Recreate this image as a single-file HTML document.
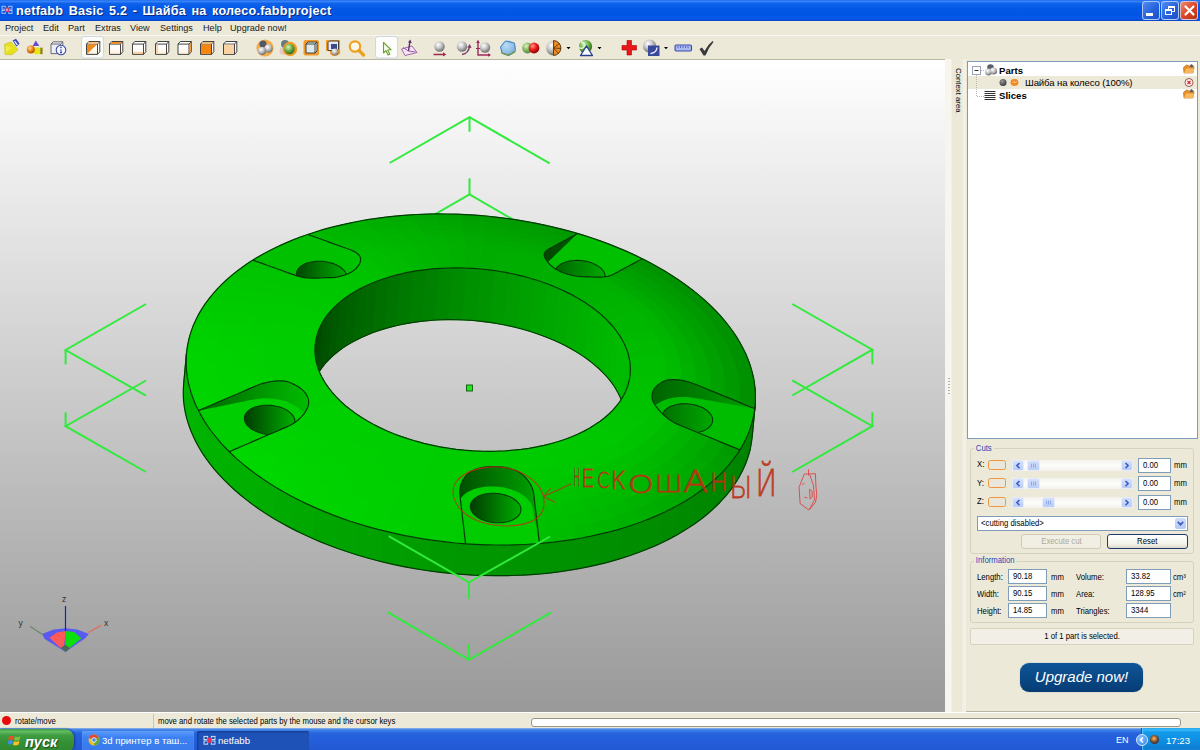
<!DOCTYPE html>
<html lang="ru">
<head>
<meta charset="utf-8">
<title>netfabb Basic 5.2 - Шайба на колесо.fabbproject</title>
<style>
*{box-sizing:border-box;margin:0;padding:0}
html,body{width:1200px;height:750px;overflow:hidden;background:#ece9d8}
body{position:relative;font-family:"Liberation Sans","DejaVu Sans",sans-serif;font-size:9.5px;color:#000}
.abs{position:absolute}
#titlebar{left:0;top:0;width:1200px;height:21px;background:linear-gradient(#1a6af0 0%,#3b86fb 6%,#0f62ea 16%,#0458e6 40%,#0255e4 70%,#0659ea 88%,#0a4cd2 96%,#0b43c0 100%)}
#titletext{left:16px;top:3px;color:#fff;font-weight:bold;font-size:12.6px;line-height:16px;white-space:nowrap;letter-spacing:.25px;word-spacing:1.7px;text-shadow:1px 1px 0 #0a2a80}
.wbtn{top:1px;width:18px;height:19px;border:1px solid rgba(220,232,255,.75);border-radius:3.5px;background:linear-gradient(135deg,#4f8cf0,#2862dc 55%,#1c4fc4)}
#menubar{left:0;top:21px;width:1200px;height:14px;background:#ece9d8}
#menubar span{position:absolute;top:0;font-size:9.6px;line-height:14px;white-space:nowrap;transform:scaleX(.95);transform-origin:0 50%;color:#1a1a1a}
#toolbar{left:0;top:35px;width:1200px;height:25px;background:#ece9d8;border-top:1px solid #f8f6ee;border-bottom:1px solid #b9b7a6}
#viewport{left:0;top:60px;width:945px;height:652px;overflow:hidden;background:linear-gradient(#ffffff,#999999)}
#splitter{left:945px;top:59px;width:22px;height:653px;background:linear-gradient(90deg,#f6f4ec 0,#f8f6ee 6px,#ece9d8 7px,#ece9d8 17px,#f3f1e6 18px,#f3f1e6 21px,#e4e0cf 22px)}
#ctxlabel{left:953px;top:68px;width:10px;height:50px;writing-mode:vertical-rl;font-size:7.8px;line-height:10px;white-space:nowrap}
#rpanel{left:967px;top:59px;width:233px;height:653px;background:#ece9d8}
#tree{left:967px;top:61px;width:231px;height:378px;background:#fff;border:1px solid #7f9db9}
#statusbar{left:0;top:712px;width:1200px;height:16px;background:#ece9d8;border-top:1px solid #fff}
#taskbar{left:0;top:728px;width:1200px;height:22px;background:linear-gradient(#9bb8e8 0%,#4a8ae6 6%,#3a7ce8 12%,#2663dc 24%,#245ddb 60%,#2358d2 100%)}

.gb{border:1px solid #d6d2c0;border-radius:3px}
.gbl{color:#1f47b8;font-size:8.6px;line-height:10px;background:#ece9d8;padding:0 2px;white-space:nowrap}
.lb{font-size:8.6px;line-height:11px;white-space:nowrap}
.gbl{transform:scaleX(.9);transform-origin:0 50%}
.lb>b,.inp>b{display:inline-block;font-weight:normal;transform:scaleX(.9);transform-origin:0 50%}
.ctr>b{transform-origin:50% 50%}
.inp{background:#fff;border:1px solid #7f9db9;font-size:8.6px;line-height:13px;padding-left:4px;white-space:nowrap}
.sb{height:11px;border-radius:2px;background:linear-gradient(#d4e0fb,#b9cdf6);border:1px solid #e6ecfb}
.trk{height:11px;background:linear-gradient(#f3f2ec,#fdfdfb 50%,#f3f2ec)}
.ob{width:18px;height:10px;border:1.5px solid #f0963c;border-radius:2.5px;background:#e9e7dc}
</style>
</head>
<body>
<div id="titlebar" class="abs"></div>
<svg class="abs" style="left:1px;top:5px;opacity:.85" width="12" height="10" viewBox="0 0 13 12">
 <g fill="none" stroke="#dfe6ff" stroke-width="1"><rect x="0.5" y="1.5" width="4" height="3.5"/><rect x="0.5" y="6.5" width="4" height="3.5"/><rect x="8.5" y="1.5" width="4" height="3.5"/><rect x="8.5" y="6.5" width="4" height="3.5"/></g>
 <rect x="4" y="3" width="5" height="5.5" fill="#e8305a"/><rect x="5.5" y="4.5" width="2" height="2.5" fill="#ffd0dc"/>
</svg>
<div id="titletext" class="abs">netfabb Basic 5.2 - Шайба на колесо.fabbproject</div>
<div class="abs wbtn" style="left:1142px"><div class="abs" style="left:3px;top:11px;width:7px;height:3px;background:#fff"></div></div>
<div class="abs wbtn" style="left:1161px">
 <div class="abs" style="left:6px;top:4px;width:7px;height:6px;border:1px solid #fff;border-top-width:2px"></div>
 <div class="abs" style="left:3px;top:7px;width:7px;height:6px;border:1px solid #fff;border-top-width:2px;background:#2a66dc"></div>
</div>
<div class="abs wbtn" style="left:1180px;background:linear-gradient(135deg,#ee8a6e,#d9482a 50%,#b8300f)">
 <svg class="abs" style="left:0.500px;top:1px" width="15" height="15" viewBox="0 0 15 15"><path d="M3.5 3.5 L11.5 11.5 M11.5 3.5 L3.5 11.5" stroke="#fff" stroke-width="2.2" stroke-linecap="round"/></svg>
</div>
<div id="menubar" class="abs">
 <span style="left:5px">Project</span><span style="left:43px">Edit</span><span style="left:68px">Part</span><span style="left:95px">Extras</span><span style="left:130px">View</span><span style="left:160px">Settings</span><span style="left:203px">Help</span><span style="left:230px">Upgrade now!</span>
</div>
<div id="toolbar" class="abs"></div>
<svg class="abs" style="left:0;top:35px" width="760" height="24" viewBox="0 35 760 24">
<defs>
 <radialGradient id="gsph" cx="0.38" cy="0.32" r="0.7"><stop offset="0" stop-color="#ffffff"/><stop offset="0.45" stop-color="#c9c9c9"/><stop offset="1" stop-color="#6e6e6e"/></radialGradient>
 <radialGradient id="gorb" cx="0.38" cy="0.32" r="0.7"><stop offset="0" stop-color="#ffd9a0"/><stop offset="0.5" stop-color="#f08a1c"/><stop offset="1" stop-color="#a84e00"/></radialGradient>
 <radialGradient id="ggrn" cx="0.38" cy="0.32" r="0.7"><stop offset="0" stop-color="#d8f3c0"/><stop offset="0.5" stop-color="#6db24a"/><stop offset="1" stop-color="#2f6a1c"/></radialGradient>
 <radialGradient id="gred" cx="0.38" cy="0.32" r="0.7"><stop offset="0" stop-color="#ff9a8a"/><stop offset="0.5" stop-color="#ee1c1c"/><stop offset="1" stop-color="#8e0000"/></radialGradient>
 <radialGradient id="gblu" cx="0.38" cy="0.32" r="0.7"><stop offset="0" stop-color="#e8f4ff"/><stop offset="0.6" stop-color="#8cb8e0"/><stop offset="1" stop-color="#4a78a8"/></radialGradient>
 <linearGradient id="gface" x1="0" y1="0" x2="0" y2="1"><stop offset="0" stop-color="#ffffff"/><stop offset="0.5" stop-color="#ffffff"/><stop offset="1" stop-color="#fdecd6"/></linearGradient>
 <g id="cube"><path d="M0.500 3.100 L2.800 0.500 H13.800 V10.800 L11.500 13.400 H0.500 Z" fill="url(#gface)" stroke="#303030" stroke-width="0.900" stroke-linejoin="round"/><path d="M0.500 3.100 H11.500 V13.400 M11.500 3.100 L13.800 0.500" fill="none" stroke="#303030" stroke-width="0.900"/></g>
</defs>
<!-- open project -->
<path d="M4.600 44.200 L11 42 L18 49.800 L12.200 54.600 L5 54.600 Z" fill="#e6e01e" stroke="#c4bc18" stroke-width="0.600"/>
<path d="M6 52.500 L11.500 48 L6 45.500 Z" fill="#f6f25a" opacity="0.700"/>
<path d="M12.600 40.600 L16 38.800 L19.600 43.800 L16.400 46.600 Z" fill="#3a48b8"/><path d="M14.600 41.200 l2.800 3.600" stroke="#fff" stroke-width="1.100"/>
<!-- shapes -->
<path d="M35.800 40.500 L39.400 46 H32.600 Z" fill="#6a4ad0"/>
<rect x="34.200" y="47.600" width="6" height="6.600" fill="#ece410"/><rect x="40.200" y="47.600" width="2.400" height="6.600" fill="#8a8a10"/>
<circle cx="30.800" cy="49.600" r="4" fill="url(#gorb)"/>
<!-- box info -->
<path d="M51 44 L53.200 41.800 H62.800 V51 M51 44 H60.500 V53.600 H51 Z M60.500 44 L62.800 41.800" fill="#eeeef0" stroke="#5a5e6a" stroke-width="0.900"/>
<circle cx="61" cy="50" r="4.800" fill="#f4f6ff" stroke="#3a4aa8" stroke-width="1.100"/><path d="M61 49.200 v3 M60 52.600 h2" stroke="#3a4aa8" stroke-width="1.100"/><circle cx="61" cy="47.400" r="0.800" fill="#3a4aa8"/>
<!-- selected bg -->
<rect x="81.5" y="36.5" width="22" height="21.5" rx="2.5" fill="#fbfbf8" stroke="#cfd6e4" stroke-width="1"/>
<!-- cubes -->
<g transform="translate(86,41)"><use href="#cube"/><path d="M1 3.600 H11 L1 12.900 Z" fill="#f08a1c"/><path d="M3 1 H13.200 L11.300 2.700 H1.500 Z" fill="#f8c080"/></g>
<g transform="translate(109,41)"><use href="#cube"/><path d="M3 1 H13.200 L11.300 2.700 H1.500 Z" fill="#f08a1c"/></g>
<g transform="translate(132,41)"><use href="#cube"/><path d="M1 11.200 H11 V12.900 H1 Z" fill="#f8c898"/></g>
<g transform="translate(155,41)"><use href="#cube"/><path d="M1 3.600 H3 V12.900 H1 Z" fill="#f8d4ac"/></g>
<g transform="translate(177.500,41)"><use href="#cube"/><path d="M12 3.300 L13.300 1.800 V10.600 L12 12.200 Z" fill="#f08a1c"/></g>
<g transform="translate(200,41)"><use href="#cube"/><path d="M1 3.600 H11 V12.900 H1 Z" fill="#f7860c"/><path d="M3 1 H13.200 L11.300 2.700 H1.500 Z" fill="#fbb868"/></g>
<g transform="translate(223,41)"><use href="#cube"/><path d="M1 3.600 H11 V12.900 H1 Z" fill="#fbd2a4"/></g>
<!-- zoom icons -->
<g><circle cx="265" cy="48" r="8.6" fill="#f6a030" opacity="0.85"/><circle cx="263" cy="44" r="3.6" fill="#50586a"/><circle cx="268.5" cy="48.5" r="4.2" fill="url(#gsph)"/><circle cx="262" cy="51" r="4" fill="url(#gsph)"/></g>
<g><circle cx="283.5" cy="51" r="4" fill="#e8c8c0"/><circle cx="285" cy="44" r="4" fill="#6a7a80"/><circle cx="290" cy="49" r="7.2" fill="#f09a20"/><circle cx="289.5" cy="49" r="5.2" fill="url(#ggrn)"/></g>
<g><rect x="303.5" y="40" width="15.5" height="15.5" rx="2" fill="#f09a28"/><path d="M306 44 L308 42 H317 V51 L315 53 H306 Z" fill="#dfe9ea" stroke="#333" stroke-width="0.9"/><path d="M306 44 H315 V53 M315 44 L317 42" fill="none" stroke="#333" stroke-width="0.9"/></g>
<g><path d="M326 40 H340 V50 Q342 55 335 56 Q329 56 330 51 H326 Z" fill="#f09a28"/><path d="M328 42.5 L329.5 41 H338.5 V49 L337 50.5 H328 Z" fill="#e8e8ee" stroke="#333" stroke-width="0.9"/><rect x="331" y="44" width="6" height="5" fill="#3c4a8a"/><circle cx="335" cy="52" r="3.4" fill="url(#gsph)"/></g>
<g><circle cx="355" cy="46.5" r="5.2" fill="#fff8e8" stroke="#f0a020" stroke-width="2.2"/><path d="M359 50.5 L363.5 55" stroke="#e8a020" stroke-width="3.2" stroke-linecap="round"/></g>
<!-- selected select tool -->
<rect x="375.5" y="36.5" width="22" height="21.5" rx="2.5" fill="#fdfdfb" stroke="#cfd6e4" stroke-width="1"/>
<path d="M383.5 42.5 L383.5 53 L386 50.6 L388 55 L389.8 54.2 L387.8 50 L391.2 49.8 Z" fill="#f4fbe8" stroke="#6aa030" stroke-width="1.1" stroke-linejoin="round"/>
<!-- axes icon -->
<path d="M401.5 49 L412 46 L417 52.5 L405 55.5 Z" fill="#f4e4f4" stroke="#9a5aa0" stroke-width="0.9"/>
<path d="M408.5 51 L410 41" stroke="#5a2a70" stroke-width="1.4"/><path d="M408 42.5 L410.2 39.5 L411.8 43" fill="#5a2a70"/>
<path d="M408.5 51 L403 47.5 M408.5 51 L415.5 52" stroke="#9a5aa0" stroke-width="1"/>
<!-- move -->
<circle cx="439.5" cy="46.5" r="5.2" fill="url(#gsph)"/><path d="M433.5 54.5 H444" stroke="#a02848" stroke-width="1.5"/><path d="M443 52.3 L446.3 54.5 L443 56.6 Z" fill="#a02848"/>
<!-- rotate -->
<circle cx="462" cy="46.5" r="5.2" fill="url(#gsph)"/><path d="M462 54.5 Q468.5 53.5 469.5 46.5" fill="none" stroke="#7a3a70" stroke-width="1.5"/><path d="M467.3 47.6 L469.8 44 L471.5 48 Z" fill="#7a3a70"/>
<!-- scale -->
<circle cx="485" cy="47.5" r="5.2" fill="url(#gsph)"/><path d="M478 41 V55 H490" fill="none" stroke="#a02858" stroke-width="1.4"/><path d="M476.2 43 L478 39.8 L479.8 43 Z M488 53.2 L491 55 L488 56.8 Z" fill="#a02858"/><path d="M476 48.5 h4" stroke="#a02858" stroke-width="1"/>
<!-- blue polygon sphere -->
<circle cx="508" cy="48" r="7.4" fill="url(#gblu)"/><path d="M500.5 47 L505.5 41 L514.5 43 L515.5 50.5 L509 55.5 L502 53 Z" fill="#9ccaf0" fill-opacity="0.6" stroke="#3a78b8" stroke-width="0.9"/><path d="M501 52.5 Q508 57.5 515.5 51.5" fill="none" stroke="#7a9a40" stroke-width="1.2"/>
<!-- green red -->
<circle cx="527.5" cy="48" r="5.4" fill="url(#ggrn)" opacity="0.8"/><circle cx="534" cy="48" r="5.4" fill="url(#gred)"/>
<!-- half sphere -->
<circle cx="553.5" cy="48" r="7.4" fill="url(#gsph)"/><path d="M553.5 40.6 A7.4 7.4 0 0 1 553.5 55.4 Z" fill="#f08a1c" stroke="#3a2a10" stroke-width="0.8"/><path d="M553.5 48 L559.5 43.5 M553.5 48 L560.8 48.5 M553.5 48 L558.5 53.5" stroke="#3a2a10" stroke-width="0.7"/>
<path d="M566.5 47 h4 l-2 2.2 Z" fill="#000"/>
<!-- green sphere with triangle -->
<circle cx="585.5" cy="46.5" r="6.6" fill="url(#ggrn)"/><path d="M578 45 a3.2 3.2 0 1 0 3 -3" fill="none" stroke="#e8f4e0" stroke-width="1.3"/>
<path d="M586.5 46 L592.5 55.5 H580.5 Z" fill="#f4f8ff" stroke="#28408a" stroke-width="1.3" stroke-linejoin="round"/>
<path d="M597.5 47 h4 l-2 2.2 Z" fill="#000"/>
<!-- red cross -->
<path d="M627 40.5 H631.5 V45.5 H636.5 V50 H631.5 V55 H627 V50 H622 V45.5 H627 Z" fill="#e81818" stroke="#b00000" stroke-width="0.6"/>
<!-- sphere with blue square -->
<circle cx="649.5" cy="46" r="6.6" fill="url(#gsph)"/><rect x="648" y="45.5" width="11.5" height="10.5" fill="#3a4a9a"/><path d="M650.5 53.5 Q656.5 53 657 47.5" fill="none" stroke="#e8ecff" stroke-width="1.4"/>
<path d="M664 47 h4 l-2 2.2 Z" fill="#000"/>
<!-- ruler -->
<rect x="675" y="45" width="16.5" height="6" rx="1.2" fill="#a8b8f0" stroke="#3a4aa8" stroke-width="1.1"/><path d="M678 46 v2 M680.5 46 v2 M683 46 v2 M685.5 46 v2 M688 46 v2" stroke="#3a4aa8" stroke-width="0.7"/>
<!-- checkmark -->
<path d="M699.5 49 L702 47.5 L704.5 51 Q708 44.5 712.5 41 L713.5 42 Q708.5 47.5 705.5 55.5 L703.5 55.5 Z" fill="#3a3a3a"/>
</svg>
<div id="viewport" class="abs">
<svg class="abs" style="left:0;top:0" width="945" height="652" viewBox="0 0 945 652" font-family="Liberation Sans, sans-serif">
<g fill="none" stroke="#30ea3c" stroke-width="2" stroke-linecap="butt"><path d="M389.7 103.0 L469.5 57.2 L549.7 103.3" /><path d="M469.5 57.2 L469.5 71.7" /><path d="M389.5 180.5 L469.5 134.5 L549.5 180.5" /><path d="M469.5 134.5 L469.5 118.3" /><path d="M146.0 244.0 L65.6 290.0 L146.0 335.7" /><path d="M65.6 290.0 L65.6 304.4" /><path d="M146.0 320.5 L65.6 366.2 L146.0 412.0" /><path d="M65.6 366.2 L65.6 352.3" /><path d="M792.3 244.0 L872.4 289.7 L792.3 335.5" /><path d="M872.4 289.7 L872.4 304.4" /><path d="M792.3 320.3 L872.4 366.2 L792.3 412.0" /><path d="M872.4 366.2 L872.4 352.3" /></g>
<g shape-rendering="geometricPrecision">
<path d="M186.5 293.1 L187.7 284.6 L189.7 276.2 L192.4 267.9 L195.9 259.7 L200.1 251.7 L205.1 243.9 L210.8 236.3 L217.3 228.9 L224.4 221.8 L232.2 214.9 L240.6 208.4 L249.7 202.1 L259.4 196.1 L269.7 190.5 L280.5 185.3 L291.8 180.4 L303.7 175.9 L316.0 171.8 L328.7 168.0 L341.8 164.8 L355.3 161.9 L369.0 159.4 L383.1 157.4 L397.4 155.9 L411.9 154.8 L426.5 154.1 L441.3 153.9 L456.2 154.2 L471.1 154.9 L486.0 156.0 L500.8 157.6 L515.6 159.7 L530.2 162.2 L544.7 165.1 L559.0 168.4 L573.1 172.2 L586.8 176.3 L600.3 180.9 L613.4 185.8 L626.1 191.1 L638.3 196.8 L650.2 202.8 L661.5 209.1 L672.3 215.7 L682.5 222.6 L692.2 229.7 L701.3 237.1 L709.7 244.8 L717.5 252.6 L724.6 260.6 L731.0 268.8 L736.7 277.1 L741.6 285.5 L745.9 294.1 L749.3 302.7 L752.0 311.3 L754.0 320.0 L755.1 328.6 L755.5 337.3 L755.1 345.9 L752.2 376.5 L751.1 385.1 L749.1 393.5 L746.4 401.8 L742.9 409.9 L738.6 417.9 L733.6 425.8 L727.9 433.4 L721.5 440.7 L714.4 447.9 L706.6 454.7 L698.1 461.3 L689.0 467.6 L679.3 473.5 L669.1 479.1 L658.2 484.4 L646.9 489.3 L635.1 493.8 L622.8 497.9 L610.1 501.6 L597.0 504.9 L583.5 507.8 L569.7 510.2 L555.7 512.2 L541.4 513.8 L526.9 514.9 L512.2 515.5 L497.4 515.7 L482.6 515.5 L467.7 514.8 L452.8 513.6 L437.9 512.0 L423.2 510.0 L408.5 507.5 L394.0 504.6 L379.7 501.2 L365.7 497.5 L351.9 493.3 L338.5 488.8 L325.4 483.8 L312.7 478.5 L300.4 472.9 L288.6 466.9 L277.3 460.6 L266.5 454.0 L256.2 447.1 L246.5 439.9 L237.5 432.5 L229.1 424.9 L221.3 417.1 L214.2 409.1 L207.8 400.9 L202.1 392.6 L197.1 384.1 L192.9 375.6 L189.4 367.0 L186.7 358.4 L184.8 349.7 L183.6 341.0 L183.3 332.4 L183.7 323.8 Z M630.2 314.2 L629.5 318.9 L628.4 323.6 L626.9 328.2 L625.0 332.7 L622.6 337.1 L619.9 341.5 L616.7 345.7 L613.1 349.8 L609.2 353.7 L604.9 357.5 L600.2 361.2 L595.1 364.6 L589.8 367.9 L584.1 371.1 L578.1 374.0 L571.8 376.7 L565.3 379.2 L558.4 381.5 L551.4 383.5 L544.1 385.3 L536.7 386.9 L529.0 388.3 L521.3 389.4 L513.3 390.2 L505.3 390.9 L497.2 391.2 L489.0 391.3 L480.8 391.2 L472.5 390.8 L464.2 390.2 L456.0 389.3 L447.8 388.1 L439.7 386.8 L431.7 385.1 L423.8 383.3 L416.0 381.2 L408.4 378.9 L400.9 376.4 L393.6 373.7 L386.6 370.7 L379.8 367.6 L373.3 364.3 L367.0 360.8 L361.0 357.1 L355.3 353.3 L350.0 349.3 L344.9 345.2 L340.3 341.0 L336.0 336.7 L332.0 332.2 L328.5 327.7 L325.3 323.1 L322.6 318.4 L320.2 313.7 L318.3 308.9 L316.8 304.1 L315.7 299.3 L315.1 294.5 L314.9 289.7 L315.1 285.0 L315.8 280.3 L316.9 275.6 L318.4 271.0 L320.3 266.5 L322.7 262.0 L325.4 257.7 L328.6 253.5 L332.2 249.4 L336.1 245.4 L340.4 241.6 L345.1 238.0 L350.1 234.5 L355.5 231.2 L361.2 228.1 L367.2 225.2 L373.5 222.5 L380.0 220.0 L386.9 217.7 L393.9 215.7 L401.2 213.8 L408.6 212.2 L416.3 210.9 L424.0 209.8 L432.0 208.9 L440.0 208.3 L448.1 208.0 L456.3 207.8 L464.5 208.0 L472.8 208.4 L481.0 209.0 L489.3 209.9 L497.5 211.0 L505.6 212.4 L513.6 214.0 L521.5 215.9 L529.3 218.0 L536.9 220.3 L544.4 222.8 L551.6 225.5 L558.7 228.5 L565.5 231.6 L572.0 234.9 L578.3 238.4 L584.3 242.1 L590.0 245.9 L595.3 249.8 L600.4 253.9 L605.0 258.2 L609.3 262.5 L613.3 267.0 L616.8 271.5 L620.0 276.1 L622.7 280.8 L625.1 285.5 L627.0 290.3 L628.5 295.0 L629.5 299.8 L630.2 304.7 L630.4 309.4 Z" fill="rgb(0,170,0)" fill-rule="evenodd"/>
<path d="M753.4 317.1 L755.3 331.5 L752.5 362.2 L750.5 347.8 Z" fill="rgb(0,128,0)" stroke="rgb(0,128,0)" stroke-width="0.9"/>
<path d="M755.3 331.5 L755.1 345.9 L752.2 376.5 L752.5 362.2 Z" fill="rgb(0,128,0)" stroke="rgb(0,128,0)" stroke-width="0.9"/>
<path d="M755.1 345.9 L752.7 360.0 L749.8 390.7 L752.2 376.5 Z" fill="rgb(0,129,0)" stroke="rgb(0,129,0)" stroke-width="0.9"/>
<path d="M752.7 360.0 L748.1 373.9 L745.3 404.5 L749.8 390.7 Z" fill="rgb(0,130,0)" stroke="rgb(0,130,0)" stroke-width="0.9"/>
<path d="M748.1 373.9 L741.5 387.3 L738.6 417.9 L745.3 404.5 Z" fill="rgb(0,131,0)" stroke="rgb(0,131,0)" stroke-width="0.9"/>
<path d="M741.5 387.3 L732.7 400.2 L729.9 430.9 L738.6 417.9 Z" fill="rgb(0,133,0)" stroke="rgb(0,133,0)" stroke-width="0.9"/>
<path d="M732.7 400.2 L722.0 412.5 L719.2 443.2 L729.9 430.9 Z" fill="rgb(0,134,0)" stroke="rgb(0,134,0)" stroke-width="0.9"/>
<path d="M722.0 412.5 L709.4 424.1 L706.6 454.7 L719.2 443.2 Z" fill="rgb(0,135,0)" stroke="rgb(0,135,0)" stroke-width="0.9"/>
<path d="M709.4 424.1 L695.0 434.9 L692.1 465.5 L706.6 454.7 Z" fill="rgb(0,137,0)" stroke="rgb(0,137,0)" stroke-width="0.9"/>
<path d="M695.0 434.9 L678.8 444.8 L676.0 475.4 L692.1 465.5 Z" fill="rgb(0,138,0)" stroke="rgb(0,138,0)" stroke-width="0.9"/>
<path d="M678.8 444.8 L661.1 453.7 L658.2 484.4 L676.0 475.4 Z" fill="rgb(0,139,0)" stroke="rgb(0,139,0)" stroke-width="0.9"/>
<path d="M661.1 453.7 L641.9 461.7 L639.1 492.3 L658.2 484.4 Z" fill="rgb(0,141,0)" stroke="rgb(0,141,0)" stroke-width="0.9"/>
<path d="M641.9 461.7 L621.4 468.5 L618.6 499.2 L639.1 492.3 Z" fill="rgb(0,142,0)" stroke="rgb(0,142,0)" stroke-width="0.9"/>
<path d="M621.4 468.5 L599.8 474.2 L597.0 504.9 L618.6 499.2 Z" fill="rgb(0,143,0)" stroke="rgb(0,143,0)" stroke-width="0.9"/>
<path d="M599.8 474.2 L577.2 478.8 L574.4 509.5 L597.0 504.9 Z" fill="rgb(0,145,0)" stroke="rgb(0,145,0)" stroke-width="0.9"/>
<path d="M577.2 478.8 L553.8 482.1 L550.9 512.8 L574.4 509.5 Z" fill="rgb(0,146,0)" stroke="rgb(0,146,0)" stroke-width="0.9"/>
<path d="M553.8 482.1 L529.7 484.2 L526.9 514.9 L550.9 512.8 Z" fill="rgb(0,147,0)" stroke="rgb(0,147,0)" stroke-width="0.9"/>
<path d="M529.7 484.2 L505.2 485.1 L502.4 515.7 L526.9 514.9 Z" fill="rgb(0,149,0)" stroke="rgb(0,149,0)" stroke-width="0.9"/>
<path d="M505.2 485.1 L480.5 484.6 L477.6 515.3 L502.4 515.7 Z" fill="rgb(0,150,0)" stroke="rgb(0,150,0)" stroke-width="0.9"/>
<path d="M480.5 484.6 L455.6 483.0 L452.8 513.6 L477.6 515.3 Z" fill="rgb(0,151,0)" stroke="rgb(0,151,0)" stroke-width="0.9"/>
<path d="M455.6 483.0 L430.9 480.0 L428.1 510.7 L452.8 513.6 Z" fill="rgb(0,153,0)" stroke="rgb(0,153,0)" stroke-width="0.9"/>
<path d="M430.9 480.0 L406.5 475.9 L403.7 506.6 L428.1 510.7 Z" fill="rgb(0,156,0)" stroke="rgb(0,156,0)" stroke-width="0.9"/>
<path d="M406.5 475.9 L382.6 470.6 L379.7 501.2 L403.7 506.6 Z" fill="rgb(0,158,0)" stroke="rgb(0,158,0)" stroke-width="0.9"/>
<path d="M382.6 470.6 L359.3 464.1 L356.5 494.8 L379.7 501.2 Z" fill="rgb(0,161,0)" stroke="rgb(0,161,0)" stroke-width="0.9"/>
<path d="M359.3 464.1 L336.9 456.5 L334.1 487.2 L356.5 494.8 Z" fill="rgb(0,163,0)" stroke="rgb(0,163,0)" stroke-width="0.9"/>
<path d="M336.9 456.5 L315.5 447.9 L312.7 478.5 L334.1 487.2 Z" fill="rgb(0,165,0)" stroke="rgb(0,165,0)" stroke-width="0.9"/>
<path d="M315.5 447.9 L295.3 438.3 L292.5 468.9 L312.7 478.5 Z" fill="rgb(0,168,0)" stroke="rgb(0,168,0)" stroke-width="0.9"/>
<path d="M295.3 438.3 L276.5 427.8 L273.6 458.4 L292.5 468.9 Z" fill="rgb(0,170,0)" stroke="rgb(0,170,0)" stroke-width="0.9"/>
<path d="M276.5 427.8 L259.1 416.4 L256.2 447.1 L273.6 458.4 Z" fill="rgb(0,173,0)" stroke="rgb(0,173,0)" stroke-width="0.9"/>
<path d="M259.1 416.4 L243.3 404.4 L240.4 435.0 L256.2 447.1 Z" fill="rgb(0,175,0)" stroke="rgb(0,175,0)" stroke-width="0.9"/>
<path d="M243.3 404.4 L229.2 391.7 L226.4 422.3 L240.4 435.0 Z" fill="rgb(0,176,0)" stroke="rgb(0,176,0)" stroke-width="0.9"/>
<path d="M229.2 391.7 L217.0 378.4 L214.2 409.1 L226.4 422.3 Z" fill="rgb(0,177,0)" stroke="rgb(0,177,0)" stroke-width="0.9"/>
<path d="M217.0 378.4 L206.7 364.7 L203.9 395.3 L214.2 409.1 Z" fill="rgb(0,178,0)" stroke="rgb(0,178,0)" stroke-width="0.9"/>
<path d="M206.7 364.7 L198.5 350.6 L195.6 381.3 L203.9 395.3 Z" fill="rgb(0,179,0)" stroke="rgb(0,179,0)" stroke-width="0.9"/>
<path d="M198.5 350.6 L192.3 336.3 L189.4 367.0 L195.6 381.3 Z" fill="rgb(0,180,0)" stroke="rgb(0,180,0)" stroke-width="0.9"/>
<path d="M192.3 336.3 L188.2 321.9 L185.4 352.6 L189.4 367.0 Z" fill="rgb(0,181,0)" stroke="rgb(0,181,0)" stroke-width="0.9"/>
<path d="M188.2 321.9 L186.3 307.5 L183.4 338.1 L185.4 352.6 Z" fill="rgb(0,182,0)" stroke="rgb(0,182,0)" stroke-width="0.9"/>
<path d="M186.3 307.5 L186.5 293.1 L183.7 323.8 L183.4 338.1 Z" fill="rgb(0,183,0)" stroke="rgb(0,183,0)" stroke-width="0.9"/>
<path d="M186.5 293.1 L188.9 279.0 L186.1 309.7 L183.7 323.8 Z" fill="rgb(0,184,0)" stroke="rgb(0,184,0)" stroke-width="0.9"/>
<path d="M188.9 279.0 L193.5 265.1 L190.6 295.8 L186.1 309.7 Z" fill="rgb(0,184,0)" stroke="rgb(0,184,0)" stroke-width="0.9"/>
<path d="M630.2 314.2 L628.8 322.0 L665.2 327.3 L666.8 317.6 Z" fill="rgb(0,192,0)" stroke="rgb(0,192,0)" stroke-width="0.9"/>
<path d="M628.8 322.0 L626.3 329.7 L662.1 336.7 L665.2 327.3 Z" fill="rgb(0,193,0)" stroke="rgb(0,193,0)" stroke-width="0.9"/>
<path d="M626.3 329.7 L622.6 337.1 L657.5 345.9 L662.1 336.7 Z" fill="rgb(0,194,0)" stroke="rgb(0,194,0)" stroke-width="0.9"/>
<path d="M622.6 337.1 L617.8 344.3 L651.6 354.7 L657.5 345.9 Z" fill="rgb(0,195,0)" stroke="rgb(0,195,0)" stroke-width="0.9"/>
<path d="M617.8 344.3 L611.9 351.1 L644.2 363.1 L651.6 354.7 Z" fill="rgb(0,196,0)" stroke="rgb(0,196,0)" stroke-width="0.9"/>
<path d="M611.9 351.1 L604.9 357.5 L635.6 371.0 L644.2 363.1 Z" fill="rgb(0,197,0)" stroke="rgb(0,197,0)" stroke-width="0.9"/>
<path d="M604.9 357.5 L596.9 363.5 L625.8 378.4 L635.6 371.0 Z" fill="rgb(0,198,0)" stroke="rgb(0,198,0)" stroke-width="0.9"/>
<path d="M596.9 363.5 L587.9 369.0 L614.7 385.1 L625.8 378.4 Z" fill="rgb(0,199,0)" stroke="rgb(0,199,0)" stroke-width="0.9"/>
<path d="M587.9 369.0 L578.1 374.0 L602.6 391.3 L614.7 385.1 Z" fill="rgb(0,200,0)" stroke="rgb(0,200,0)" stroke-width="0.9"/>
<path d="M578.1 374.0 L567.5 378.4 L589.5 396.7 L602.6 391.3 Z" fill="rgb(0,200,0)" stroke="rgb(0,200,0)" stroke-width="0.9"/>
<path d="M567.5 378.4 L556.1 382.2 L575.5 401.4 L589.5 396.7 Z" fill="rgb(0,201,0)" stroke="rgb(0,201,0)" stroke-width="0.9"/>
<path d="M556.1 382.2 L544.1 385.3 L560.8 405.3 L575.5 401.4 Z" fill="rgb(0,201,0)" stroke="rgb(0,201,0)" stroke-width="0.9"/>
<path d="M544.1 385.3 L531.6 387.9 L545.3 408.4 L560.8 405.3 Z" fill="rgb(0,202,0)" stroke="rgb(0,202,0)" stroke-width="0.9"/>
<path d="M531.6 387.9 L518.6 389.7 L529.3 410.7 L545.3 408.4 Z" fill="rgb(0,202,0)" stroke="rgb(0,202,0)" stroke-width="0.9"/>
<path d="M518.6 389.7 L505.3 390.9 L512.9 412.1 L529.3 410.7 Z" fill="rgb(0,203,0)" stroke="rgb(0,203,0)" stroke-width="0.9"/>
<path d="M505.3 390.9 L491.7 391.3 L496.2 412.7 L512.9 412.1 Z" fill="rgb(0,204,0)" stroke="rgb(0,204,0)" stroke-width="0.9"/>
<path d="M491.7 391.3 L478.0 391.1 L479.3 412.4 L496.2 412.7 Z" fill="rgb(0,204,0)" stroke="rgb(0,204,0)" stroke-width="0.9"/>
<path d="M478.0 391.1 L464.2 390.2 L462.3 411.2 L479.3 412.4 Z" fill="rgb(0,205,0)" stroke="rgb(0,205,0)" stroke-width="0.9"/>
<path d="M464.2 390.2 L450.5 388.5 L445.4 409.2 L462.3 411.2 Z" fill="rgb(0,205,0)" stroke="rgb(0,205,0)" stroke-width="0.9"/>
<path d="M450.5 388.5 L437.0 386.2 L428.7 406.4 L445.4 409.2 Z" fill="rgb(0,205,0)" stroke="rgb(0,205,0)" stroke-width="0.9"/>
<path d="M437.0 386.2 L423.8 383.3 L412.4 402.8 L428.7 406.4 Z" fill="rgb(0,206,0)" stroke="rgb(0,206,0)" stroke-width="0.9"/>
<path d="M423.8 383.3 L410.9 379.7 L396.5 398.3 L412.4 402.8 Z" fill="rgb(0,206,0)" stroke="rgb(0,206,0)" stroke-width="0.9"/>
<path d="M410.9 379.7 L398.5 375.5 L381.2 393.2 L396.5 398.3 Z" fill="rgb(0,206,0)" stroke="rgb(0,206,0)" stroke-width="0.9"/>
<path d="M398.5 375.5 L386.6 370.7 L366.6 387.3 L381.2 393.2 Z" fill="rgb(0,206,0)" stroke="rgb(0,206,0)" stroke-width="0.9"/>
<path d="M386.6 370.7 L375.4 365.4 L352.8 380.7 L366.6 387.3 Z" fill="rgb(0,206,0)" stroke="rgb(0,206,0)" stroke-width="0.9"/>
<path d="M375.4 365.4 L365.0 359.6 L339.9 373.5 L352.8 380.7 Z" fill="rgb(0,207,0)" stroke="rgb(0,207,0)" stroke-width="0.9"/>
<path d="M365.0 359.6 L355.3 353.3 L328.0 365.8 L339.9 373.5 Z" fill="rgb(0,207,0)" stroke="rgb(0,207,0)" stroke-width="0.9"/>
<path d="M355.3 353.3 L346.6 346.6 L317.2 357.6 L328.0 365.8 Z" fill="rgb(0,207,0)" stroke="rgb(0,207,0)" stroke-width="0.9"/>
<path d="M346.6 346.6 L338.8 339.6 L307.7 348.9 L317.2 357.6 Z" fill="rgb(0,207,0)" stroke="rgb(0,207,0)" stroke-width="0.9"/>
<path d="M338.8 339.6 L332.0 332.2 L299.3 339.8 L307.7 348.9 Z" fill="rgb(0,206,0)" stroke="rgb(0,206,0)" stroke-width="0.9"/>
<path d="M332.0 332.2 L326.3 324.6 L292.3 330.4 L299.3 339.8 Z" fill="rgb(0,206,0)" stroke="rgb(0,206,0)" stroke-width="0.9"/>
<path d="M326.3 324.6 L321.7 316.8 L286.6 320.8 L292.3 330.4 Z" fill="rgb(0,206,0)" stroke="rgb(0,206,0)" stroke-width="0.9"/>
<path d="M321.7 316.8 L318.3 308.9 L282.4 311.1 L286.6 320.8 Z" fill="rgb(0,206,0)" stroke="rgb(0,206,0)" stroke-width="0.9"/>
<path d="M318.3 308.9 L316.1 300.9 L279.6 301.2 L282.4 311.1 Z" fill="rgb(0,206,0)" stroke="rgb(0,206,0)" stroke-width="0.9"/>
<path d="M316.1 300.9 L315.0 292.9 L278.3 291.4 L279.6 301.2 Z" fill="rgb(0,205,0)" stroke="rgb(0,205,0)" stroke-width="0.9"/>
<path d="M315.0 292.9 L315.1 285.0 L278.5 281.6 L278.3 291.4 Z" fill="rgb(0,205,0)" stroke="rgb(0,205,0)" stroke-width="0.9"/>
<path d="M315.1 285.0 L316.5 277.1 L280.1 271.9 L278.5 281.6 Z" fill="rgb(0,204,0)" stroke="rgb(0,204,0)" stroke-width="0.9"/>
<path d="M316.5 277.1 L319.0 269.5 L283.2 262.5 L280.1 271.9 Z" fill="rgb(0,204,0)" stroke="rgb(0,204,0)" stroke-width="0.9"/>
<path d="M319.0 269.5 L322.7 262.0 L287.8 253.3 L283.2 262.5 Z" fill="rgb(0,202,0)" stroke="rgb(0,202,0)" stroke-width="0.9"/>
<path d="M322.7 262.0 L327.5 254.9 L293.7 244.5 L287.8 253.3 Z" fill="rgb(0,202,0)" stroke="rgb(0,202,0)" stroke-width="0.9"/>
<path d="M327.5 254.9 L333.4 248.1 L301.1 236.1 L293.7 244.5 Z" fill="rgb(0,200,0)" stroke="rgb(0,200,0)" stroke-width="0.9"/>
<path d="M333.4 248.1 L340.4 241.6 L309.7 228.2 L301.1 236.1 Z" fill="rgb(0,200,0)" stroke="rgb(0,200,0)" stroke-width="0.9"/>
<path d="M340.4 241.6 L348.4 235.7 L319.5 220.8 L309.7 228.2 Z" fill="rgb(0,198,0)" stroke="rgb(0,198,0)" stroke-width="0.9"/>
<path d="M348.4 235.7 L357.4 230.2 L330.6 214.0 L319.5 220.8 Z" fill="rgb(0,198,0)" stroke="rgb(0,198,0)" stroke-width="0.9"/>
<path d="M357.4 230.2 L367.2 225.2 L342.7 207.9 L330.6 214.0 Z" fill="rgb(0,196,0)" stroke="rgb(0,196,0)" stroke-width="0.9"/>
<path d="M367.2 225.2 L377.8 220.8 L355.8 202.5 L342.7 207.9 Z" fill="rgb(0,195,0)" stroke="rgb(0,195,0)" stroke-width="0.9"/>
<path d="M377.8 220.8 L389.2 217.0 L369.8 197.8 L355.8 202.5 Z" fill="rgb(0,192,0)" stroke="rgb(0,192,0)" stroke-width="0.9"/>
<path d="M389.2 217.0 L401.2 213.8 L384.5 193.9 L369.8 197.8 Z" fill="rgb(0,189,0)" stroke="rgb(0,189,0)" stroke-width="0.9"/>
<path d="M401.2 213.8 L413.7 211.3 L400.0 190.8 L384.5 193.9 Z" fill="rgb(0,187,0)" stroke="rgb(0,187,0)" stroke-width="0.9"/>
<path d="M413.7 211.3 L426.7 209.5 L416.0 188.5 L400.0 190.8 Z" fill="rgb(0,184,0)" stroke="rgb(0,184,0)" stroke-width="0.9"/>
<path d="M426.7 209.5 L440.0 208.3 L432.4 187.1 L416.0 188.5 Z" fill="rgb(0,181,0)" stroke="rgb(0,181,0)" stroke-width="0.9"/>
<path d="M440.0 208.3 L453.6 207.8 L449.1 186.5 L432.4 187.1 Z" fill="rgb(0,179,0)" stroke="rgb(0,179,0)" stroke-width="0.9"/>
<path d="M453.6 207.8 L467.3 208.1 L466.0 186.8 L449.1 186.5 Z" fill="rgb(0,176,0)" stroke="rgb(0,176,0)" stroke-width="0.9"/>
<path d="M467.3 208.1 L481.0 209.0 L483.0 187.9 L466.0 186.8 Z" fill="rgb(0,173,0)" stroke="rgb(0,173,0)" stroke-width="0.9"/>
<path d="M481.0 209.0 L494.7 210.6 L499.9 189.9 L483.0 187.9 Z" fill="rgb(0,172,0)" stroke="rgb(0,172,0)" stroke-width="0.9"/>
<path d="M494.7 210.6 L508.3 212.9 L516.6 192.8 L499.9 189.9 Z" fill="rgb(0,173,0)" stroke="rgb(0,173,0)" stroke-width="0.9"/>
<path d="M508.3 212.9 L521.5 215.9 L532.9 196.4 L516.6 192.8 Z" fill="rgb(0,174,0)" stroke="rgb(0,174,0)" stroke-width="0.9"/>
<path d="M521.5 215.9 L534.4 219.5 L548.8 200.8 L532.9 196.4 Z" fill="rgb(0,174,0)" stroke="rgb(0,174,0)" stroke-width="0.9"/>
<path d="M534.4 219.5 L546.8 223.7 L564.1 206.0 L548.8 200.8 Z" fill="rgb(0,175,0)" stroke="rgb(0,175,0)" stroke-width="0.9"/>
<path d="M546.8 223.7 L558.7 228.5 L578.7 211.9 L564.1 206.0 Z" fill="rgb(0,176,0)" stroke="rgb(0,176,0)" stroke-width="0.9"/>
<path d="M558.7 228.5 L569.9 233.8 L592.5 218.5 L578.7 211.9 Z" fill="rgb(0,176,0)" stroke="rgb(0,176,0)" stroke-width="0.9"/>
<path d="M569.9 233.8 L580.3 239.6 L605.4 225.6 L592.5 218.5 Z" fill="rgb(0,177,0)" stroke="rgb(0,177,0)" stroke-width="0.9"/>
<path d="M580.3 239.6 L590.0 245.9 L617.3 233.4 L605.4 225.6 Z" fill="rgb(0,178,0)" stroke="rgb(0,178,0)" stroke-width="0.9"/>
<path d="M590.0 245.9 L598.7 252.6 L628.0 241.6 L617.3 233.4 Z" fill="rgb(0,179,0)" stroke="rgb(0,179,0)" stroke-width="0.9"/>
<path d="M598.7 252.6 L606.5 259.6 L637.6 250.3 L628.0 241.6 Z" fill="rgb(0,180,0)" stroke="rgb(0,180,0)" stroke-width="0.9"/>
<path d="M606.5 259.6 L613.3 267.0 L646.0 259.4 L637.6 250.3 Z" fill="rgb(0,182,0)" stroke="rgb(0,182,0)" stroke-width="0.9"/>
<path d="M613.3 267.0 L619.0 274.6 L653.0 268.7 L646.0 259.4 Z" fill="rgb(0,183,0)" stroke="rgb(0,183,0)" stroke-width="0.9"/>
<path d="M619.0 274.6 L623.5 282.3 L658.6 278.3 L653.0 268.7 Z" fill="rgb(0,185,0)" stroke="rgb(0,185,0)" stroke-width="0.9"/>
<path d="M623.5 282.3 L627.0 290.3 L662.9 288.1 L658.6 278.3 Z" fill="rgb(0,187,0)" stroke="rgb(0,187,0)" stroke-width="0.9"/>
<path d="M627.0 290.3 L629.2 298.2 L665.7 297.9 L662.9 288.1 Z" fill="rgb(0,188,0)" stroke="rgb(0,188,0)" stroke-width="0.9"/>
<path d="M629.2 298.2 L630.3 306.2 L667.0 307.8 L665.7 297.9 Z" fill="rgb(0,190,0)" stroke="rgb(0,190,0)" stroke-width="0.9"/>
<path d="M630.3 306.2 L630.2 314.2 L666.8 317.6 L667.0 307.8 Z" fill="rgb(0,191,0)" stroke="rgb(0,191,0)" stroke-width="0.9"/>
<path d="M666.8 317.6 L665.2 327.3 L679.8 332.7 L681.5 322.3 Z" fill="rgb(0,188,0)" stroke="rgb(0,188,0)" stroke-width="0.9"/>
<path d="M665.2 327.3 L662.1 336.7 L676.4 342.9 L679.8 332.7 Z" fill="rgb(0,189,0)" stroke="rgb(0,189,0)" stroke-width="0.9"/>
<path d="M662.1 336.7 L657.5 345.9 L671.5 352.8 L676.4 342.9 Z" fill="rgb(0,190,0)" stroke="rgb(0,190,0)" stroke-width="0.9"/>
<path d="M657.5 345.9 L651.6 354.7 L665.1 362.3 L671.5 352.8 Z" fill="rgb(0,191,0)" stroke="rgb(0,191,0)" stroke-width="0.9"/>
<path d="M651.6 354.7 L644.2 363.1 L657.2 371.3 L665.1 362.3 Z" fill="rgb(0,193,0)" stroke="rgb(0,193,0)" stroke-width="0.9"/>
<path d="M644.2 363.1 L635.6 371.0 L647.9 379.9 L657.2 371.3 Z" fill="rgb(0,194,0)" stroke="rgb(0,194,0)" stroke-width="0.9"/>
<path d="M635.6 371.0 L625.8 378.4 L637.3 387.8 L647.9 379.9 Z" fill="rgb(0,195,0)" stroke="rgb(0,195,0)" stroke-width="0.9"/>
<path d="M625.8 378.4 L614.7 385.1 L625.4 395.1 L637.3 387.8 Z" fill="rgb(0,196,0)" stroke="rgb(0,196,0)" stroke-width="0.9"/>
<path d="M614.7 385.1 L602.6 391.3 L612.4 401.7 L625.4 395.1 Z" fill="rgb(0,197,0)" stroke="rgb(0,197,0)" stroke-width="0.9"/>
<path d="M602.6 391.3 L589.5 396.7 L598.3 407.5 L612.4 401.7 Z" fill="rgb(0,198,0)" stroke="rgb(0,198,0)" stroke-width="0.9"/>
<path d="M589.5 396.7 L575.5 401.4 L583.2 412.6 L598.3 407.5 Z" fill="rgb(0,199,0)" stroke="rgb(0,199,0)" stroke-width="0.9"/>
<path d="M575.5 401.4 L560.8 405.3 L567.3 416.8 L583.2 412.6 Z" fill="rgb(0,200,0)" stroke="rgb(0,200,0)" stroke-width="0.9"/>
<path d="M560.8 405.3 L545.3 408.4 L550.6 420.1 L567.3 416.8 Z" fill="rgb(0,200,0)" stroke="rgb(0,200,0)" stroke-width="0.9"/>
<path d="M545.3 408.4 L529.3 410.7 L533.4 422.6 L550.6 420.1 Z" fill="rgb(0,201,0)" stroke="rgb(0,201,0)" stroke-width="0.9"/>
<path d="M529.3 410.7 L512.9 412.1 L515.7 424.1 L533.4 422.6 Z" fill="rgb(0,202,0)" stroke="rgb(0,202,0)" stroke-width="0.9"/>
<path d="M512.9 412.1 L496.2 412.7 L497.7 424.7 L515.7 424.1 Z" fill="rgb(0,203,0)" stroke="rgb(0,203,0)" stroke-width="0.9"/>
<path d="M496.2 412.7 L479.3 412.4 L479.5 424.4 L497.7 424.7 Z" fill="rgb(0,204,0)" stroke="rgb(0,204,0)" stroke-width="0.9"/>
<path d="M479.3 412.4 L462.3 411.2 L461.2 423.2 L479.5 424.4 Z" fill="rgb(0,204,0)" stroke="rgb(0,204,0)" stroke-width="0.9"/>
<path d="M462.3 411.2 L445.4 409.2 L443.0 421.0 L461.2 423.2 Z" fill="rgb(0,205,0)" stroke="rgb(0,205,0)" stroke-width="0.9"/>
<path d="M445.4 409.2 L428.7 406.4 L425.0 418.0 L443.0 421.0 Z" fill="rgb(0,205,0)" stroke="rgb(0,205,0)" stroke-width="0.9"/>
<path d="M428.7 406.4 L412.4 402.8 L407.4 414.1 L425.0 418.0 Z" fill="rgb(0,206,0)" stroke="rgb(0,206,0)" stroke-width="0.9"/>
<path d="M412.4 402.8 L396.5 398.3 L390.3 409.3 L407.4 414.1 Z" fill="rgb(0,206,0)" stroke="rgb(0,206,0)" stroke-width="0.9"/>
<path d="M396.5 398.3 L381.2 393.2 L373.8 403.7 L390.3 409.3 Z" fill="rgb(0,206,0)" stroke="rgb(0,206,0)" stroke-width="0.9"/>
<path d="M381.2 393.2 L366.6 387.3 L358.1 397.4 L373.8 403.7 Z" fill="rgb(0,207,0)" stroke="rgb(0,207,0)" stroke-width="0.9"/>
<path d="M366.6 387.3 L352.8 380.7 L343.2 390.3 L358.1 397.4 Z" fill="rgb(0,207,0)" stroke="rgb(0,207,0)" stroke-width="0.9"/>
<path d="M352.8 380.7 L339.9 373.5 L329.3 382.6 L343.2 390.3 Z" fill="rgb(0,207,0)" stroke="rgb(0,207,0)" stroke-width="0.9"/>
<path d="M339.9 373.5 L328.0 365.8 L316.5 374.2 L329.3 382.6 Z" fill="rgb(0,208,0)" stroke="rgb(0,208,0)" stroke-width="0.9"/>
<path d="M328.0 365.8 L317.2 357.6 L304.9 365.4 L316.5 374.2 Z" fill="rgb(0,208,0)" stroke="rgb(0,208,0)" stroke-width="0.9"/>
<path d="M317.2 357.6 L307.7 348.9 L294.6 356.0 L304.9 365.4 Z" fill="rgb(0,207,0)" stroke="rgb(0,207,0)" stroke-width="0.9"/>
<path d="M307.7 348.9 L299.3 339.8 L285.6 346.2 L294.6 356.0 Z" fill="rgb(0,207,0)" stroke="rgb(0,207,0)" stroke-width="0.9"/>
<path d="M299.3 339.8 L292.3 330.4 L278.0 336.2 L285.6 346.2 Z" fill="rgb(0,207,0)" stroke="rgb(0,207,0)" stroke-width="0.9"/>
<path d="M292.3 330.4 L286.6 320.8 L272.0 325.8 L278.0 336.2 Z" fill="rgb(0,207,0)" stroke="rgb(0,207,0)" stroke-width="0.9"/>
<path d="M286.6 320.8 L282.4 311.1 L267.4 315.3 L272.0 325.8 Z" fill="rgb(0,206,0)" stroke="rgb(0,206,0)" stroke-width="0.9"/>
<path d="M282.4 311.1 L279.6 301.2 L264.4 304.7 L267.4 315.3 Z" fill="rgb(0,206,0)" stroke="rgb(0,206,0)" stroke-width="0.9"/>
<path d="M279.6 301.2 L278.3 291.4 L263.0 294.1 L264.4 304.7 Z" fill="rgb(0,206,0)" stroke="rgb(0,206,0)" stroke-width="0.9"/>
<path d="M278.3 291.4 L278.5 281.6 L263.2 283.5 L263.0 294.1 Z" fill="rgb(0,206,0)" stroke="rgb(0,206,0)" stroke-width="0.9"/>
<path d="M278.5 281.6 L280.1 271.9 L264.9 273.1 L263.2 283.5 Z" fill="rgb(0,205,0)" stroke="rgb(0,205,0)" stroke-width="0.9"/>
<path d="M280.1 271.9 L283.2 262.5 L268.3 262.9 L264.9 273.1 Z" fill="rgb(0,204,0)" stroke="rgb(0,204,0)" stroke-width="0.9"/>
<path d="M283.2 262.5 L287.8 253.3 L273.2 253.0 L268.3 262.9 Z" fill="rgb(0,203,0)" stroke="rgb(0,203,0)" stroke-width="0.9"/>
<path d="M287.8 253.3 L293.7 244.5 L279.6 243.5 L273.2 253.0 Z" fill="rgb(0,202,0)" stroke="rgb(0,202,0)" stroke-width="0.9"/>
<path d="M293.7 244.5 L301.1 236.1 L287.5 234.5 L279.6 243.5 Z" fill="rgb(0,201,0)" stroke="rgb(0,201,0)" stroke-width="0.9"/>
<path d="M301.1 236.1 L309.7 228.2 L296.8 226.0 L287.5 234.5 Z" fill="rgb(0,199,0)" stroke="rgb(0,199,0)" stroke-width="0.9"/>
<path d="M309.7 228.2 L319.5 220.8 L307.4 218.0 L296.8 226.0 Z" fill="rgb(0,198,0)" stroke="rgb(0,198,0)" stroke-width="0.9"/>
<path d="M319.5 220.8 L330.6 214.0 L319.3 210.7 L307.4 218.0 Z" fill="rgb(0,197,0)" stroke="rgb(0,197,0)" stroke-width="0.9"/>
<path d="M330.6 214.0 L342.7 207.9 L332.3 204.1 L319.3 210.7 Z" fill="rgb(0,196,0)" stroke="rgb(0,196,0)" stroke-width="0.9"/>
<path d="M342.7 207.9 L355.8 202.5 L346.4 198.3 L332.3 204.1 Z" fill="rgb(0,194,0)" stroke="rgb(0,194,0)" stroke-width="0.9"/>
<path d="M355.8 202.5 L369.8 197.8 L361.5 193.2 L346.4 198.3 Z" fill="rgb(0,191,0)" stroke="rgb(0,191,0)" stroke-width="0.9"/>
<path d="M369.8 197.8 L384.5 193.9 L377.4 189.0 L361.5 193.2 Z" fill="rgb(0,189,0)" stroke="rgb(0,189,0)" stroke-width="0.9"/>
<path d="M384.5 193.9 L400.0 190.8 L394.0 185.7 L377.4 189.0 Z" fill="rgb(0,186,0)" stroke="rgb(0,186,0)" stroke-width="0.9"/>
<path d="M400.0 190.8 L416.0 188.5 L411.3 183.2 L394.0 185.7 Z" fill="rgb(0,183,0)" stroke="rgb(0,183,0)" stroke-width="0.9"/>
<path d="M416.0 188.5 L432.4 187.1 L429.0 181.7 L411.3 183.2 Z" fill="rgb(0,180,0)" stroke="rgb(0,180,0)" stroke-width="0.9"/>
<path d="M432.4 187.1 L449.1 186.5 L447.0 181.1 L429.0 181.7 Z" fill="rgb(0,178,0)" stroke="rgb(0,178,0)" stroke-width="0.9"/>
<path d="M449.1 186.5 L466.0 186.8 L465.2 181.4 L447.0 181.1 Z" fill="rgb(0,175,0)" stroke="rgb(0,175,0)" stroke-width="0.9"/>
<path d="M466.0 186.8 L483.0 187.9 L483.5 182.6 L465.2 181.4 Z" fill="rgb(0,172,0)" stroke="rgb(0,172,0)" stroke-width="0.9"/>
<path d="M483.0 187.9 L499.9 189.9 L501.7 184.8 L483.5 182.6 Z" fill="rgb(0,171,0)" stroke="rgb(0,171,0)" stroke-width="0.9"/>
<path d="M499.9 189.9 L516.6 192.8 L519.7 187.8 L501.7 184.8 Z" fill="rgb(0,171,0)" stroke="rgb(0,171,0)" stroke-width="0.9"/>
<path d="M516.6 192.8 L532.9 196.4 L537.3 191.7 L519.7 187.8 Z" fill="rgb(0,172,0)" stroke="rgb(0,172,0)" stroke-width="0.9"/>
<path d="M532.9 196.4 L548.8 200.8 L554.4 196.5 L537.3 191.7 Z" fill="rgb(0,172,0)" stroke="rgb(0,172,0)" stroke-width="0.9"/>
<path d="M548.8 200.8 L564.1 206.0 L570.9 202.1 L554.4 196.5 Z" fill="rgb(0,173,0)" stroke="rgb(0,173,0)" stroke-width="0.9"/>
<path d="M564.1 206.0 L578.7 211.9 L586.6 208.4 L570.9 202.1 Z" fill="rgb(0,173,0)" stroke="rgb(0,173,0)" stroke-width="0.9"/>
<path d="M578.7 211.9 L592.5 218.5 L601.5 215.5 L586.6 208.4 Z" fill="rgb(0,174,0)" stroke="rgb(0,174,0)" stroke-width="0.9"/>
<path d="M592.5 218.5 L605.4 225.6 L615.3 223.2 L601.5 215.5 Z" fill="rgb(0,174,0)" stroke="rgb(0,174,0)" stroke-width="0.9"/>
<path d="M605.4 225.6 L617.3 233.4 L628.1 231.6 L615.3 223.2 Z" fill="rgb(0,175,0)" stroke="rgb(0,175,0)" stroke-width="0.9"/>
<path d="M617.3 233.4 L628.0 241.6 L639.8 240.5 L628.1 231.6 Z" fill="rgb(0,176,0)" stroke="rgb(0,176,0)" stroke-width="0.9"/>
<path d="M628.0 241.6 L637.6 250.3 L650.1 249.8 L639.8 240.5 Z" fill="rgb(0,177,0)" stroke="rgb(0,177,0)" stroke-width="0.9"/>
<path d="M637.6 250.3 L646.0 259.4 L659.1 259.6 L650.1 249.8 Z" fill="rgb(0,179,0)" stroke="rgb(0,179,0)" stroke-width="0.9"/>
<path d="M646.0 259.4 L653.0 268.7 L666.6 269.7 L659.1 259.6 Z" fill="rgb(0,180,0)" stroke="rgb(0,180,0)" stroke-width="0.9"/>
<path d="M653.0 268.7 L658.6 278.3 L672.7 280.0 L666.6 269.7 Z" fill="rgb(0,181,0)" stroke="rgb(0,181,0)" stroke-width="0.9"/>
<path d="M658.6 278.3 L662.9 288.1 L677.3 290.5 L672.7 280.0 Z" fill="rgb(0,183,0)" stroke="rgb(0,183,0)" stroke-width="0.9"/>
<path d="M662.9 288.1 L665.7 297.9 L680.3 301.1 L677.3 290.5 Z" fill="rgb(0,184,0)" stroke="rgb(0,184,0)" stroke-width="0.9"/>
<path d="M665.7 297.9 L667.0 307.8 L681.7 311.8 L680.3 301.1 Z" fill="rgb(0,186,0)" stroke="rgb(0,186,0)" stroke-width="0.9"/>
<path d="M667.0 307.8 L666.8 317.6 L681.5 322.3 L681.7 311.8 Z" fill="rgb(0,187,0)" stroke="rgb(0,187,0)" stroke-width="0.9"/>
<path d="M681.5 322.3 L679.8 332.7 L694.3 338.2 L696.2 327.0 Z" fill="rgb(0,180,0)" stroke="rgb(0,180,0)" stroke-width="0.9"/>
<path d="M679.8 332.7 L676.4 342.9 L690.8 349.1 L694.3 338.2 Z" fill="rgb(0,181,0)" stroke="rgb(0,181,0)" stroke-width="0.9"/>
<path d="M676.4 342.9 L671.5 352.8 L685.5 359.7 L690.8 349.1 Z" fill="rgb(0,183,0)" stroke="rgb(0,183,0)" stroke-width="0.9"/>
<path d="M671.5 352.8 L665.1 362.3 L678.6 369.9 L685.5 359.7 Z" fill="rgb(0,184,0)" stroke="rgb(0,184,0)" stroke-width="0.9"/>
<path d="M665.1 362.3 L657.2 371.3 L670.2 379.6 L678.6 369.9 Z" fill="rgb(0,186,0)" stroke="rgb(0,186,0)" stroke-width="0.9"/>
<path d="M657.2 371.3 L647.9 379.9 L660.2 388.7 L670.2 379.6 Z" fill="rgb(0,187,0)" stroke="rgb(0,187,0)" stroke-width="0.9"/>
<path d="M647.9 379.9 L637.3 387.8 L648.8 397.2 L660.2 388.7 Z" fill="rgb(0,189,0)" stroke="rgb(0,189,0)" stroke-width="0.9"/>
<path d="M637.3 387.8 L625.4 395.1 L636.1 405.0 L648.8 397.2 Z" fill="rgb(0,190,0)" stroke="rgb(0,190,0)" stroke-width="0.9"/>
<path d="M625.4 395.1 L612.4 401.7 L622.1 412.1 L636.1 405.0 Z" fill="rgb(0,192,0)" stroke="rgb(0,192,0)" stroke-width="0.9"/>
<path d="M612.4 401.7 L598.3 407.5 L607.0 418.3 L622.1 412.1 Z" fill="rgb(0,193,0)" stroke="rgb(0,193,0)" stroke-width="0.9"/>
<path d="M598.3 407.5 L583.2 412.6 L590.8 423.8 L607.0 418.3 Z" fill="rgb(0,194,0)" stroke="rgb(0,194,0)" stroke-width="0.9"/>
<path d="M583.2 412.6 L567.3 416.8 L573.8 428.3 L590.8 423.8 Z" fill="rgb(0,196,0)" stroke="rgb(0,196,0)" stroke-width="0.9"/>
<path d="M567.3 416.8 L550.6 420.1 L555.9 431.9 L573.8 428.3 Z" fill="rgb(0,197,0)" stroke="rgb(0,197,0)" stroke-width="0.9"/>
<path d="M550.6 420.1 L533.4 422.6 L537.5 434.5 L555.9 431.9 Z" fill="rgb(0,198,0)" stroke="rgb(0,198,0)" stroke-width="0.9"/>
<path d="M533.4 422.6 L515.7 424.1 L518.5 436.1 L537.5 434.5 Z" fill="rgb(0,200,0)" stroke="rgb(0,200,0)" stroke-width="0.9"/>
<path d="M515.7 424.1 L497.7 424.7 L499.2 436.8 L518.5 436.1 Z" fill="rgb(0,201,0)" stroke="rgb(0,201,0)" stroke-width="0.9"/>
<path d="M497.7 424.7 L479.5 424.4 L479.7 436.5 L499.2 436.8 Z" fill="rgb(0,202,0)" stroke="rgb(0,202,0)" stroke-width="0.9"/>
<path d="M479.5 424.4 L461.2 423.2 L460.1 435.1 L479.7 436.5 Z" fill="rgb(0,204,0)" stroke="rgb(0,204,0)" stroke-width="0.9"/>
<path d="M461.2 423.2 L443.0 421.0 L440.6 432.8 L460.1 435.1 Z" fill="rgb(0,205,0)" stroke="rgb(0,205,0)" stroke-width="0.9"/>
<path d="M443.0 421.0 L425.0 418.0 L421.3 429.6 L440.6 432.8 Z" fill="rgb(0,205,0)" stroke="rgb(0,205,0)" stroke-width="0.9"/>
<path d="M425.0 418.0 L407.4 414.1 L402.5 425.4 L421.3 429.6 Z" fill="rgb(0,206,0)" stroke="rgb(0,206,0)" stroke-width="0.9"/>
<path d="M407.4 414.1 L390.3 409.3 L384.1 420.3 L402.5 425.4 Z" fill="rgb(0,206,0)" stroke="rgb(0,206,0)" stroke-width="0.9"/>
<path d="M390.3 409.3 L373.8 403.7 L366.4 414.3 L384.1 420.3 Z" fill="rgb(0,207,0)" stroke="rgb(0,207,0)" stroke-width="0.9"/>
<path d="M373.8 403.7 L358.1 397.4 L349.6 407.5 L366.4 414.3 Z" fill="rgb(0,207,0)" stroke="rgb(0,207,0)" stroke-width="0.9"/>
<path d="M358.1 397.4 L343.2 390.3 L333.6 399.9 L349.6 407.5 Z" fill="rgb(0,208,0)" stroke="rgb(0,208,0)" stroke-width="0.9"/>
<path d="M343.2 390.3 L329.3 382.6 L318.8 391.6 L333.6 399.9 Z" fill="rgb(0,208,0)" stroke="rgb(0,208,0)" stroke-width="0.9"/>
<path d="M329.3 382.6 L316.5 374.2 L305.0 382.7 L318.8 391.6 Z" fill="rgb(0,209,0)" stroke="rgb(0,209,0)" stroke-width="0.9"/>
<path d="M316.5 374.2 L304.9 365.4 L292.6 373.2 L305.0 382.7 Z" fill="rgb(0,209,0)" stroke="rgb(0,209,0)" stroke-width="0.9"/>
<path d="M304.9 365.4 L294.6 356.0 L281.5 363.1 L292.6 373.2 Z" fill="rgb(0,209,0)" stroke="rgb(0,209,0)" stroke-width="0.9"/>
<path d="M294.6 356.0 L285.6 346.2 L271.9 352.7 L281.5 363.1 Z" fill="rgb(0,209,0)" stroke="rgb(0,209,0)" stroke-width="0.9"/>
<path d="M285.6 346.2 L278.0 336.2 L263.8 341.9 L271.9 352.7 Z" fill="rgb(0,208,0)" stroke="rgb(0,208,0)" stroke-width="0.9"/>
<path d="M278.0 336.2 L272.0 325.8 L257.3 330.8 L263.8 341.9 Z" fill="rgb(0,208,0)" stroke="rgb(0,208,0)" stroke-width="0.9"/>
<path d="M272.0 325.8 L267.4 315.3 L252.4 319.5 L257.3 330.8 Z" fill="rgb(0,208,0)" stroke="rgb(0,208,0)" stroke-width="0.9"/>
<path d="M267.4 315.3 L264.4 304.7 L249.2 308.1 L252.4 319.5 Z" fill="rgb(0,207,0)" stroke="rgb(0,207,0)" stroke-width="0.9"/>
<path d="M264.4 304.7 L263.0 294.1 L247.6 296.7 L249.2 308.1 Z" fill="rgb(0,207,0)" stroke="rgb(0,207,0)" stroke-width="0.9"/>
<path d="M263.0 294.1 L263.2 283.5 L247.8 285.4 L247.6 296.7 Z" fill="rgb(0,207,0)" stroke="rgb(0,207,0)" stroke-width="0.9"/>
<path d="M263.2 283.5 L264.9 273.1 L249.7 274.3 L247.8 285.4 Z" fill="rgb(0,206,0)" stroke="rgb(0,206,0)" stroke-width="0.9"/>
<path d="M264.9 273.1 L268.3 262.9 L253.3 263.4 L249.7 274.3 Z" fill="rgb(0,205,0)" stroke="rgb(0,205,0)" stroke-width="0.9"/>
<path d="M268.3 262.9 L273.2 253.0 L258.6 252.8 L253.3 263.4 Z" fill="rgb(0,203,0)" stroke="rgb(0,203,0)" stroke-width="0.9"/>
<path d="M273.2 253.0 L279.6 243.5 L265.4 242.6 L258.6 252.8 Z" fill="rgb(0,202,0)" stroke="rgb(0,202,0)" stroke-width="0.9"/>
<path d="M279.6 243.5 L287.5 234.5 L273.9 232.9 L265.4 242.6 Z" fill="rgb(0,201,0)" stroke="rgb(0,201,0)" stroke-width="0.9"/>
<path d="M287.5 234.5 L296.8 226.0 L283.8 223.8 L273.9 232.9 Z" fill="rgb(0,199,0)" stroke="rgb(0,199,0)" stroke-width="0.9"/>
<path d="M296.8 226.0 L307.4 218.0 L295.2 215.2 L283.8 223.8 Z" fill="rgb(0,198,0)" stroke="rgb(0,198,0)" stroke-width="0.9"/>
<path d="M307.4 218.0 L319.3 210.7 L308.0 207.4 L295.2 215.2 Z" fill="rgb(0,197,0)" stroke="rgb(0,197,0)" stroke-width="0.9"/>
<path d="M319.3 210.7 L332.3 204.1 L322.0 200.4 L308.0 207.4 Z" fill="rgb(0,195,0)" stroke="rgb(0,195,0)" stroke-width="0.9"/>
<path d="M332.3 204.1 L346.4 198.3 L337.1 194.1 L322.0 200.4 Z" fill="rgb(0,193,0)" stroke="rgb(0,193,0)" stroke-width="0.9"/>
<path d="M346.4 198.3 L361.5 193.2 L353.2 188.7 L337.1 194.1 Z" fill="rgb(0,190,0)" stroke="rgb(0,190,0)" stroke-width="0.9"/>
<path d="M361.5 193.2 L377.4 189.0 L370.3 184.2 L353.2 188.7 Z" fill="rgb(0,187,0)" stroke="rgb(0,187,0)" stroke-width="0.9"/>
<path d="M377.4 189.0 L394.0 185.7 L388.1 180.6 L370.3 184.2 Z" fill="rgb(0,184,0)" stroke="rgb(0,184,0)" stroke-width="0.9"/>
<path d="M394.0 185.7 L411.3 183.2 L406.6 178.0 L388.1 180.6 Z" fill="rgb(0,181,0)" stroke="rgb(0,181,0)" stroke-width="0.9"/>
<path d="M411.3 183.2 L429.0 181.7 L425.6 176.3 L406.6 178.0 Z" fill="rgb(0,178,0)" stroke="rgb(0,178,0)" stroke-width="0.9"/>
<path d="M429.0 181.7 L447.0 181.1 L444.9 175.7 L425.6 176.3 Z" fill="rgb(0,176,0)" stroke="rgb(0,176,0)" stroke-width="0.9"/>
<path d="M447.0 181.1 L465.2 181.4 L464.4 176.0 L444.9 175.7 Z" fill="rgb(0,173,0)" stroke="rgb(0,173,0)" stroke-width="0.9"/>
<path d="M465.2 181.4 L483.5 182.6 L484.0 177.3 L464.4 176.0 Z" fill="rgb(0,170,0)" stroke="rgb(0,170,0)" stroke-width="0.9"/>
<path d="M483.5 182.6 L501.7 184.8 L503.5 179.6 L484.0 177.3 Z" fill="rgb(0,168,0)" stroke="rgb(0,168,0)" stroke-width="0.9"/>
<path d="M501.7 184.8 L519.7 187.8 L522.7 182.9 L503.5 179.6 Z" fill="rgb(0,168,0)" stroke="rgb(0,168,0)" stroke-width="0.9"/>
<path d="M519.7 187.8 L537.3 191.7 L541.6 187.1 L522.7 182.9 Z" fill="rgb(0,169,0)" stroke="rgb(0,169,0)" stroke-width="0.9"/>
<path d="M537.3 191.7 L554.4 196.5 L560.0 192.2 L541.6 187.1 Z" fill="rgb(0,169,0)" stroke="rgb(0,169,0)" stroke-width="0.9"/>
<path d="M554.4 196.5 L570.9 202.1 L577.6 198.2 L560.0 192.2 Z" fill="rgb(0,169,0)" stroke="rgb(0,169,0)" stroke-width="0.9"/>
<path d="M570.9 202.1 L586.6 208.4 L594.5 205.0 L577.6 198.2 Z" fill="rgb(0,169,0)" stroke="rgb(0,169,0)" stroke-width="0.9"/>
<path d="M586.6 208.4 L601.5 215.5 L610.4 212.6 L594.5 205.0 Z" fill="rgb(0,169,0)" stroke="rgb(0,169,0)" stroke-width="0.9"/>
<path d="M601.5 215.5 L615.3 223.2 L625.3 220.8 L610.4 212.6 Z" fill="rgb(0,169,0)" stroke="rgb(0,169,0)" stroke-width="0.9"/>
<path d="M615.3 223.2 L628.1 231.6 L639.0 229.8 L625.3 220.8 Z" fill="rgb(0,169,0)" stroke="rgb(0,169,0)" stroke-width="0.9"/>
<path d="M628.1 231.6 L639.8 240.5 L651.5 239.3 L639.0 229.8 Z" fill="rgb(0,170,0)" stroke="rgb(0,170,0)" stroke-width="0.9"/>
<path d="M639.8 240.5 L650.1 249.8 L662.5 249.3 L651.5 239.3 Z" fill="rgb(0,171,0)" stroke="rgb(0,171,0)" stroke-width="0.9"/>
<path d="M650.1 249.8 L659.1 259.6 L672.2 259.8 L662.5 249.3 Z" fill="rgb(0,172,0)" stroke="rgb(0,172,0)" stroke-width="0.9"/>
<path d="M659.1 259.6 L666.6 269.7 L680.3 270.6 L672.2 259.8 Z" fill="rgb(0,173,0)" stroke="rgb(0,173,0)" stroke-width="0.9"/>
<path d="M666.6 269.7 L672.7 280.0 L686.8 281.7 L680.3 270.6 Z" fill="rgb(0,174,0)" stroke="rgb(0,174,0)" stroke-width="0.9"/>
<path d="M672.7 280.0 L677.3 290.5 L691.7 292.9 L686.8 281.7 Z" fill="rgb(0,175,0)" stroke="rgb(0,175,0)" stroke-width="0.9"/>
<path d="M677.3 290.5 L680.3 301.1 L694.9 304.3 L691.7 292.9 Z" fill="rgb(0,176,0)" stroke="rgb(0,176,0)" stroke-width="0.9"/>
<path d="M680.3 301.1 L681.7 311.8 L696.4 315.7 L694.9 304.3 Z" fill="rgb(0,177,0)" stroke="rgb(0,177,0)" stroke-width="0.9"/>
<path d="M681.7 311.8 L681.5 322.3 L696.2 327.0 L696.4 315.7 Z" fill="rgb(0,178,0)" stroke="rgb(0,178,0)" stroke-width="0.9"/>
<path d="M696.2 327.0 L694.3 338.2 L708.9 343.6 L710.9 331.7 Z" fill="rgb(0,171,0)" stroke="rgb(0,171,0)" stroke-width="0.9"/>
<path d="M694.3 338.2 L690.8 349.1 L705.1 355.3 L708.9 343.6 Z" fill="rgb(0,173,0)" stroke="rgb(0,173,0)" stroke-width="0.9"/>
<path d="M690.8 349.1 L685.5 359.7 L699.5 366.6 L705.1 355.3 Z" fill="rgb(0,175,0)" stroke="rgb(0,175,0)" stroke-width="0.9"/>
<path d="M685.5 359.7 L678.6 369.9 L692.2 377.4 L699.5 366.6 Z" fill="rgb(0,177,0)" stroke="rgb(0,177,0)" stroke-width="0.9"/>
<path d="M678.6 369.9 L670.2 379.6 L683.1 387.8 L692.2 377.4 Z" fill="rgb(0,179,0)" stroke="rgb(0,179,0)" stroke-width="0.9"/>
<path d="M670.2 379.6 L660.2 388.7 L672.5 397.5 L683.1 387.8 Z" fill="rgb(0,181,0)" stroke="rgb(0,181,0)" stroke-width="0.9"/>
<path d="M660.2 388.7 L648.8 397.2 L660.4 406.6 L672.5 397.5 Z" fill="rgb(0,183,0)" stroke="rgb(0,183,0)" stroke-width="0.9"/>
<path d="M648.8 397.2 L636.1 405.0 L646.8 415.0 L660.4 406.6 Z" fill="rgb(0,185,0)" stroke="rgb(0,185,0)" stroke-width="0.9"/>
<path d="M636.1 405.0 L622.1 412.1 L631.9 422.5 L646.8 415.0 Z" fill="rgb(0,187,0)" stroke="rgb(0,187,0)" stroke-width="0.9"/>
<path d="M622.1 412.1 L607.0 418.3 L615.7 429.2 L631.9 422.5 Z" fill="rgb(0,188,0)" stroke="rgb(0,188,0)" stroke-width="0.9"/>
<path d="M607.0 418.3 L590.8 423.8 L598.5 434.9 L615.7 429.2 Z" fill="rgb(0,190,0)" stroke="rgb(0,190,0)" stroke-width="0.9"/>
<path d="M590.8 423.8 L573.8 428.3 L580.3 439.8 L598.5 434.9 Z" fill="rgb(0,192,0)" stroke="rgb(0,192,0)" stroke-width="0.9"/>
<path d="M573.8 428.3 L555.9 431.9 L561.3 443.6 L580.3 439.8 Z" fill="rgb(0,194,0)" stroke="rgb(0,194,0)" stroke-width="0.9"/>
<path d="M555.9 431.9 L537.5 434.5 L541.6 446.4 L561.3 443.6 Z" fill="rgb(0,196,0)" stroke="rgb(0,196,0)" stroke-width="0.9"/>
<path d="M537.5 434.5 L518.5 436.1 L521.3 448.2 L541.6 446.4 Z" fill="rgb(0,198,0)" stroke="rgb(0,198,0)" stroke-width="0.9"/>
<path d="M518.5 436.1 L499.2 436.8 L500.7 448.9 L521.3 448.2 Z" fill="rgb(0,200,0)" stroke="rgb(0,200,0)" stroke-width="0.9"/>
<path d="M499.2 436.8 L479.7 436.5 L479.9 448.5 L500.7 448.9 Z" fill="rgb(0,201,0)" stroke="rgb(0,201,0)" stroke-width="0.9"/>
<path d="M479.7 436.5 L460.1 435.1 L459.0 447.1 L479.9 448.5 Z" fill="rgb(0,203,0)" stroke="rgb(0,203,0)" stroke-width="0.9"/>
<path d="M460.1 435.1 L440.6 432.8 L438.2 444.6 L459.0 447.1 Z" fill="rgb(0,205,0)" stroke="rgb(0,205,0)" stroke-width="0.9"/>
<path d="M440.6 432.8 L421.3 429.6 L417.6 441.2 L438.2 444.6 Z" fill="rgb(0,205,0)" stroke="rgb(0,205,0)" stroke-width="0.9"/>
<path d="M421.3 429.6 L402.5 425.4 L397.5 436.7 L417.6 441.2 Z" fill="rgb(0,206,0)" stroke="rgb(0,206,0)" stroke-width="0.9"/>
<path d="M402.5 425.4 L384.1 420.3 L377.9 431.2 L397.5 436.7 Z" fill="rgb(0,207,0)" stroke="rgb(0,207,0)" stroke-width="0.9"/>
<path d="M384.1 420.3 L366.4 414.3 L359.1 424.8 L377.9 431.2 Z" fill="rgb(0,207,0)" stroke="rgb(0,207,0)" stroke-width="0.9"/>
<path d="M366.4 414.3 L349.6 407.5 L341.1 417.6 L359.1 424.8 Z" fill="rgb(0,208,0)" stroke="rgb(0,208,0)" stroke-width="0.9"/>
<path d="M349.6 407.5 L333.6 399.9 L324.1 409.5 L341.1 417.6 Z" fill="rgb(0,209,0)" stroke="rgb(0,209,0)" stroke-width="0.9"/>
<path d="M333.6 399.9 L318.8 391.6 L308.2 400.6 L324.1 409.5 Z" fill="rgb(0,210,0)" stroke="rgb(0,210,0)" stroke-width="0.9"/>
<path d="M318.8 391.6 L305.0 382.7 L293.5 391.1 L308.2 400.6 Z" fill="rgb(0,210,0)" stroke="rgb(0,210,0)" stroke-width="0.9"/>
<path d="M305.0 382.7 L292.6 373.2 L280.3 381.0 L293.5 391.1 Z" fill="rgb(0,211,0)" stroke="rgb(0,211,0)" stroke-width="0.9"/>
<path d="M292.6 373.2 L281.5 363.1 L268.4 370.3 L280.3 381.0 Z" fill="rgb(0,210,0)" stroke="rgb(0,210,0)" stroke-width="0.9"/>
<path d="M281.5 363.1 L271.9 352.7 L258.2 359.1 L268.4 370.3 Z" fill="rgb(0,210,0)" stroke="rgb(0,210,0)" stroke-width="0.9"/>
<path d="M271.9 352.7 L263.8 341.9 L249.5 347.6 L258.2 359.1 Z" fill="rgb(0,210,0)" stroke="rgb(0,210,0)" stroke-width="0.9"/>
<path d="M263.8 341.9 L257.3 330.8 L242.6 335.7 L249.5 347.6 Z" fill="rgb(0,209,0)" stroke="rgb(0,209,0)" stroke-width="0.9"/>
<path d="M257.3 330.8 L252.4 319.5 L237.3 323.7 L242.6 335.7 Z" fill="rgb(0,209,0)" stroke="rgb(0,209,0)" stroke-width="0.9"/>
<path d="M252.4 319.5 L249.2 308.1 L233.9 311.6 L237.3 323.7 Z" fill="rgb(0,209,0)" stroke="rgb(0,209,0)" stroke-width="0.9"/>
<path d="M249.2 308.1 L247.6 296.7 L232.3 299.4 L233.9 311.6 Z" fill="rgb(0,208,0)" stroke="rgb(0,208,0)" stroke-width="0.9"/>
<path d="M247.6 296.7 L247.8 285.4 L232.5 287.4 L232.3 299.4 Z" fill="rgb(0,208,0)" stroke="rgb(0,208,0)" stroke-width="0.9"/>
<path d="M247.8 285.4 L249.7 274.3 L234.5 275.4 L232.5 287.4 Z" fill="rgb(0,207,0)" stroke="rgb(0,207,0)" stroke-width="0.9"/>
<path d="M249.7 274.3 L253.3 263.4 L238.4 263.8 L234.5 275.4 Z" fill="rgb(0,206,0)" stroke="rgb(0,206,0)" stroke-width="0.9"/>
<path d="M253.3 263.4 L258.6 252.8 L244.0 252.5 L238.4 263.8 Z" fill="rgb(0,204,0)" stroke="rgb(0,204,0)" stroke-width="0.9"/>
<path d="M258.6 252.8 L265.4 242.6 L251.3 241.6 L244.0 252.5 Z" fill="rgb(0,202,0)" stroke="rgb(0,202,0)" stroke-width="0.9"/>
<path d="M265.4 242.6 L273.9 232.9 L260.3 231.3 L251.3 241.6 Z" fill="rgb(0,201,0)" stroke="rgb(0,201,0)" stroke-width="0.9"/>
<path d="M273.9 232.9 L283.8 223.8 L270.9 221.5 L260.3 231.3 Z" fill="rgb(0,199,0)" stroke="rgb(0,199,0)" stroke-width="0.9"/>
<path d="M283.8 223.8 L295.2 215.2 L283.1 212.5 L270.9 221.5 Z" fill="rgb(0,198,0)" stroke="rgb(0,198,0)" stroke-width="0.9"/>
<path d="M295.2 215.2 L308.0 207.4 L296.7 204.1 L283.1 212.5 Z" fill="rgb(0,196,0)" stroke="rgb(0,196,0)" stroke-width="0.9"/>
<path d="M308.0 207.4 L322.0 200.4 L311.6 196.6 L296.7 204.1 Z" fill="rgb(0,194,0)" stroke="rgb(0,194,0)" stroke-width="0.9"/>
<path d="M322.0 200.4 L337.1 194.1 L327.7 189.9 L311.6 196.6 Z" fill="rgb(0,192,0)" stroke="rgb(0,192,0)" stroke-width="0.9"/>
<path d="M337.1 194.1 L353.2 188.7 L345.0 184.1 L327.7 189.9 Z" fill="rgb(0,189,0)" stroke="rgb(0,189,0)" stroke-width="0.9"/>
<path d="M353.2 188.7 L370.3 184.2 L363.2 179.3 L345.0 184.1 Z" fill="rgb(0,186,0)" stroke="rgb(0,186,0)" stroke-width="0.9"/>
<path d="M370.3 184.2 L388.1 180.6 L382.2 175.5 L363.2 179.3 Z" fill="rgb(0,183,0)" stroke="rgb(0,183,0)" stroke-width="0.9"/>
<path d="M388.1 180.6 L406.6 178.0 L401.9 172.7 L382.2 175.5 Z" fill="rgb(0,180,0)" stroke="rgb(0,180,0)" stroke-width="0.9"/>
<path d="M406.6 178.0 L425.6 176.3 L422.1 170.9 L401.9 172.7 Z" fill="rgb(0,177,0)" stroke="rgb(0,177,0)" stroke-width="0.9"/>
<path d="M425.6 176.3 L444.9 175.7 L442.7 170.2 L422.1 170.9 Z" fill="rgb(0,173,0)" stroke="rgb(0,173,0)" stroke-width="0.9"/>
<path d="M444.9 175.7 L464.4 176.0 L463.6 170.6 L442.7 170.2 Z" fill="rgb(0,170,0)" stroke="rgb(0,170,0)" stroke-width="0.9"/>
<path d="M464.4 176.0 L484.0 177.3 L484.5 172.0 L463.6 170.6 Z" fill="rgb(0,167,0)" stroke="rgb(0,167,0)" stroke-width="0.9"/>
<path d="M484.0 177.3 L503.5 179.6 L505.3 174.4 L484.5 172.0 Z" fill="rgb(0,166,0)" stroke="rgb(0,166,0)" stroke-width="0.9"/>
<path d="M503.5 179.6 L522.7 182.9 L525.8 177.9 L505.3 174.4 Z" fill="rgb(0,165,0)" stroke="rgb(0,165,0)" stroke-width="0.9"/>
<path d="M522.7 182.9 L541.6 187.1 L546.0 182.4 L525.8 177.9 Z" fill="rgb(0,165,0)" stroke="rgb(0,165,0)" stroke-width="0.9"/>
<path d="M541.6 187.1 L560.0 192.2 L565.5 187.9 L546.0 182.4 Z" fill="rgb(0,165,0)" stroke="rgb(0,165,0)" stroke-width="0.9"/>
<path d="M560.0 192.2 L577.6 198.2 L584.4 194.3 L565.5 187.9 Z" fill="rgb(0,165,0)" stroke="rgb(0,165,0)" stroke-width="0.9"/>
<path d="M577.6 198.2 L594.5 205.0 L602.4 201.5 L584.4 194.3 Z" fill="rgb(0,165,0)" stroke="rgb(0,165,0)" stroke-width="0.9"/>
<path d="M594.5 205.0 L610.4 212.6 L619.4 209.6 L602.4 201.5 Z" fill="rgb(0,164,0)" stroke="rgb(0,164,0)" stroke-width="0.9"/>
<path d="M610.4 212.6 L625.3 220.8 L635.3 218.4 L619.4 209.6 Z" fill="rgb(0,164,0)" stroke="rgb(0,164,0)" stroke-width="0.9"/>
<path d="M625.3 220.8 L639.0 229.8 L649.9 228.0 L635.3 218.4 Z" fill="rgb(0,164,0)" stroke="rgb(0,164,0)" stroke-width="0.9"/>
<path d="M639.0 229.8 L651.5 239.3 L663.2 238.1 L649.9 228.0 Z" fill="rgb(0,164,0)" stroke="rgb(0,164,0)" stroke-width="0.9"/>
<path d="M651.5 239.3 L662.5 249.3 L675.0 248.8 L663.2 238.1 Z" fill="rgb(0,165,0)" stroke="rgb(0,165,0)" stroke-width="0.9"/>
<path d="M662.5 249.3 L672.2 259.8 L685.3 260.0 L675.0 248.8 Z" fill="rgb(0,166,0)" stroke="rgb(0,166,0)" stroke-width="0.9"/>
<path d="M672.2 259.8 L680.3 270.6 L693.9 271.5 L685.3 260.0 Z" fill="rgb(0,166,0)" stroke="rgb(0,166,0)" stroke-width="0.9"/>
<path d="M680.3 270.6 L686.8 281.7 L700.9 283.4 L693.9 271.5 Z" fill="rgb(0,167,0)" stroke="rgb(0,167,0)" stroke-width="0.9"/>
<path d="M686.8 281.7 L691.7 292.9 L706.1 295.4 L700.9 283.4 Z" fill="rgb(0,168,0)" stroke="rgb(0,168,0)" stroke-width="0.9"/>
<path d="M691.7 292.9 L694.9 304.3 L709.5 307.5 L706.1 295.4 Z" fill="rgb(0,169,0)" stroke="rgb(0,169,0)" stroke-width="0.9"/>
<path d="M694.9 304.3 L696.4 315.7 L711.1 319.7 L709.5 307.5 Z" fill="rgb(0,169,0)" stroke="rgb(0,169,0)" stroke-width="0.9"/>
<path d="M696.4 315.7 L696.2 327.0 L710.9 331.7 L711.1 319.7 Z" fill="rgb(0,170,0)" stroke="rgb(0,170,0)" stroke-width="0.9"/>
<path d="M710.9 331.7 L708.9 343.6 L723.5 349.1 L725.7 336.4 Z" fill="rgb(0,163,0)" stroke="rgb(0,163,0)" stroke-width="0.9"/>
<path d="M708.9 343.6 L705.1 355.3 L719.4 361.5 L723.5 349.1 Z" fill="rgb(0,165,0)" stroke="rgb(0,165,0)" stroke-width="0.9"/>
<path d="M705.1 355.3 L699.5 366.6 L713.5 373.5 L719.4 361.5 Z" fill="rgb(0,167,0)" stroke="rgb(0,167,0)" stroke-width="0.9"/>
<path d="M699.5 366.6 L692.2 377.4 L705.7 385.0 L713.5 373.5 Z" fill="rgb(0,170,0)" stroke="rgb(0,170,0)" stroke-width="0.9"/>
<path d="M692.2 377.4 L683.1 387.8 L696.1 396.0 L705.7 385.0 Z" fill="rgb(0,172,0)" stroke="rgb(0,172,0)" stroke-width="0.9"/>
<path d="M683.1 387.8 L672.5 397.5 L684.8 406.4 L696.1 396.0 Z" fill="rgb(0,174,0)" stroke="rgb(0,174,0)" stroke-width="0.9"/>
<path d="M672.5 397.5 L660.4 406.6 L671.9 416.0 L684.8 406.4 Z" fill="rgb(0,177,0)" stroke="rgb(0,177,0)" stroke-width="0.9"/>
<path d="M660.4 406.6 L646.8 415.0 L657.5 424.9 L671.9 416.0 Z" fill="rgb(0,179,0)" stroke="rgb(0,179,0)" stroke-width="0.9"/>
<path d="M646.8 415.0 L631.9 422.5 L641.6 432.9 L657.5 424.9 Z" fill="rgb(0,181,0)" stroke="rgb(0,181,0)" stroke-width="0.9"/>
<path d="M631.9 422.5 L615.7 429.2 L624.5 440.0 L641.6 432.9 Z" fill="rgb(0,184,0)" stroke="rgb(0,184,0)" stroke-width="0.9"/>
<path d="M615.7 429.2 L598.5 434.9 L606.1 446.1 L624.5 440.0 Z" fill="rgb(0,186,0)" stroke="rgb(0,186,0)" stroke-width="0.9"/>
<path d="M598.5 434.9 L580.3 439.8 L586.8 451.3 L606.1 446.1 Z" fill="rgb(0,188,0)" stroke="rgb(0,188,0)" stroke-width="0.9"/>
<path d="M580.3 439.8 L561.3 443.6 L566.6 455.3 L586.8 451.3 Z" fill="rgb(0,191,0)" stroke="rgb(0,191,0)" stroke-width="0.9"/>
<path d="M561.3 443.6 L541.6 446.4 L545.6 458.3 L566.6 455.3 Z" fill="rgb(0,193,0)" stroke="rgb(0,193,0)" stroke-width="0.9"/>
<path d="M541.6 446.4 L521.3 448.2 L524.1 460.2 L545.6 458.3 Z" fill="rgb(0,196,0)" stroke="rgb(0,196,0)" stroke-width="0.9"/>
<path d="M521.3 448.2 L500.7 448.9 L502.2 460.9 L524.1 460.2 Z" fill="rgb(0,198,0)" stroke="rgb(0,198,0)" stroke-width="0.9"/>
<path d="M500.7 448.9 L479.9 448.5 L480.1 460.6 L502.2 460.9 Z" fill="rgb(0,200,0)" stroke="rgb(0,200,0)" stroke-width="0.9"/>
<path d="M479.9 448.5 L459.0 447.1 L457.9 459.1 L480.1 460.6 Z" fill="rgb(0,203,0)" stroke="rgb(0,203,0)" stroke-width="0.9"/>
<path d="M459.0 447.1 L438.2 444.6 L435.7 456.4 L457.9 459.1 Z" fill="rgb(0,204,0)" stroke="rgb(0,204,0)" stroke-width="0.9"/>
<path d="M438.2 444.6 L417.6 441.2 L413.9 452.7 L435.7 456.4 Z" fill="rgb(0,205,0)" stroke="rgb(0,205,0)" stroke-width="0.9"/>
<path d="M417.6 441.2 L397.5 436.7 L392.5 448.0 L413.9 452.7 Z" fill="rgb(0,206,0)" stroke="rgb(0,206,0)" stroke-width="0.9"/>
<path d="M397.5 436.7 L377.9 431.2 L371.7 442.2 L392.5 448.0 Z" fill="rgb(0,207,0)" stroke="rgb(0,207,0)" stroke-width="0.9"/>
<path d="M377.9 431.2 L359.1 424.8 L351.7 435.4 L371.7 442.2 Z" fill="rgb(0,208,0)" stroke="rgb(0,208,0)" stroke-width="0.9"/>
<path d="M359.1 424.8 L341.1 417.6 L332.6 427.7 L351.7 435.4 Z" fill="rgb(0,209,0)" stroke="rgb(0,209,0)" stroke-width="0.9"/>
<path d="M341.1 417.6 L324.1 409.5 L314.5 419.1 L332.6 427.7 Z" fill="rgb(0,210,0)" stroke="rgb(0,210,0)" stroke-width="0.9"/>
<path d="M324.1 409.5 L308.2 400.6 L297.6 409.7 L314.5 419.1 Z" fill="rgb(0,211,0)" stroke="rgb(0,211,0)" stroke-width="0.9"/>
<path d="M308.2 400.6 L293.5 391.1 L282.1 399.6 L297.6 409.7 Z" fill="rgb(0,212,0)" stroke="rgb(0,212,0)" stroke-width="0.9"/>
<path d="M293.5 391.1 L280.3 381.0 L267.9 388.8 L282.1 399.6 Z" fill="rgb(0,212,0)" stroke="rgb(0,212,0)" stroke-width="0.9"/>
<path d="M280.3 381.0 L268.4 370.3 L255.4 377.4 L267.9 388.8 Z" fill="rgb(0,212,0)" stroke="rgb(0,212,0)" stroke-width="0.9"/>
<path d="M268.4 370.3 L258.2 359.1 L244.5 365.5 L255.4 377.4 Z" fill="rgb(0,211,0)" stroke="rgb(0,211,0)" stroke-width="0.9"/>
<path d="M258.2 359.1 L249.5 347.6 L235.3 353.3 L244.5 365.5 Z" fill="rgb(0,211,0)" stroke="rgb(0,211,0)" stroke-width="0.9"/>
<path d="M249.5 347.6 L242.6 335.7 L227.9 340.7 L235.3 353.3 Z" fill="rgb(0,211,0)" stroke="rgb(0,211,0)" stroke-width="0.9"/>
<path d="M242.6 335.7 L237.3 323.7 L222.3 327.9 L227.9 340.7 Z" fill="rgb(0,210,0)" stroke="rgb(0,210,0)" stroke-width="0.9"/>
<path d="M237.3 323.7 L233.9 311.6 L218.7 315.0 L222.3 327.9 Z" fill="rgb(0,210,0)" stroke="rgb(0,210,0)" stroke-width="0.9"/>
<path d="M233.9 311.6 L232.3 299.4 L217.0 302.1 L218.7 315.0 Z" fill="rgb(0,210,0)" stroke="rgb(0,210,0)" stroke-width="0.9"/>
<path d="M232.3 299.4 L232.5 287.4 L217.2 289.3 L217.0 302.1 Z" fill="rgb(0,209,0)" stroke="rgb(0,209,0)" stroke-width="0.9"/>
<path d="M232.5 287.4 L234.5 275.4 L219.3 276.6 L217.2 289.3 Z" fill="rgb(0,208,0)" stroke="rgb(0,208,0)" stroke-width="0.9"/>
<path d="M234.5 275.4 L238.4 263.8 L223.4 264.2 L219.3 276.6 Z" fill="rgb(0,206,0)" stroke="rgb(0,206,0)" stroke-width="0.9"/>
<path d="M238.4 263.8 L244.0 252.5 L229.3 252.2 L223.4 264.2 Z" fill="rgb(0,204,0)" stroke="rgb(0,204,0)" stroke-width="0.9"/>
<path d="M244.0 252.5 L251.3 241.6 L237.1 240.7 L229.3 252.2 Z" fill="rgb(0,203,0)" stroke="rgb(0,203,0)" stroke-width="0.9"/>
<path d="M251.3 241.6 L260.3 231.3 L246.7 229.7 L237.1 240.7 Z" fill="rgb(0,201,0)" stroke="rgb(0,201,0)" stroke-width="0.9"/>
<path d="M260.3 231.3 L270.9 221.5 L258.0 219.3 L246.7 229.7 Z" fill="rgb(0,199,0)" stroke="rgb(0,199,0)" stroke-width="0.9"/>
<path d="M270.9 221.5 L283.1 212.5 L270.9 209.7 L258.0 219.3 Z" fill="rgb(0,197,0)" stroke="rgb(0,197,0)" stroke-width="0.9"/>
<path d="M283.1 212.5 L296.7 204.1 L285.4 200.8 L270.9 209.7 Z" fill="rgb(0,195,0)" stroke="rgb(0,195,0)" stroke-width="0.9"/>
<path d="M296.7 204.1 L311.6 196.6 L301.2 192.8 L285.4 200.8 Z" fill="rgb(0,193,0)" stroke="rgb(0,193,0)" stroke-width="0.9"/>
<path d="M311.6 196.6 L327.7 189.9 L318.4 185.7 L301.2 192.8 Z" fill="rgb(0,191,0)" stroke="rgb(0,191,0)" stroke-width="0.9"/>
<path d="M327.7 189.9 L345.0 184.1 L336.7 179.6 L318.4 185.7 Z" fill="rgb(0,188,0)" stroke="rgb(0,188,0)" stroke-width="0.9"/>
<path d="M345.0 184.1 L363.2 179.3 L356.0 174.5 L336.7 179.6 Z" fill="rgb(0,184,0)" stroke="rgb(0,184,0)" stroke-width="0.9"/>
<path d="M363.2 179.3 L382.2 175.5 L376.3 170.4 L356.0 174.5 Z" fill="rgb(0,181,0)" stroke="rgb(0,181,0)" stroke-width="0.9"/>
<path d="M382.2 175.5 L401.9 172.7 L397.2 167.4 L376.3 170.4 Z" fill="rgb(0,178,0)" stroke="rgb(0,178,0)" stroke-width="0.9"/>
<path d="M401.9 172.7 L422.1 170.9 L418.7 165.5 L397.2 167.4 Z" fill="rgb(0,175,0)" stroke="rgb(0,175,0)" stroke-width="0.9"/>
<path d="M422.1 170.9 L442.7 170.2 L440.6 164.8 L418.7 165.5 Z" fill="rgb(0,171,0)" stroke="rgb(0,171,0)" stroke-width="0.9"/>
<path d="M442.7 170.2 L463.6 170.6 L462.8 165.2 L440.6 164.8 Z" fill="rgb(0,168,0)" stroke="rgb(0,168,0)" stroke-width="0.9"/>
<path d="M463.6 170.6 L484.5 172.0 L485.0 166.7 L462.8 165.2 Z" fill="rgb(0,165,0)" stroke="rgb(0,165,0)" stroke-width="0.9"/>
<path d="M484.5 172.0 L505.3 174.4 L507.1 169.3 L485.0 166.7 Z" fill="rgb(0,163,0)" stroke="rgb(0,163,0)" stroke-width="0.9"/>
<path d="M505.3 174.4 L525.8 177.9 L528.9 173.0 L507.1 169.3 Z" fill="rgb(0,162,0)" stroke="rgb(0,162,0)" stroke-width="0.9"/>
<path d="M525.8 177.9 L546.0 182.4 L550.3 177.8 L528.9 173.0 Z" fill="rgb(0,162,0)" stroke="rgb(0,162,0)" stroke-width="0.9"/>
<path d="M546.0 182.4 L565.5 187.9 L571.1 183.6 L550.3 177.8 Z" fill="rgb(0,161,0)" stroke="rgb(0,161,0)" stroke-width="0.9"/>
<path d="M565.5 187.9 L584.4 194.3 L591.2 190.3 L571.1 183.6 Z" fill="rgb(0,161,0)" stroke="rgb(0,161,0)" stroke-width="0.9"/>
<path d="M584.4 194.3 L602.4 201.5 L610.3 198.1 L591.2 190.3 Z" fill="rgb(0,160,0)" stroke="rgb(0,160,0)" stroke-width="0.9"/>
<path d="M602.4 201.5 L619.4 209.6 L628.4 206.6 L610.3 198.1 Z" fill="rgb(0,160,0)" stroke="rgb(0,160,0)" stroke-width="0.9"/>
<path d="M619.4 209.6 L635.3 218.4 L645.2 216.0 L628.4 206.6 Z" fill="rgb(0,159,0)" stroke="rgb(0,159,0)" stroke-width="0.9"/>
<path d="M635.3 218.4 L649.9 228.0 L660.8 226.2 L645.2 216.0 Z" fill="rgb(0,158,0)" stroke="rgb(0,158,0)" stroke-width="0.9"/>
<path d="M649.9 228.0 L663.2 238.1 L674.9 237.0 L660.8 226.2 Z" fill="rgb(0,158,0)" stroke="rgb(0,158,0)" stroke-width="0.9"/>
<path d="M663.2 238.1 L675.0 248.8 L687.5 248.3 L674.9 237.0 Z" fill="rgb(0,159,0)" stroke="rgb(0,159,0)" stroke-width="0.9"/>
<path d="M675.0 248.8 L685.3 260.0 L698.4 260.2 L687.5 248.3 Z" fill="rgb(0,159,0)" stroke="rgb(0,159,0)" stroke-width="0.9"/>
<path d="M685.3 260.0 L693.9 271.5 L707.6 272.5 L698.4 260.2 Z" fill="rgb(0,160,0)" stroke="rgb(0,160,0)" stroke-width="0.9"/>
<path d="M693.9 271.5 L700.9 283.4 L715.0 285.0 L707.6 272.5 Z" fill="rgb(0,160,0)" stroke="rgb(0,160,0)" stroke-width="0.9"/>
<path d="M700.9 283.4 L706.1 295.4 L720.5 297.8 L715.0 285.0 Z" fill="rgb(0,160,0)" stroke="rgb(0,160,0)" stroke-width="0.9"/>
<path d="M706.1 295.4 L709.5 307.5 L724.1 310.7 L720.5 297.8 Z" fill="rgb(0,161,0)" stroke="rgb(0,161,0)" stroke-width="0.9"/>
<path d="M709.5 307.5 L711.1 319.7 L725.9 323.6 L724.1 310.7 Z" fill="rgb(0,161,0)" stroke="rgb(0,161,0)" stroke-width="0.9"/>
<path d="M711.1 319.7 L710.9 331.7 L725.7 336.4 L725.9 323.6 Z" fill="rgb(0,161,0)" stroke="rgb(0,161,0)" stroke-width="0.9"/>
<path d="M725.7 336.4 L723.5 349.1 L738.1 354.6 L740.4 341.2 Z" fill="rgb(0,154,0)" stroke="rgb(0,154,0)" stroke-width="0.9"/>
<path d="M723.5 349.1 L719.4 361.5 L733.8 367.7 L738.1 354.6 Z" fill="rgb(0,157,0)" stroke="rgb(0,157,0)" stroke-width="0.9"/>
<path d="M719.4 361.5 L713.5 373.5 L727.5 380.4 L733.8 367.7 Z" fill="rgb(0,160,0)" stroke="rgb(0,160,0)" stroke-width="0.9"/>
<path d="M713.5 373.5 L705.7 385.0 L719.2 392.6 L727.5 380.4 Z" fill="rgb(0,163,0)" stroke="rgb(0,163,0)" stroke-width="0.9"/>
<path d="M705.7 385.0 L696.1 396.0 L709.1 404.3 L719.2 392.6 Z" fill="rgb(0,165,0)" stroke="rgb(0,165,0)" stroke-width="0.9"/>
<path d="M696.1 396.0 L684.8 406.4 L697.1 415.2 L709.1 404.3 Z" fill="rgb(0,168,0)" stroke="rgb(0,168,0)" stroke-width="0.9"/>
<path d="M684.8 406.4 L671.9 416.0 L683.4 425.4 L697.1 415.2 Z" fill="rgb(0,171,0)" stroke="rgb(0,171,0)" stroke-width="0.9"/>
<path d="M671.9 416.0 L657.5 424.9 L668.1 434.8 L683.4 425.4 Z" fill="rgb(0,173,0)" stroke="rgb(0,173,0)" stroke-width="0.9"/>
<path d="M657.5 424.9 L641.6 432.9 L651.3 443.3 L668.1 434.8 Z" fill="rgb(0,176,0)" stroke="rgb(0,176,0)" stroke-width="0.9"/>
<path d="M641.6 432.9 L624.5 440.0 L633.2 450.8 L651.3 443.3 Z" fill="rgb(0,179,0)" stroke="rgb(0,179,0)" stroke-width="0.9"/>
<path d="M624.5 440.0 L606.1 446.1 L613.8 457.3 L633.2 450.8 Z" fill="rgb(0,182,0)" stroke="rgb(0,182,0)" stroke-width="0.9"/>
<path d="M606.1 446.1 L586.8 451.3 L593.3 462.8 L613.8 457.3 Z" fill="rgb(0,185,0)" stroke="rgb(0,185,0)" stroke-width="0.9"/>
<path d="M586.8 451.3 L566.6 455.3 L571.9 467.1 L593.3 462.8 Z" fill="rgb(0,188,0)" stroke="rgb(0,188,0)" stroke-width="0.9"/>
<path d="M566.6 455.3 L545.6 458.3 L549.7 470.2 L571.9 467.1 Z" fill="rgb(0,190,0)" stroke="rgb(0,190,0)" stroke-width="0.9"/>
<path d="M545.6 458.3 L524.1 460.2 L526.9 472.2 L549.7 470.2 Z" fill="rgb(0,193,0)" stroke="rgb(0,193,0)" stroke-width="0.9"/>
<path d="M524.1 460.2 L502.2 460.9 L503.7 473.0 L526.9 472.2 Z" fill="rgb(0,196,0)" stroke="rgb(0,196,0)" stroke-width="0.9"/>
<path d="M502.2 460.9 L480.1 460.6 L480.3 472.6 L503.7 473.0 Z" fill="rgb(0,199,0)" stroke="rgb(0,199,0)" stroke-width="0.9"/>
<path d="M480.1 460.6 L457.9 459.1 L456.7 471.0 L480.3 472.6 Z" fill="rgb(0,202,0)" stroke="rgb(0,202,0)" stroke-width="0.9"/>
<path d="M457.9 459.1 L435.7 456.4 L433.3 468.2 L456.7 471.0 Z" fill="rgb(0,204,0)" stroke="rgb(0,204,0)" stroke-width="0.9"/>
<path d="M435.7 456.4 L413.9 452.7 L410.2 464.3 L433.3 468.2 Z" fill="rgb(0,205,0)" stroke="rgb(0,205,0)" stroke-width="0.9"/>
<path d="M413.9 452.7 L392.5 448.0 L387.5 459.3 L410.2 464.3 Z" fill="rgb(0,206,0)" stroke="rgb(0,206,0)" stroke-width="0.9"/>
<path d="M392.5 448.0 L371.7 442.2 L365.5 453.1 L387.5 459.3 Z" fill="rgb(0,207,0)" stroke="rgb(0,207,0)" stroke-width="0.9"/>
<path d="M371.7 442.2 L351.7 435.4 L344.3 445.9 L365.5 453.1 Z" fill="rgb(0,209,0)" stroke="rgb(0,209,0)" stroke-width="0.9"/>
<path d="M351.7 435.4 L332.6 427.7 L324.0 437.8 L344.3 445.9 Z" fill="rgb(0,210,0)" stroke="rgb(0,210,0)" stroke-width="0.9"/>
<path d="M332.6 427.7 L314.5 419.1 L304.9 428.7 L324.0 437.8 Z" fill="rgb(0,211,0)" stroke="rgb(0,211,0)" stroke-width="0.9"/>
<path d="M314.5 419.1 L297.6 409.7 L287.0 418.7 L304.9 428.7 Z" fill="rgb(0,212,0)" stroke="rgb(0,212,0)" stroke-width="0.9"/>
<path d="M297.6 409.7 L282.1 399.6 L270.6 408.0 L287.0 418.7 Z" fill="rgb(0,213,0)" stroke="rgb(0,213,0)" stroke-width="0.9"/>
<path d="M282.1 399.6 L267.9 388.8 L255.6 396.6 L270.6 408.0 Z" fill="rgb(0,214,0)" stroke="rgb(0,214,0)" stroke-width="0.9"/>
<path d="M267.9 388.8 L255.4 377.4 L242.3 384.5 L255.6 396.6 Z" fill="rgb(0,213,0)" stroke="rgb(0,213,0)" stroke-width="0.9"/>
<path d="M255.4 377.4 L244.5 365.5 L230.7 372.0 L242.3 384.5 Z" fill="rgb(0,213,0)" stroke="rgb(0,213,0)" stroke-width="0.9"/>
<path d="M244.5 365.5 L235.3 353.3 L221.0 359.0 L230.7 372.0 Z" fill="rgb(0,212,0)" stroke="rgb(0,212,0)" stroke-width="0.9"/>
<path d="M235.3 353.3 L227.9 340.7 L213.2 345.7 L221.0 359.0 Z" fill="rgb(0,212,0)" stroke="rgb(0,212,0)" stroke-width="0.9"/>
<path d="M227.9 340.7 L222.3 327.9 L207.3 332.1 L213.2 345.7 Z" fill="rgb(0,212,0)" stroke="rgb(0,212,0)" stroke-width="0.9"/>
<path d="M222.3 327.9 L218.7 315.0 L203.4 318.5 L207.3 332.1 Z" fill="rgb(0,211,0)" stroke="rgb(0,211,0)" stroke-width="0.9"/>
<path d="M218.7 315.0 L217.0 302.1 L201.6 304.8 L203.4 318.5 Z" fill="rgb(0,211,0)" stroke="rgb(0,211,0)" stroke-width="0.9"/>
<path d="M217.0 302.1 L217.2 289.3 L201.8 291.2 L201.6 304.8 Z" fill="rgb(0,210,0)" stroke="rgb(0,210,0)" stroke-width="0.9"/>
<path d="M217.2 289.3 L219.3 276.6 L204.1 277.8 L201.8 291.2 Z" fill="rgb(0,209,0)" stroke="rgb(0,209,0)" stroke-width="0.9"/>
<path d="M219.3 276.6 L223.4 264.2 L208.4 264.7 L204.1 277.8 Z" fill="rgb(0,207,0)" stroke="rgb(0,207,0)" stroke-width="0.9"/>
<path d="M223.4 264.2 L229.3 252.2 L214.7 252.0 L208.4 264.7 Z" fill="rgb(0,205,0)" stroke="rgb(0,205,0)" stroke-width="0.9"/>
<path d="M229.3 252.2 L237.1 240.7 L223.0 239.8 L214.7 252.0 Z" fill="rgb(0,203,0)" stroke="rgb(0,203,0)" stroke-width="0.9"/>
<path d="M237.1 240.7 L246.7 229.7 L233.1 228.1 L223.0 239.8 Z" fill="rgb(0,201,0)" stroke="rgb(0,201,0)" stroke-width="0.9"/>
<path d="M246.7 229.7 L258.0 219.3 L245.1 217.1 L233.1 228.1 Z" fill="rgb(0,199,0)" stroke="rgb(0,199,0)" stroke-width="0.9"/>
<path d="M258.0 219.3 L270.9 209.7 L258.8 206.9 L245.1 217.1 Z" fill="rgb(0,197,0)" stroke="rgb(0,197,0)" stroke-width="0.9"/>
<path d="M270.9 209.7 L285.4 200.8 L274.1 197.5 L258.8 206.9 Z" fill="rgb(0,195,0)" stroke="rgb(0,195,0)" stroke-width="0.9"/>
<path d="M285.4 200.8 L301.2 192.8 L290.9 189.0 L274.1 197.5 Z" fill="rgb(0,193,0)" stroke="rgb(0,193,0)" stroke-width="0.9"/>
<path d="M301.2 192.8 L318.4 185.7 L309.0 181.5 L290.9 189.0 Z" fill="rgb(0,190,0)" stroke="rgb(0,190,0)" stroke-width="0.9"/>
<path d="M318.4 185.7 L336.7 179.6 L328.4 175.0 L309.0 181.5 Z" fill="rgb(0,186,0)" stroke="rgb(0,186,0)" stroke-width="0.9"/>
<path d="M336.7 179.6 L356.0 174.5 L348.9 169.6 L328.4 175.0 Z" fill="rgb(0,183,0)" stroke="rgb(0,183,0)" stroke-width="0.9"/>
<path d="M356.0 174.5 L376.3 170.4 L370.3 165.3 L348.9 169.6 Z" fill="rgb(0,180,0)" stroke="rgb(0,180,0)" stroke-width="0.9"/>
<path d="M376.3 170.4 L397.2 167.4 L392.5 162.2 L370.3 165.3 Z" fill="rgb(0,176,0)" stroke="rgb(0,176,0)" stroke-width="0.9"/>
<path d="M397.2 167.4 L418.7 165.5 L415.3 160.2 L392.5 162.2 Z" fill="rgb(0,173,0)" stroke="rgb(0,173,0)" stroke-width="0.9"/>
<path d="M418.7 165.5 L440.6 164.8 L438.5 159.4 L415.3 160.2 Z" fill="rgb(0,169,0)" stroke="rgb(0,169,0)" stroke-width="0.9"/>
<path d="M440.6 164.8 L462.8 165.2 L461.9 159.8 L438.5 159.4 Z" fill="rgb(0,166,0)" stroke="rgb(0,166,0)" stroke-width="0.9"/>
<path d="M462.8 165.2 L485.0 166.7 L485.5 161.4 L461.9 159.8 Z" fill="rgb(0,162,0)" stroke="rgb(0,162,0)" stroke-width="0.9"/>
<path d="M485.0 166.7 L507.1 169.3 L508.9 164.1 L485.5 161.4 Z" fill="rgb(0,160,0)" stroke="rgb(0,160,0)" stroke-width="0.9"/>
<path d="M507.1 169.3 L528.9 173.0 L532.0 168.0 L508.9 164.1 Z" fill="rgb(0,159,0)" stroke="rgb(0,159,0)" stroke-width="0.9"/>
<path d="M528.9 173.0 L550.3 177.8 L554.7 173.1 L532.0 168.0 Z" fill="rgb(0,158,0)" stroke="rgb(0,158,0)" stroke-width="0.9"/>
<path d="M550.3 177.8 L571.1 183.6 L576.7 179.2 L554.7 173.1 Z" fill="rgb(0,158,0)" stroke="rgb(0,158,0)" stroke-width="0.9"/>
<path d="M571.1 183.6 L591.2 190.3 L597.9 186.4 L576.7 179.2 Z" fill="rgb(0,157,0)" stroke="rgb(0,157,0)" stroke-width="0.9"/>
<path d="M591.2 190.3 L610.3 198.1 L618.2 194.6 L597.9 186.4 Z" fill="rgb(0,156,0)" stroke="rgb(0,156,0)" stroke-width="0.9"/>
<path d="M610.3 198.1 L628.4 206.6 L637.3 203.7 L618.2 194.6 Z" fill="rgb(0,155,0)" stroke="rgb(0,155,0)" stroke-width="0.9"/>
<path d="M628.4 206.6 L645.2 216.0 L655.2 213.6 L637.3 203.7 Z" fill="rgb(0,154,0)" stroke="rgb(0,154,0)" stroke-width="0.9"/>
<path d="M645.2 216.0 L660.8 226.2 L671.7 224.4 L655.2 213.6 Z" fill="rgb(0,153,0)" stroke="rgb(0,153,0)" stroke-width="0.9"/>
<path d="M660.8 226.2 L674.9 237.0 L686.6 235.8 L671.7 224.4 Z" fill="rgb(0,153,0)" stroke="rgb(0,153,0)" stroke-width="0.9"/>
<path d="M674.9 237.0 L687.5 248.3 L699.9 247.8 L686.6 235.8 Z" fill="rgb(0,153,0)" stroke="rgb(0,153,0)" stroke-width="0.9"/>
<path d="M687.5 248.3 L698.4 260.2 L711.5 260.4 L699.9 247.8 Z" fill="rgb(0,153,0)" stroke="rgb(0,153,0)" stroke-width="0.9"/>
<path d="M698.4 260.2 L707.6 272.5 L721.2 273.4 L711.5 260.4 Z" fill="rgb(0,153,0)" stroke="rgb(0,153,0)" stroke-width="0.9"/>
<path d="M707.6 272.5 L715.0 285.0 L729.0 286.7 L721.2 273.4 Z" fill="rgb(0,153,0)" stroke="rgb(0,153,0)" stroke-width="0.9"/>
<path d="M715.0 285.0 L720.5 297.8 L734.9 300.2 L729.0 286.7 Z" fill="rgb(0,153,0)" stroke="rgb(0,153,0)" stroke-width="0.9"/>
<path d="M720.5 297.8 L724.1 310.7 L738.8 313.9 L734.9 300.2 Z" fill="rgb(0,153,0)" stroke="rgb(0,153,0)" stroke-width="0.9"/>
<path d="M724.1 310.7 L725.9 323.6 L740.6 327.6 L738.8 313.9 Z" fill="rgb(0,153,0)" stroke="rgb(0,153,0)" stroke-width="0.9"/>
<path d="M725.9 323.6 L725.7 336.4 L740.4 341.2 L740.6 327.6 Z" fill="rgb(0,153,0)" stroke="rgb(0,153,0)" stroke-width="0.9"/>
<path d="M740.4 341.2 L738.1 354.6 L752.7 360.0 L755.1 345.9 Z" fill="rgb(0,146,0)" stroke="rgb(0,146,0)" stroke-width="0.9"/>
<path d="M738.1 354.6 L733.8 367.7 L748.1 373.9 L752.7 360.0 Z" fill="rgb(0,149,0)" stroke="rgb(0,149,0)" stroke-width="0.9"/>
<path d="M733.8 367.7 L727.5 380.4 L741.5 387.3 L748.1 373.9 Z" fill="rgb(0,152,0)" stroke="rgb(0,152,0)" stroke-width="0.9"/>
<path d="M727.5 380.4 L719.2 392.6 L732.7 400.2 L741.5 387.3 Z" fill="rgb(0,155,0)" stroke="rgb(0,155,0)" stroke-width="0.9"/>
<path d="M719.2 392.6 L709.1 404.3 L722.0 412.5 L732.7 400.2 Z" fill="rgb(0,158,0)" stroke="rgb(0,158,0)" stroke-width="0.9"/>
<path d="M709.1 404.3 L697.1 415.2 L709.4 424.1 L722.0 412.5 Z" fill="rgb(0,162,0)" stroke="rgb(0,162,0)" stroke-width="0.9"/>
<path d="M697.1 415.2 L683.4 425.4 L695.0 434.9 L709.4 424.1 Z" fill="rgb(0,165,0)" stroke="rgb(0,165,0)" stroke-width="0.9"/>
<path d="M683.4 425.4 L668.1 434.8 L678.8 444.8 L695.0 434.9 Z" fill="rgb(0,168,0)" stroke="rgb(0,168,0)" stroke-width="0.9"/>
<path d="M668.1 434.8 L651.3 443.3 L661.1 453.7 L678.8 444.8 Z" fill="rgb(0,171,0)" stroke="rgb(0,171,0)" stroke-width="0.9"/>
<path d="M651.3 443.3 L633.2 450.8 L641.9 461.7 L661.1 453.7 Z" fill="rgb(0,174,0)" stroke="rgb(0,174,0)" stroke-width="0.9"/>
<path d="M633.2 450.8 L613.8 457.3 L621.4 468.5 L641.9 461.7 Z" fill="rgb(0,178,0)" stroke="rgb(0,178,0)" stroke-width="0.9"/>
<path d="M613.8 457.3 L593.3 462.8 L599.8 474.2 L621.4 468.5 Z" fill="rgb(0,181,0)" stroke="rgb(0,181,0)" stroke-width="0.9"/>
<path d="M593.3 462.8 L571.9 467.1 L577.2 478.8 L599.8 474.2 Z" fill="rgb(0,184,0)" stroke="rgb(0,184,0)" stroke-width="0.9"/>
<path d="M571.9 467.1 L549.7 470.2 L553.8 482.1 L577.2 478.8 Z" fill="rgb(0,188,0)" stroke="rgb(0,188,0)" stroke-width="0.9"/>
<path d="M549.7 470.2 L526.9 472.2 L529.7 484.2 L553.8 482.1 Z" fill="rgb(0,191,0)" stroke="rgb(0,191,0)" stroke-width="0.9"/>
<path d="M526.9 472.2 L503.7 473.0 L505.2 485.1 L529.7 484.2 Z" fill="rgb(0,195,0)" stroke="rgb(0,195,0)" stroke-width="0.9"/>
<path d="M503.7 473.0 L480.3 472.6 L480.5 484.6 L505.2 485.1 Z" fill="rgb(0,198,0)" stroke="rgb(0,198,0)" stroke-width="0.9"/>
<path d="M480.3 472.6 L456.7 471.0 L455.6 483.0 L480.5 484.6 Z" fill="rgb(0,201,0)" stroke="rgb(0,201,0)" stroke-width="0.9"/>
<path d="M456.7 471.0 L433.3 468.2 L430.9 480.0 L455.6 483.0 Z" fill="rgb(0,204,0)" stroke="rgb(0,204,0)" stroke-width="0.9"/>
<path d="M433.3 468.2 L410.2 464.3 L406.5 475.9 L430.9 480.0 Z" fill="rgb(0,205,0)" stroke="rgb(0,205,0)" stroke-width="0.9"/>
<path d="M410.2 464.3 L387.5 459.3 L382.6 470.6 L406.5 475.9 Z" fill="rgb(0,207,0)" stroke="rgb(0,207,0)" stroke-width="0.9"/>
<path d="M387.5 459.3 L365.5 453.1 L359.3 464.1 L382.6 470.6 Z" fill="rgb(0,208,0)" stroke="rgb(0,208,0)" stroke-width="0.9"/>
<path d="M365.5 453.1 L344.3 445.9 L336.9 456.5 L359.3 464.1 Z" fill="rgb(0,209,0)" stroke="rgb(0,209,0)" stroke-width="0.9"/>
<path d="M344.3 445.9 L324.0 437.8 L315.5 447.9 L336.9 456.5 Z" fill="rgb(0,211,0)" stroke="rgb(0,211,0)" stroke-width="0.9"/>
<path d="M324.0 437.8 L304.9 428.7 L295.3 438.3 L315.5 447.9 Z" fill="rgb(0,212,0)" stroke="rgb(0,212,0)" stroke-width="0.9"/>
<path d="M304.9 428.7 L287.0 418.7 L276.5 427.8 L295.3 438.3 Z" fill="rgb(0,213,0)" stroke="rgb(0,213,0)" stroke-width="0.9"/>
<path d="M287.0 418.7 L270.6 408.0 L259.1 416.4 L276.5 427.8 Z" fill="rgb(0,215,0)" stroke="rgb(0,215,0)" stroke-width="0.9"/>
<path d="M270.6 408.0 L255.6 396.6 L243.3 404.4 L259.1 416.4 Z" fill="rgb(0,215,0)" stroke="rgb(0,215,0)" stroke-width="0.9"/>
<path d="M255.6 396.6 L242.3 384.5 L229.2 391.7 L243.3 404.4 Z" fill="rgb(0,215,0)" stroke="rgb(0,215,0)" stroke-width="0.9"/>
<path d="M242.3 384.5 L230.7 372.0 L217.0 378.4 L229.2 391.7 Z" fill="rgb(0,214,0)" stroke="rgb(0,214,0)" stroke-width="0.9"/>
<path d="M230.7 372.0 L221.0 359.0 L206.7 364.7 L217.0 378.4 Z" fill="rgb(0,214,0)" stroke="rgb(0,214,0)" stroke-width="0.9"/>
<path d="M221.0 359.0 L213.2 345.7 L198.5 350.6 L206.7 364.7 Z" fill="rgb(0,213,0)" stroke="rgb(0,213,0)" stroke-width="0.9"/>
<path d="M213.2 345.7 L207.3 332.1 L192.3 336.3 L198.5 350.6 Z" fill="rgb(0,213,0)" stroke="rgb(0,213,0)" stroke-width="0.9"/>
<path d="M207.3 332.1 L203.4 318.5 L188.2 321.9 L192.3 336.3 Z" fill="rgb(0,212,0)" stroke="rgb(0,212,0)" stroke-width="0.9"/>
<path d="M203.4 318.5 L201.6 304.8 L186.3 307.5 L188.2 321.9 Z" fill="rgb(0,212,0)" stroke="rgb(0,212,0)" stroke-width="0.9"/>
<path d="M201.6 304.8 L201.8 291.2 L186.5 293.1 L186.3 307.5 Z" fill="rgb(0,212,0)" stroke="rgb(0,212,0)" stroke-width="0.9"/>
<path d="M201.8 291.2 L204.1 277.8 L188.9 279.0 L186.5 293.1 Z" fill="rgb(0,210,0)" stroke="rgb(0,210,0)" stroke-width="0.9"/>
<path d="M204.1 277.8 L208.4 264.7 L193.5 265.1 L188.9 279.0 Z" fill="rgb(0,208,0)" stroke="rgb(0,208,0)" stroke-width="0.9"/>
<path d="M208.4 264.7 L214.7 252.0 L200.1 251.7 L193.5 265.1 Z" fill="rgb(0,206,0)" stroke="rgb(0,206,0)" stroke-width="0.9"/>
<path d="M214.7 252.0 L223.0 239.8 L208.9 238.8 L200.1 251.7 Z" fill="rgb(0,203,0)" stroke="rgb(0,203,0)" stroke-width="0.9"/>
<path d="M223.0 239.8 L233.1 228.1 L219.6 226.5 L208.9 238.8 Z" fill="rgb(0,201,0)" stroke="rgb(0,201,0)" stroke-width="0.9"/>
<path d="M233.1 228.1 L245.1 217.1 L232.2 214.9 L219.6 226.5 Z" fill="rgb(0,199,0)" stroke="rgb(0,199,0)" stroke-width="0.9"/>
<path d="M245.1 217.1 L258.8 206.9 L246.6 204.1 L232.2 214.9 Z" fill="rgb(0,196,0)" stroke="rgb(0,196,0)" stroke-width="0.9"/>
<path d="M258.8 206.9 L274.1 197.5 L262.8 194.2 L246.6 204.1 Z" fill="rgb(0,194,0)" stroke="rgb(0,194,0)" stroke-width="0.9"/>
<path d="M274.1 197.5 L290.9 189.0 L280.5 185.3 L262.8 194.2 Z" fill="rgb(0,192,0)" stroke="rgb(0,192,0)" stroke-width="0.9"/>
<path d="M290.9 189.0 L309.0 181.5 L299.7 177.3 L280.5 185.3 Z" fill="rgb(0,189,0)" stroke="rgb(0,189,0)" stroke-width="0.9"/>
<path d="M309.0 181.5 L328.4 175.0 L320.2 170.5 L299.7 177.3 Z" fill="rgb(0,185,0)" stroke="rgb(0,185,0)" stroke-width="0.9"/>
<path d="M328.4 175.0 L348.9 169.6 L341.8 164.8 L320.2 170.5 Z" fill="rgb(0,182,0)" stroke="rgb(0,182,0)" stroke-width="0.9"/>
<path d="M348.9 169.6 L370.3 165.3 L364.4 160.2 L341.8 164.8 Z" fill="rgb(0,178,0)" stroke="rgb(0,178,0)" stroke-width="0.9"/>
<path d="M370.3 165.3 L392.5 162.2 L387.8 156.9 L364.4 160.2 Z" fill="rgb(0,174,0)" stroke="rgb(0,174,0)" stroke-width="0.9"/>
<path d="M392.5 162.2 L415.3 160.2 L411.9 154.8 L387.8 156.9 Z" fill="rgb(0,171,0)" stroke="rgb(0,171,0)" stroke-width="0.9"/>
<path d="M415.3 160.2 L438.5 159.4 L436.4 153.9 L411.9 154.8 Z" fill="rgb(0,167,0)" stroke="rgb(0,167,0)" stroke-width="0.9"/>
<path d="M438.5 159.4 L461.9 159.8 L461.1 154.4 L436.4 153.9 Z" fill="rgb(0,164,0)" stroke="rgb(0,164,0)" stroke-width="0.9"/>
<path d="M461.9 159.8 L485.5 161.4 L486.0 156.0 L461.1 154.4 Z" fill="rgb(0,160,0)" stroke="rgb(0,160,0)" stroke-width="0.9"/>
<path d="M485.5 161.4 L508.9 164.1 L510.7 159.0 L486.0 156.0 Z" fill="rgb(0,158,0)" stroke="rgb(0,158,0)" stroke-width="0.9"/>
<path d="M508.9 164.1 L532.0 168.0 L535.1 163.1 L510.7 159.0 Z" fill="rgb(0,156,0)" stroke="rgb(0,156,0)" stroke-width="0.9"/>
<path d="M532.0 168.0 L554.7 173.1 L559.0 168.4 L535.1 163.1 Z" fill="rgb(0,155,0)" stroke="rgb(0,155,0)" stroke-width="0.9"/>
<path d="M554.7 173.1 L576.7 179.2 L582.3 174.9 L559.0 168.4 Z" fill="rgb(0,154,0)" stroke="rgb(0,154,0)" stroke-width="0.9"/>
<path d="M576.7 179.2 L597.9 186.4 L604.7 182.5 L582.3 174.9 Z" fill="rgb(0,153,0)" stroke="rgb(0,153,0)" stroke-width="0.9"/>
<path d="M597.9 186.4 L618.2 194.6 L626.1 191.1 L604.7 182.5 Z" fill="rgb(0,151,0)" stroke="rgb(0,151,0)" stroke-width="0.9"/>
<path d="M618.2 194.6 L637.3 203.7 L646.3 200.7 L626.1 191.1 Z" fill="rgb(0,150,0)" stroke="rgb(0,150,0)" stroke-width="0.9"/>
<path d="M637.3 203.7 L655.2 213.6 L665.1 211.2 L646.3 200.7 Z" fill="rgb(0,149,0)" stroke="rgb(0,149,0)" stroke-width="0.9"/>
<path d="M655.2 213.6 L671.7 224.4 L682.5 222.6 L665.1 211.2 Z" fill="rgb(0,147,0)" stroke="rgb(0,147,0)" stroke-width="0.9"/>
<path d="M671.7 224.4 L686.6 235.8 L698.3 234.6 L682.5 222.6 Z" fill="rgb(0,147,0)" stroke="rgb(0,147,0)" stroke-width="0.9"/>
<path d="M686.6 235.8 L699.9 247.8 L712.4 247.3 L698.3 234.6 Z" fill="rgb(0,146,0)" stroke="rgb(0,146,0)" stroke-width="0.9"/>
<path d="M699.9 247.8 L711.5 260.4 L724.6 260.6 L712.4 247.3 Z" fill="rgb(0,146,0)" stroke="rgb(0,146,0)" stroke-width="0.9"/>
<path d="M711.5 260.4 L721.2 273.4 L734.9 274.3 L724.6 260.6 Z" fill="rgb(0,146,0)" stroke="rgb(0,146,0)" stroke-width="0.9"/>
<path d="M721.2 273.4 L729.0 286.7 L743.1 288.4 L734.9 274.3 Z" fill="rgb(0,146,0)" stroke="rgb(0,146,0)" stroke-width="0.9"/>
<path d="M729.0 286.7 L734.9 300.2 L749.3 302.7 L743.1 288.4 Z" fill="rgb(0,145,0)" stroke="rgb(0,145,0)" stroke-width="0.9"/>
<path d="M734.9 300.2 L738.8 313.9 L753.4 317.1 L749.3 302.7 Z" fill="rgb(0,145,0)" stroke="rgb(0,145,0)" stroke-width="0.9"/>
<path d="M738.8 313.9 L740.6 327.6 L755.3 331.5 L753.4 317.1 Z" fill="rgb(0,145,0)" stroke="rgb(0,145,0)" stroke-width="0.9"/>
<path d="M740.6 327.6 L740.4 341.2 L755.1 345.9 L755.3 331.5 Z" fill="rgb(0,144,0)" stroke="rgb(0,144,0)" stroke-width="0.9"/>
<clipPath id="cin"><path d="M630.2 314.2 L629.5 318.9 L628.4 323.6 L626.9 328.2 L625.0 332.7 L622.6 337.1 L619.9 341.5 L616.7 345.7 L613.1 349.8 L609.2 353.7 L604.9 357.5 L600.2 361.2 L595.1 364.6 L589.8 367.9 L584.1 371.1 L578.1 374.0 L571.8 376.7 L565.3 379.2 L558.4 381.5 L551.4 383.5 L544.1 385.3 L536.7 386.9 L529.0 388.3 L521.3 389.4 L513.3 390.2 L505.3 390.9 L497.2 391.2 L489.0 391.3 L480.8 391.2 L472.5 390.8 L464.2 390.2 L456.0 389.3 L447.8 388.1 L439.7 386.8 L431.7 385.1 L423.8 383.3 L416.0 381.2 L408.4 378.9 L400.9 376.4 L393.6 373.7 L386.6 370.7 L379.8 367.6 L373.3 364.3 L367.0 360.8 L361.0 357.1 L355.3 353.3 L350.0 349.3 L344.9 345.2 L340.3 341.0 L336.0 336.7 L332.0 332.2 L328.5 327.7 L325.3 323.1 L322.6 318.4 L320.2 313.7 L318.3 308.9 L316.8 304.1 L315.7 299.3 L315.1 294.5 L314.9 289.7 L315.1 285.0 L315.8 280.3 L316.9 275.6 L318.4 271.0 L320.3 266.5 L322.7 262.0 L325.4 257.7 L328.6 253.5 L332.2 249.4 L336.1 245.4 L340.4 241.6 L345.1 238.0 L350.1 234.5 L355.5 231.2 L361.2 228.1 L367.2 225.2 L373.5 222.5 L380.0 220.0 L386.9 217.7 L393.9 215.7 L401.2 213.8 L408.6 212.2 L416.3 210.9 L424.0 209.8 L432.0 208.9 L440.0 208.3 L448.1 208.0 L456.3 207.8 L464.5 208.0 L472.8 208.4 L481.0 209.0 L489.3 209.9 L497.5 211.0 L505.6 212.4 L513.6 214.0 L521.5 215.9 L529.3 218.0 L536.9 220.3 L544.4 222.8 L551.6 225.5 L558.7 228.5 L565.5 231.6 L572.0 234.9 L578.3 238.4 L584.3 242.1 L590.0 245.9 L595.3 249.8 L600.4 253.9 L605.0 258.2 L609.3 262.5 L613.3 267.0 L616.8 271.5 L620.0 276.1 L622.7 280.8 L625.1 285.5 L627.0 290.3 L628.5 295.0 L629.5 299.8 L630.2 304.7 L630.4 309.4 Z"/></clipPath>
<g clip-path="url(#cin)">
<path d="M630.2 314.2 L629.5 318.9 L628.4 323.6 L626.9 328.2 L625.0 332.7 L622.6 337.1 L619.9 341.5 L616.7 345.7 L613.1 349.8 L609.2 353.7 L604.9 357.5 L600.2 361.2 L595.1 364.6 L589.8 367.9 L584.1 371.1 L578.1 374.0 L571.8 376.7 L565.3 379.2 L558.4 381.5 L551.4 383.5 L544.1 385.3 L536.7 386.9 L529.0 388.3 L521.3 389.4 L513.3 390.2 L505.3 390.9 L497.2 391.2 L489.0 391.3 L480.8 391.2 L472.5 390.8 L464.2 390.2 L456.0 389.3 L447.8 388.1 L439.7 386.8 L431.7 385.1 L423.8 383.3 L416.0 381.2 L408.4 378.9 L400.9 376.4 L393.6 373.7 L386.6 370.7 L379.8 367.6 L373.3 364.3 L367.0 360.8 L361.0 357.1 L355.3 353.3 L350.0 349.3 L344.9 345.2 L340.3 341.0 L336.0 336.7 L332.0 332.2 L328.5 327.7 L325.3 323.1 L322.6 318.4 L320.2 313.7 L318.3 308.9 L316.8 304.1 L315.7 299.3 L315.1 294.5 L314.9 289.7 L315.1 285.0 L315.8 280.3 L316.9 275.6 L318.4 271.0 L320.3 266.5 L322.7 262.0 L325.4 257.7 L328.6 253.5 L332.2 249.4 L336.1 245.4 L340.4 241.6 L345.1 238.0 L350.1 234.5 L355.5 231.2 L361.2 228.1 L367.2 225.2 L373.5 222.5 L380.0 220.0 L386.9 217.7 L393.9 215.7 L401.2 213.8 L408.6 212.2 L416.3 210.9 L424.0 209.8 L432.0 208.9 L440.0 208.3 L448.1 208.0 L456.3 207.8 L464.5 208.0 L472.8 208.4 L481.0 209.0 L489.3 209.9 L497.5 211.0 L505.6 212.4 L513.6 214.0 L521.5 215.9 L529.3 218.0 L536.9 220.3 L544.4 222.8 L551.6 225.5 L558.7 228.5 L565.5 231.6 L572.0 234.9 L578.3 238.4 L584.3 242.1 L590.0 245.9 L595.3 249.8 L600.4 253.9 L605.0 258.2 L609.3 262.5 L613.3 267.0 L616.8 271.5 L620.0 276.1 L622.7 280.8 L625.1 285.5 L627.0 290.3 L628.5 295.0 L629.5 299.8 L630.2 304.7 L630.4 309.4 Z M625.4 366.0 L624.7 370.7 L623.6 375.4 L622.1 380.0 L620.2 384.5 L617.8 388.9 L615.1 393.3 L611.9 397.5 L608.3 401.6 L604.4 405.5 L600.1 409.3 L595.4 412.9 L590.3 416.4 L585.0 419.7 L579.3 422.8 L573.3 425.7 L567.0 428.5 L560.4 431.0 L553.6 433.2 L546.6 435.3 L539.3 437.1 L531.9 438.7 L524.2 440.1 L516.5 441.2 L508.5 442.0 L500.5 442.6 L492.4 443.0 L484.2 443.1 L476.0 443.0 L467.7 442.6 L459.4 441.9 L451.2 441.1 L443.0 439.9 L434.9 438.5 L426.9 436.9 L419.0 435.1 L411.2 433.0 L403.5 430.7 L396.1 428.2 L388.8 425.4 L381.8 422.5 L375.0 419.4 L368.5 416.1 L362.2 412.6 L356.2 408.9 L350.5 405.1 L345.2 401.1 L340.1 397.0 L335.5 392.8 L331.2 388.4 L327.2 384.0 L323.7 379.5 L320.5 374.9 L317.8 370.2 L315.4 365.5 L313.5 360.7 L312.0 355.9 L310.9 351.1 L310.3 346.3 L310.1 341.5 L310.3 336.8 L311.0 332.0 L312.1 327.4 L313.6 322.8 L315.5 318.2 L317.9 313.8 L320.6 309.5 L323.8 305.3 L327.4 301.2 L331.3 297.2 L335.6 293.4 L340.3 289.8 L345.3 286.3 L350.7 283.0 L356.4 279.9 L362.4 277.0 L368.7 274.3 L375.2 271.8 L382.1 269.5 L389.1 267.4 L396.4 265.6 L403.8 264.0 L411.4 262.7 L419.2 261.6 L427.2 260.7 L435.2 260.1 L443.3 259.7 L451.5 259.6 L459.7 259.8 L468.0 260.1 L476.2 260.8 L484.5 261.7 L492.7 262.8 L500.8 264.2 L508.8 265.8 L516.7 267.7 L524.5 269.7 L532.1 272.0 L539.6 274.6 L546.8 277.3 L553.9 280.2 L560.7 283.4 L567.2 286.7 L573.5 290.2 L579.5 293.8 L585.2 297.6 L590.5 301.6 L595.6 305.7 L600.2 309.9 L604.5 314.3 L608.5 318.7 L612.0 323.3 L615.2 327.9 L617.9 332.5 L620.3 337.3 L622.2 342.0 L623.7 346.8 L624.7 351.6 L625.4 356.4 L625.6 361.2 Z" fill="rgb(0,140,0)" fill-rule="evenodd"/>
<path d="M316.1 300.9 L315.0 292.9 L310.2 344.7 L311.3 352.7 Z" fill="rgb(0,62,0)" stroke="rgb(0,62,0)" stroke-width="0.9"/>
<path d="M315.0 292.9 L315.1 285.0 L310.3 336.8 L310.2 344.7 Z" fill="rgb(0,62,0)" stroke="rgb(0,62,0)" stroke-width="0.9"/>
<path d="M315.1 285.0 L316.5 277.1 L311.7 328.9 L310.3 336.8 Z" fill="rgb(0,64,0)" stroke="rgb(0,64,0)" stroke-width="0.9"/>
<path d="M316.5 277.1 L319.0 269.5 L314.2 321.2 L311.7 328.9 Z" fill="rgb(0,70,0)" stroke="rgb(0,70,0)" stroke-width="0.9"/>
<path d="M319.0 269.5 L322.7 262.0 L317.9 313.8 L314.2 321.2 Z" fill="rgb(0,74,0)" stroke="rgb(0,74,0)" stroke-width="0.9"/>
<path d="M322.7 262.0 L327.5 254.9 L322.7 306.7 L317.9 313.8 Z" fill="rgb(0,80,0)" stroke="rgb(0,80,0)" stroke-width="0.9"/>
<path d="M327.5 254.9 L333.4 248.1 L328.6 299.8 L322.7 306.7 Z" fill="rgb(0,84,0)" stroke="rgb(0,84,0)" stroke-width="0.9"/>
<path d="M333.4 248.1 L340.4 241.6 L335.6 293.4 L328.6 299.8 Z" fill="rgb(0,89,0)" stroke="rgb(0,89,0)" stroke-width="0.9"/>
<path d="M340.4 241.6 L348.4 235.7 L343.6 287.4 L335.6 293.4 Z" fill="rgb(0,93,0)" stroke="rgb(0,93,0)" stroke-width="0.9"/>
<path d="M348.4 235.7 L357.4 230.2 L352.6 281.9 L343.6 287.4 Z" fill="rgb(0,97,0)" stroke="rgb(0,97,0)" stroke-width="0.9"/>
<path d="M357.4 230.2 L367.2 225.2 L362.4 277.0 L352.6 281.9 Z" fill="rgb(0,102,0)" stroke="rgb(0,102,0)" stroke-width="0.9"/>
<path d="M367.2 225.2 L377.8 220.8 L373.0 272.6 L362.4 277.0 Z" fill="rgb(0,106,0)" stroke="rgb(0,106,0)" stroke-width="0.9"/>
<path d="M377.8 220.8 L389.2 217.0 L384.4 268.8 L373.0 272.6 Z" fill="rgb(0,111,0)" stroke="rgb(0,111,0)" stroke-width="0.9"/>
<path d="M389.2 217.0 L401.2 213.8 L396.4 265.6 L384.4 268.8 Z" fill="rgb(0,116,0)" stroke="rgb(0,116,0)" stroke-width="0.9"/>
<path d="M401.2 213.8 L413.7 211.3 L408.9 263.1 L396.4 265.6 Z" fill="rgb(0,121,0)" stroke="rgb(0,121,0)" stroke-width="0.9"/>
<path d="M413.7 211.3 L426.7 209.5 L421.9 261.3 L408.9 263.1 Z" fill="rgb(0,126,0)" stroke="rgb(0,126,0)" stroke-width="0.9"/>
<path d="M426.7 209.5 L440.0 208.3 L435.2 260.1 L421.9 261.3 Z" fill="rgb(0,130,0)" stroke="rgb(0,130,0)" stroke-width="0.9"/>
<path d="M440.0 208.3 L453.6 207.8 L448.8 259.6 L435.2 260.1 Z" fill="rgb(0,135,0)" stroke="rgb(0,135,0)" stroke-width="0.9"/>
<path d="M453.6 207.8 L467.3 208.1 L462.5 259.9 L448.8 259.6 Z" fill="rgb(0,140,0)" stroke="rgb(0,140,0)" stroke-width="0.9"/>
<path d="M467.3 208.1 L481.0 209.0 L476.2 260.8 L462.5 259.9 Z" fill="rgb(0,145,0)" stroke="rgb(0,145,0)" stroke-width="0.9"/>
<path d="M481.0 209.0 L494.7 210.6 L489.9 262.4 L476.2 260.8 Z" fill="rgb(0,149,0)" stroke="rgb(0,149,0)" stroke-width="0.9"/>
<path d="M494.7 210.6 L508.3 212.9 L503.5 264.7 L489.9 262.4 Z" fill="rgb(0,153,0)" stroke="rgb(0,153,0)" stroke-width="0.9"/>
<path d="M508.3 212.9 L521.5 215.9 L516.7 267.7 L503.5 264.7 Z" fill="rgb(0,156,0)" stroke="rgb(0,156,0)" stroke-width="0.9"/>
<path d="M521.5 215.9 L534.4 219.5 L529.6 271.2 L516.7 267.7 Z" fill="rgb(0,160,0)" stroke="rgb(0,160,0)" stroke-width="0.9"/>
<path d="M534.4 219.5 L546.8 223.7 L542.0 275.4 L529.6 271.2 Z" fill="rgb(0,164,0)" stroke="rgb(0,164,0)" stroke-width="0.9"/>
<path d="M546.8 223.7 L558.7 228.5 L553.9 280.2 L542.0 275.4 Z" fill="rgb(0,167,0)" stroke="rgb(0,167,0)" stroke-width="0.9"/>
<path d="M558.7 228.5 L569.9 233.8 L565.1 285.5 L553.9 280.2 Z" fill="rgb(0,170,0)" stroke="rgb(0,170,0)" stroke-width="0.9"/>
<path d="M569.9 233.8 L580.3 239.6 L575.5 291.4 L565.1 285.5 Z" fill="rgb(0,173,0)" stroke="rgb(0,173,0)" stroke-width="0.9"/>
<path d="M580.3 239.6 L590.0 245.9 L585.2 297.6 L575.5 291.4 Z" fill="rgb(0,176,0)" stroke="rgb(0,176,0)" stroke-width="0.9"/>
<path d="M590.0 245.9 L598.7 252.6 L593.9 304.3 L585.2 297.6 Z" fill="rgb(0,179,0)" stroke="rgb(0,179,0)" stroke-width="0.9"/>
<path d="M598.7 252.6 L606.5 259.6 L601.7 311.4 L593.9 304.3 Z" fill="rgb(0,181,0)" stroke="rgb(0,181,0)" stroke-width="0.9"/>
<path d="M606.5 259.6 L613.3 267.0 L608.5 318.7 L601.7 311.4 Z" fill="rgb(0,183,0)" stroke="rgb(0,183,0)" stroke-width="0.9"/>
<path d="M613.3 267.0 L619.0 274.6 L614.2 326.3 L608.5 318.7 Z" fill="rgb(0,185,0)" stroke="rgb(0,185,0)" stroke-width="0.9"/>
<path d="M619.0 274.6 L623.5 282.3 L618.7 334.1 L614.2 326.3 Z" fill="rgb(0,187,0)" stroke="rgb(0,187,0)" stroke-width="0.9"/>
<path d="M623.5 282.3 L627.0 290.3 L622.2 342.0 L618.7 334.1 Z" fill="rgb(0,188,0)" stroke="rgb(0,188,0)" stroke-width="0.9"/>
<path d="M627.0 290.3 L629.2 298.2 L624.4 350.0 L622.2 342.0 Z" fill="rgb(0,186,0)" stroke="rgb(0,186,0)" stroke-width="0.9"/>
<path d="M629.2 298.2 L630.3 306.2 L625.5 358.0 L624.4 350.0 Z" fill="rgb(0,186,0)" stroke="rgb(0,186,0)" stroke-width="0.9"/>
<path d="M630.3 306.2 L630.2 314.2 L625.4 366.0 L625.5 358.0 Z" fill="rgb(0,184,0)" stroke="rgb(0,184,0)" stroke-width="0.9"/>
<path d="M630.2 314.2 L628.8 322.0 L624.0 373.8 L625.4 366.0 Z" fill="rgb(0,184,0)" stroke="rgb(0,184,0)" stroke-width="0.9"/>
<path d="M628.8 322.0 L626.3 329.7 L621.5 381.5 L624.0 373.8 Z" fill="rgb(0,184,0)" stroke="rgb(0,184,0)" stroke-width="0.9"/>
<path d="M311.3 352.7 L310.5 347.9 L310.1 343.1 L310.2 338.3 L310.7 333.6 L311.7 328.9 L313.0 324.3 L314.8 319.7 L317.0 315.3 L319.7 310.9 L322.7 306.7 L326.1 302.5 L329.9 298.5 L334.1 294.7 L338.7 291.0 L343.6 287.4 L348.9 284.1 L354.5 280.9 L360.4 277.9 L366.6 275.2 L373.0 272.6 L379.8 270.2 L386.7 268.1 L393.9 266.2 L401.3 264.5 L408.9 263.1 L416.6 261.9 L424.5 261.0 L432.5 260.3 L440.6 259.8 L448.8 259.6 L457.0 259.7 L465.2 260.0 L473.5 260.5 L481.7 261.4 L489.9 262.4 L498.1 263.7 L506.1 265.2 L514.1 267.0 L521.9 269.0 L529.6 271.2 L537.1 273.7 L544.5 276.4 L551.6 279.2 L558.4 282.3 L565.1 285.5 L571.4 289.0 L577.5 292.6 L583.3 296.4 L588.8 300.3 L593.9 304.3 L598.7 308.5 L603.1 312.8 L607.2 317.2 L610.9 321.7 L614.2 326.3 L617.0 331.0 L619.5 335.7 L621.6 340.4 L623.2 345.2 L624.4 350.0 L625.2 354.8 L625.6 359.6 L625.5 364.4 L625.0 369.1 L624.0 373.8 L622.7 378.4 L620.9 383.0" fill="none" stroke="#043c04" stroke-width="1.1"/>
</g>
<clipPath id="cp0"><path d="M465.5 483.8 L465.1 479.7 L464.6 475.6 L464.1 471.5 L463.7 467.4 L463.2 463.3 L462.7 459.3 L462.2 455.2 L461.8 451.1 L461.3 447.0 L460.8 442.9 L460.4 438.8 L459.9 434.8 L459.7 432.2 L459.9 429.6 L460.3 427.0 L461.0 424.5 L461.9 422.1 L463.1 419.7 L464.6 417.5 L466.4 415.3 L468.3 413.3 L470.5 411.6 L472.8 410.5 L475.4 409.4 L478.1 408.5 L480.9 407.8 L483.9 407.2 L486.9 406.8 L490.1 406.6 L493.3 406.5 L496.5 406.5 L499.8 406.8 L503.0 407.2 L506.2 407.7 L509.3 408.4 L512.3 409.3 L515.2 410.3 L518.0 411.4 L520.6 413.2 L523.0 415.1 L525.2 417.2 L527.2 419.5 L528.9 421.8 L530.4 424.3 L531.7 426.8 L532.7 429.3 L533.4 431.9 L533.8 434.5 L534.3 438.6 L534.7 442.7 L535.2 446.8 L535.7 450.8 L536.2 454.9 L536.6 459.0 L537.1 463.1 L537.6 467.2 L538.0 471.3 L538.5 475.4 L539.0 479.4 L539.4 483.5 L530.4 484.2 L521.2 484.7 L512.0 485.0 L502.8 485.1 L493.5 485.0 L484.2 484.8 L474.9 484.4 Z"/></clipPath>
<linearGradient id="pw0" gradientUnits="userSpaceOnUse" x1="459.7" y1="0" x2="539.4" y2="0"><stop offset="0" stop-color="rgb(0,80,0)"/><stop offset="1" stop-color="rgb(0,165,0)"/></linearGradient>
<path d="M465.5 483.8 L465.1 479.7 L464.6 475.6 L464.1 471.5 L463.7 467.4 L463.2 463.3 L462.7 459.3 L462.2 455.2 L461.8 451.1 L461.3 447.0 L460.8 442.9 L460.4 438.8 L459.9 434.8 L459.7 432.2 L459.9 429.6 L460.3 427.0 L461.0 424.5 L461.9 422.1 L463.1 419.7 L464.6 417.5 L466.4 415.3 L468.3 413.3 L470.5 411.6 L472.8 410.5 L475.4 409.4 L478.1 408.5 L480.9 407.8 L483.9 407.2 L486.9 406.8 L490.1 406.6 L493.3 406.5 L496.5 406.5 L499.8 406.8 L503.0 407.2 L506.2 407.7 L509.3 408.4 L512.3 409.3 L515.2 410.3 L518.0 411.4 L520.6 413.2 L523.0 415.1 L525.2 417.2 L527.2 419.5 L528.9 421.8 L530.4 424.3 L531.7 426.8 L532.7 429.3 L533.4 431.9 L533.8 434.5 L534.3 438.6 L534.7 442.7 L535.2 446.8 L535.7 450.8 L536.2 454.9 L536.6 459.0 L537.1 463.1 L537.6 467.2 L538.0 471.3 L538.5 475.4 L539.0 479.4 L539.4 483.5 L530.4 484.2 L521.2 484.7 L512.0 485.0 L502.8 485.1 L493.5 485.0 L484.2 484.8 L474.9 484.4 Z" fill="url(#pw0)"/>
<g clip-path="url(#cp0)">
<path d="M465.5 483.8 L465.0 480.8 L464.4 477.8 L463.8 474.9 L463.2 471.9 L462.7 468.9 L462.1 466.0 L461.5 463.0 L460.9 460.0 L460.4 457.0 L459.8 454.1 L459.2 451.1 L458.7 448.1 L458.4 446.3 L458.5 444.4 L458.8 442.5 L459.5 440.7 L460.3 439.0 L461.5 437.3 L462.9 435.7 L464.6 434.2 L466.5 432.8 L468.7 431.5 L471.0 430.4 L473.5 429.3 L476.2 428.5 L479.0 427.7 L482.0 427.2 L485.1 426.7 L488.2 426.5 L491.4 426.4 L494.7 426.5 L497.9 426.7 L501.1 427.1 L504.3 427.6 L507.4 428.4 L510.5 429.2 L513.4 430.2 L516.2 431.4 L518.8 432.6 L521.2 434.0 L523.5 435.5 L525.5 437.1 L527.3 438.8 L528.9 440.5 L530.2 442.3 L531.3 444.1 L532.1 446.0 L532.6 447.9 L533.1 450.9 L533.7 453.8 L534.3 456.8 L534.9 459.8 L535.4 462.7 L536.0 465.7 L536.6 468.7 L537.2 471.6 L537.7 474.6 L538.3 477.6 L538.9 480.6 L539.4 483.5 L530.4 484.2 L521.2 484.7 L512.0 485.0 L502.8 485.1 L493.5 485.0 L484.2 484.8 L474.9 484.4 Z" fill="rgb(0,204,0)"/>
<linearGradient id="ph0" gradientUnits="userSpaceOnUse" x1="470.2" y1="0" x2="521.0" y2="0"><stop offset="0" stop-color="rgb(0,60,0)"/><stop offset="1" stop-color="rgb(0,175,0)"/></linearGradient>
<path d="M520.9 450.4 L520.6 451.9 L520.1 453.3 L519.2 454.7 L518.2 456.1 L516.8 457.3 L515.3 458.5 L513.5 459.5 L511.5 460.4 L509.4 461.2 L507.1 461.8 L504.7 462.3 L502.1 462.6 L499.5 462.7 L496.9 462.7 L494.3 462.6 L491.6 462.2 L489.0 461.8 L486.5 461.1 L484.1 460.3 L481.8 459.4 L479.7 458.4 L477.7 457.3 L475.9 456.0 L474.4 454.7 L473.0 453.3 L472.0 451.8 L471.1 450.3 L470.6 448.7 L470.3 447.2 L470.3 445.7 L470.6 444.2 L471.2 442.7 L472.0 441.3 L473.1 440.0 L474.4 438.7 L475.9 437.6 L477.7 436.5 L479.7 435.6 L481.8 434.9 L484.1 434.2 L486.6 433.8 L489.1 433.5 L491.7 433.3 L494.3 433.3 L497.0 433.5 L499.6 433.8 L502.2 434.3 L504.7 434.9 L507.1 435.7 L509.4 436.6 L511.6 437.6 L513.5 438.8 L515.3 440.0 L516.9 441.4 L518.2 442.8 L519.3 444.2 L520.1 445.8 L520.6 447.3 L520.9 448.8 Z" fill="url(#ph0)" stroke="#033a03" stroke-width="1.1"/>
</g>
<path d="M465.5 483.8 L465.1 479.7 L464.6 475.6 L464.1 471.5 L463.7 467.4 L463.2 463.3 L462.7 459.3 L462.2 455.2 L461.8 451.1 L461.3 447.0 L460.8 442.9 L460.4 438.8 L459.9 434.8 L459.7 432.2 L459.9 429.6 L460.3 427.0 L461.0 424.5 L461.9 422.1 L463.1 419.7 L464.6 417.5 L466.4 415.3 L468.3 413.3 L470.5 411.6 L472.8 410.5 L475.4 409.4 L478.1 408.5 L480.9 407.8 L483.9 407.2 L486.9 406.8 L490.1 406.6 L493.3 406.5 L496.5 406.5 L499.8 406.8 L503.0 407.2 L506.2 407.7 L509.3 408.4 L512.3 409.3 L515.2 410.3 L518.0 411.4 L520.6 413.2 L523.0 415.1 L525.2 417.2 L527.2 419.5 L528.9 421.8 L530.4 424.3 L531.7 426.8 L532.7 429.3 L533.4 431.9 L533.8 434.5 L534.3 438.6 L534.7 442.7 L535.2 446.8 L535.7 450.8 L536.2 454.9 L536.6 459.0 L537.1 463.1 L537.6 467.2 L538.0 471.3 L538.5 475.4 L539.0 479.4 L539.4 483.5" fill="none" stroke="#033a03" stroke-width="1.2" stroke-linejoin="round"/>
<clipPath id="cp1"><path d="M198.5 350.6 L203.2 348.6 L208.0 346.5 L212.7 344.5 L217.5 342.4 L222.2 340.4 L227.0 338.3 L231.7 336.3 L236.5 334.2 L241.2 332.2 L246.0 330.1 L250.7 328.1 L255.5 326.0 L258.6 324.8 L261.7 323.7 L265.0 322.8 L268.3 322.1 L271.6 321.5 L274.9 321.1 L278.1 320.9 L281.4 320.9 L284.5 321.1 L287.5 321.6 L290.4 322.7 L293.1 323.9 L295.7 325.2 L298.0 326.6 L300.2 328.1 L302.2 329.7 L303.9 331.4 L305.4 333.2 L306.6 335.0 L307.5 336.9 L308.2 338.8 L308.6 340.6 L308.7 342.5 L308.5 344.4 L308.1 346.2 L307.3 348.0 L306.3 350.2 L305.0 352.4 L303.4 354.6 L301.5 356.7 L299.5 358.7 L297.2 360.7 L294.7 362.5 L292.1 364.2 L289.2 365.7 L286.3 367.1 L281.5 369.1 L276.8 371.2 L272.0 373.2 L267.3 375.3 L262.5 377.3 L257.8 379.4 L253.0 381.4 L248.3 383.5 L243.5 385.5 L238.8 387.6 L234.0 389.6 L229.3 391.7 L224.4 386.8 L219.9 381.8 L215.6 376.7 L211.6 371.6 L207.9 366.4 L204.5 361.2 L201.3 355.9 Z"/></clipPath>
<linearGradient id="pw1" gradientUnits="userSpaceOnUse" x1="198.5" y1="0" x2="308.7" y2="0"><stop offset="0" stop-color="rgb(0,100,0)"/><stop offset="1" stop-color="rgb(0,188,0)"/></linearGradient>
<path d="M198.5 350.6 L203.2 348.6 L208.0 346.5 L212.7 344.5 L217.5 342.4 L222.2 340.4 L227.0 338.3 L231.7 336.3 L236.5 334.2 L241.2 332.2 L246.0 330.1 L250.7 328.1 L255.5 326.0 L258.6 324.8 L261.7 323.7 L265.0 322.8 L268.3 322.1 L271.6 321.5 L274.9 321.1 L278.1 320.9 L281.4 320.9 L284.5 321.1 L287.5 321.6 L290.4 322.7 L293.1 323.9 L295.7 325.2 L298.0 326.6 L300.2 328.1 L302.2 329.7 L303.9 331.4 L305.4 333.2 L306.6 335.0 L307.5 336.9 L308.2 338.8 L308.6 340.6 L308.7 342.5 L308.5 344.4 L308.1 346.2 L307.3 348.0 L306.3 350.2 L305.0 352.4 L303.4 354.6 L301.5 356.7 L299.5 358.7 L297.2 360.7 L294.7 362.5 L292.1 364.2 L289.2 365.7 L286.3 367.1 L281.5 369.1 L276.8 371.2 L272.0 373.2 L267.3 375.3 L262.5 377.3 L257.8 379.4 L253.0 381.4 L248.3 383.5 L243.5 385.5 L238.8 387.6 L234.0 389.6 L229.3 391.7 L224.4 386.8 L219.9 381.8 L215.6 376.7 L211.6 371.6 L207.9 366.4 L204.5 361.2 L201.3 355.9 Z" fill="url(#pw1)"/>
<g clip-path="url(#cp1)">
<path d="M198.5 350.6 L203.1 349.7 L207.8 348.7 L212.4 347.8 L217.1 346.9 L221.7 345.9 L226.4 345.0 L231.0 344.1 L235.7 343.1 L240.3 342.2 L245.0 341.3 L249.6 340.3 L254.3 339.4 L257.3 338.9 L260.4 338.5 L263.5 338.3 L266.8 338.3 L270.0 338.4 L273.2 338.7 L276.5 339.2 L279.6 339.8 L282.7 340.6 L285.7 341.5 L288.6 342.6 L291.3 343.8 L293.8 345.1 L296.2 346.5 L298.4 348.0 L300.3 349.7 L302.0 351.4 L303.5 353.1 L304.7 354.9 L305.7 356.8 L306.3 358.7 L306.7 360.6 L306.8 362.4 L306.7 364.3 L306.2 366.1 L305.5 367.9 L304.5 369.6 L303.2 371.3 L301.7 372.8 L299.9 374.3 L297.9 375.7 L295.7 376.9 L293.3 378.0 L290.7 379.0 L287.9 379.8 L285.0 380.5 L280.4 381.4 L275.7 382.3 L271.1 383.3 L266.4 384.2 L261.8 385.1 L257.1 386.1 L252.5 387.0 L247.8 387.9 L243.2 388.9 L238.6 389.8 L233.9 390.7 L229.3 391.7 L224.4 386.8 L219.9 381.8 L215.6 376.7 L211.6 371.6 L207.9 366.4 L204.5 361.2 L201.3 355.9 Z" fill="rgb(0,206,0)"/>
<linearGradient id="ph1" gradientUnits="userSpaceOnUse" x1="244.2" y1="0" x2="295.0" y2="0"><stop offset="0" stop-color="rgb(0,60,0)"/><stop offset="1" stop-color="rgb(0,175,0)"/></linearGradient>
<path d="M294.9 362.3 L294.7 363.8 L294.1 365.2 L293.3 366.7 L292.2 368.0 L290.9 369.2 L289.3 370.4 L287.5 371.4 L285.6 372.3 L283.4 373.1 L281.1 373.7 L278.7 374.2 L276.2 374.5 L273.6 374.6 L270.9 374.6 L268.3 374.5 L265.7 374.1 L263.1 373.7 L260.5 373.0 L258.1 372.3 L255.8 371.3 L253.7 370.3 L251.7 369.2 L249.9 367.9 L248.4 366.6 L247.1 365.2 L246.0 363.7 L245.2 362.2 L244.6 360.7 L244.4 359.1 L244.4 357.6 L244.6 356.1 L245.2 354.6 L246.0 353.2 L247.1 351.9 L248.4 350.6 L250.0 349.5 L251.8 348.5 L253.7 347.6 L255.9 346.8 L258.2 346.2 L260.6 345.7 L263.1 345.4 L265.7 345.2 L268.3 345.2 L271.0 345.4 L273.6 345.7 L276.2 346.2 L278.7 346.8 L281.2 347.6 L283.5 348.5 L285.6 349.5 L287.6 350.7 L289.3 351.9 L290.9 353.3 L292.2 354.7 L293.3 356.2 L294.1 357.7 L294.7 359.2 L294.9 360.7 Z" fill="url(#ph1)" stroke="#033a03" stroke-width="1.1"/>
</g>
<path d="M198.5 350.6 L203.2 348.6 L208.0 346.5 L212.7 344.5 L217.5 342.4 L222.2 340.4 L227.0 338.3 L231.7 336.3 L236.5 334.2 L241.2 332.2 L246.0 330.1 L250.7 328.1 L255.5 326.0 L258.6 324.8 L261.7 323.7 L265.0 322.8 L268.3 322.1 L271.6 321.5 L274.9 321.1 L278.1 320.9 L281.4 320.9 L284.5 321.1 L287.5 321.6 L290.4 322.7 L293.1 323.9 L295.7 325.2 L298.0 326.6 L300.2 328.1 L302.2 329.7 L303.9 331.4 L305.4 333.2 L306.6 335.0 L307.5 336.9 L308.2 338.8 L308.6 340.6 L308.7 342.5 L308.5 344.4 L308.1 346.2 L307.3 348.0 L306.3 350.2 L305.0 352.4 L303.4 354.6 L301.5 356.7 L299.5 358.7 L297.2 360.7 L294.7 362.5 L292.1 364.2 L289.2 365.7 L286.3 367.1 L281.5 369.1 L276.8 371.2 L272.0 373.2 L267.3 375.3 L262.5 377.3 L257.8 379.4 L253.0 381.4 L248.3 383.5 L243.5 385.5 L238.8 387.6 L234.0 389.6 L229.3 391.7" fill="none" stroke="#033a03" stroke-width="1.2" stroke-linejoin="round"/>
<clipPath id="cp2"><path d="M307.8 174.4 L311.3 175.7 L314.9 177.0 L318.4 178.3 L322.0 179.5 L325.5 180.8 L329.1 182.1 L332.6 183.4 L336.2 184.7 L339.7 185.9 L343.3 187.2 L346.8 188.5 L350.4 189.8 L352.5 190.6 L354.4 191.6 L356.1 192.6 L357.5 193.7 L358.7 194.8 L359.6 196.0 L360.2 197.2 L360.6 198.5 L360.6 199.8 L360.4 201.2 L359.8 203.0 L359.0 204.7 L357.9 206.4 L356.5 208.0 L354.9 209.6 L353.0 211.0 L350.9 212.3 L348.6 213.5 L346.1 214.5 L343.5 215.4 L340.7 216.2 L337.7 216.8 L334.7 217.3 L331.5 217.6 L328.3 217.7 L325.1 217.6 L321.8 217.9 L318.5 218.1 L315.3 218.2 L312.1 218.2 L309.0 218.0 L306.0 217.8 L303.1 217.3 L300.4 216.8 L297.8 216.2 L295.5 215.4 L291.9 214.1 L288.4 212.9 L284.8 211.6 L281.3 210.3 L277.7 209.0 L274.2 207.7 L270.6 206.5 L267.1 205.2 L263.5 203.9 L260.0 202.6 L256.4 201.4 L252.9 200.1 L259.0 196.4 L265.3 192.8 L271.9 189.4 L278.7 186.1 L285.6 183.0 L292.8 180.0 L300.2 177.1 Z"/></clipPath>
<linearGradient id="pw2" gradientUnits="userSpaceOnUse" x1="252.9" y1="0" x2="360.6" y2="0"><stop offset="0" stop-color="rgb(0,190,0)"/><stop offset="1" stop-color="rgb(0,195,0)"/></linearGradient>
<path d="M307.8 174.4 L311.3 175.7 L314.9 177.0 L318.4 178.3 L322.0 179.5 L325.5 180.8 L329.1 182.1 L332.6 183.4 L336.2 184.7 L339.7 185.9 L343.3 187.2 L346.8 188.5 L350.4 189.8 L352.5 190.6 L354.4 191.6 L356.1 192.6 L357.5 193.7 L358.7 194.8 L359.6 196.0 L360.2 197.2 L360.6 198.5 L360.6 199.8 L360.4 201.2 L359.8 203.0 L359.0 204.7 L357.9 206.4 L356.5 208.0 L354.9 209.6 L353.0 211.0 L350.9 212.3 L348.6 213.5 L346.1 214.5 L343.5 215.4 L340.7 216.2 L337.7 216.8 L334.7 217.3 L331.5 217.6 L328.3 217.7 L325.1 217.6 L321.8 217.9 L318.5 218.1 L315.3 218.2 L312.1 218.2 L309.0 218.0 L306.0 217.8 L303.1 217.3 L300.4 216.8 L297.8 216.2 L295.5 215.4 L291.9 214.1 L288.4 212.9 L284.8 211.6 L281.3 210.3 L277.7 209.0 L274.2 207.7 L270.6 206.5 L267.1 205.2 L263.5 203.9 L260.0 202.6 L256.4 201.4 L252.9 200.1 L259.0 196.4 L265.3 192.8 L271.9 189.4 L278.7 186.1 L285.6 183.0 L292.8 180.0 L300.2 177.1 Z" fill="url(#pw2)"/>
<g clip-path="url(#cp2)">
<path d="M307.8 174.4 L311.2 176.8 L314.7 179.2 L318.1 181.6 L321.5 184.0 L325.0 186.4 L328.4 188.8 L331.9 191.2 L335.3 193.6 L338.8 196.0 L342.2 198.4 L345.7 200.8 L349.1 203.2 L351.2 204.7 L353.1 206.4 L354.7 208.1 L356.0 209.9 L357.2 211.7 L358.0 213.6 L358.5 215.5 L358.8 217.4 L358.8 219.2 L358.5 221.1 L358.0 222.9 L357.1 224.7 L356.0 226.3 L354.6 228.0 L353.0 229.5 L351.2 230.9 L349.1 232.2 L346.8 233.4 L344.3 234.4 L341.6 235.4 L338.8 236.1 L335.9 236.7 L332.8 237.2 L329.7 237.5 L326.5 237.6 L323.3 237.6 L320.0 237.4 L316.8 237.0 L313.6 236.5 L310.5 235.8 L307.4 235.0 L304.5 234.0 L301.7 232.9 L299.0 231.6 L296.5 230.3 L294.2 228.8 L290.8 226.4 L287.3 224.0 L283.9 221.6 L280.4 219.2 L277.0 216.8 L273.5 214.4 L270.1 212.0 L266.7 209.6 L263.2 207.3 L259.8 204.9 L256.3 202.5 L252.9 200.1 L259.0 196.4 L265.3 192.8 L271.9 189.4 L278.7 186.1 L285.6 183.0 L292.8 180.0 L300.2 177.1 Z" fill="rgb(0,192,0)"/>
<linearGradient id="ph2" gradientUnits="userSpaceOnUse" x1="296.3" y1="0" x2="347.1" y2="0"><stop offset="0" stop-color="rgb(0,70,0)"/><stop offset="1" stop-color="rgb(0,175,0)"/></linearGradient>
<path d="M347.0 218.3 L346.7 219.8 L346.1 221.3 L345.3 222.7 L344.2 224.0 L342.9 225.3 L341.3 226.4 L339.6 227.4 L337.6 228.3 L335.4 229.1 L333.1 229.7 L330.7 230.2 L328.2 230.5 L325.6 230.7 L323.0 230.7 L320.3 230.5 L317.7 230.2 L315.1 229.7 L312.6 229.1 L310.1 228.3 L307.9 227.4 L305.7 226.4 L303.7 225.2 L302.0 224.0 L300.4 222.6 L299.1 221.2 L298.0 219.7 L297.2 218.2 L296.6 216.7 L296.4 215.2 L296.4 213.6 L296.7 212.1 L297.2 210.7 L298.0 209.2 L299.1 207.9 L300.4 206.7 L302.0 205.5 L303.8 204.5 L305.7 203.6 L307.9 202.8 L310.2 202.2 L312.6 201.7 L315.1 201.4 L317.7 201.3 L320.4 201.3 L323.0 201.4 L325.7 201.8 L328.2 202.2 L330.8 202.9 L333.2 203.6 L335.5 204.6 L337.6 205.6 L339.6 206.7 L341.4 208.0 L342.9 209.3 L344.2 210.7 L345.3 212.2 L346.1 213.7 L346.7 215.2 L347.0 216.8 Z" fill="url(#ph2)" stroke="#033a03" stroke-width="1.1"/>
</g>
<path d="M307.8 174.4 L311.3 175.7 L314.9 177.0 L318.4 178.3 L322.0 179.5 L325.5 180.8 L329.1 182.1 L332.6 183.4 L336.2 184.7 L339.7 185.9 L343.3 187.2 L346.8 188.5 L350.4 189.8 L352.5 190.6 L354.4 191.6 L356.1 192.6 L357.5 193.7 L358.7 194.8 L359.6 196.0 L360.2 197.2 L360.6 198.5 L360.6 199.8 L360.4 201.2 L359.8 203.0 L359.0 204.7 L357.9 206.4 L356.5 208.0 L354.9 209.6 L353.0 211.0 L350.9 212.3 L348.6 213.5 L346.1 214.5 L343.5 215.4 L340.7 216.2 L337.7 216.8 L334.7 217.3 L331.5 217.6 L328.3 217.7 L325.1 217.6 L321.8 217.9 L318.5 218.1 L315.3 218.2 L312.1 218.2 L309.0 218.0 L306.0 217.8 L303.1 217.3 L300.4 216.8 L297.8 216.2 L295.5 215.4 L291.9 214.1 L288.4 212.9 L284.8 211.6 L281.3 210.3 L277.7 209.0 L274.2 207.7 L270.6 206.5 L267.1 205.2 L263.5 203.9 L260.0 202.6 L256.4 201.4 L252.9 200.1" fill="none" stroke="#033a03" stroke-width="1.2" stroke-linejoin="round"/>
<clipPath id="cp3"><path d="M642.4 198.7 L640.0 200.0 L637.5 201.3 L635.1 202.6 L632.7 203.9 L630.3 205.2 L627.9 206.5 L625.5 207.8 L623.0 209.1 L620.6 210.4 L618.2 211.7 L615.8 213.0 L613.4 214.3 L611.7 215.1 L609.8 215.8 L607.7 216.3 L605.4 216.7 L602.9 217.0 L600.3 217.2 L597.5 217.2 L594.5 217.2 L591.5 217.0 L588.4 216.7 L585.2 216.8 L581.9 216.7 L578.7 216.4 L575.5 216.0 L572.3 215.4 L569.2 214.7 L566.2 213.8 L563.3 212.7 L560.5 211.6 L558.0 210.3 L555.5 208.9 L553.3 207.4 L551.3 205.8 L549.6 204.1 L548.1 202.3 L546.8 200.5 L545.7 199.1 L545.0 197.8 L544.5 196.6 L544.2 195.4 L544.3 194.2 L544.6 193.0 L545.2 191.9 L546.1 190.9 L547.3 190.0 L548.7 189.1 L551.1 187.8 L553.5 186.5 L555.9 185.2 L558.3 183.9 L560.8 182.6 L563.2 181.3 L565.6 180.0 L568.0 178.7 L570.4 177.4 L572.8 176.1 L575.2 174.8 L577.7 173.5 L586.2 176.2 L594.7 178.9 L603.0 181.9 L611.2 185.0 L619.3 188.2 L627.1 191.6 L634.8 195.1 Z"/></clipPath>
<linearGradient id="pw3" gradientUnits="userSpaceOnUse" x1="544.2" y1="0" x2="642.4" y2="0"><stop offset="0" stop-color="rgb(0,70,0)"/><stop offset="1" stop-color="rgb(0,135,0)"/></linearGradient>
<path d="M642.4 198.7 L640.0 200.0 L637.5 201.3 L635.1 202.6 L632.7 203.9 L630.3 205.2 L627.9 206.5 L625.5 207.8 L623.0 209.1 L620.6 210.4 L618.2 211.7 L615.8 213.0 L613.4 214.3 L611.7 215.1 L609.8 215.8 L607.7 216.3 L605.4 216.7 L602.9 217.0 L600.3 217.2 L597.5 217.2 L594.5 217.2 L591.5 217.0 L588.4 216.7 L585.2 216.8 L581.9 216.7 L578.7 216.4 L575.5 216.0 L572.3 215.4 L569.2 214.7 L566.2 213.8 L563.3 212.7 L560.5 211.6 L558.0 210.3 L555.5 208.9 L553.3 207.4 L551.3 205.8 L549.6 204.1 L548.1 202.3 L546.8 200.5 L545.7 199.1 L545.0 197.8 L544.5 196.6 L544.2 195.4 L544.3 194.2 L544.6 193.0 L545.2 191.9 L546.1 190.9 L547.3 190.0 L548.7 189.1 L551.1 187.8 L553.5 186.5 L555.9 185.2 L558.3 183.9 L560.8 182.6 L563.2 181.3 L565.6 180.0 L568.0 178.7 L570.4 177.4 L572.8 176.1 L575.2 174.8 L577.7 173.5 L586.2 176.2 L594.7 178.9 L603.0 181.9 L611.2 185.0 L619.3 188.2 L627.1 191.6 L634.8 195.1 Z" fill="url(#pw3)"/>
<g clip-path="url(#cp3)">
<path d="M642.4 198.7 L639.8 201.2 L637.3 203.6 L634.8 206.0 L632.3 208.4 L629.8 210.8 L627.3 213.2 L624.7 215.6 L622.2 218.0 L619.7 220.5 L617.2 222.9 L614.7 225.3 L612.1 227.7 L610.4 229.2 L608.5 230.6 L606.3 231.8 L603.9 233.0 L601.4 233.9 L598.6 234.8 L595.8 235.5 L592.8 236.0 L589.7 236.4 L586.5 236.7 L583.3 236.7 L580.1 236.6 L576.8 236.3 L573.6 235.9 L570.4 235.3 L567.3 234.6 L564.3 233.7 L561.4 232.7 L558.7 231.5 L556.1 230.2 L553.7 228.8 L551.5 227.3 L549.5 225.7 L547.7 224.0 L546.2 222.3 L544.9 220.4 L543.9 218.6 L543.2 216.7 L542.8 214.8 L542.6 213.0 L542.7 211.1 L543.1 209.2 L543.8 207.5 L544.7 205.7 L546.0 204.1 L547.4 202.5 L550.0 200.1 L552.5 197.7 L555.0 195.2 L557.5 192.8 L560.0 190.4 L562.5 188.0 L565.1 185.6 L567.6 183.2 L570.1 180.8 L572.6 178.3 L575.1 175.9 L577.7 173.5 L586.2 176.2 L594.7 178.9 L603.0 181.9 L611.2 185.0 L619.3 188.2 L627.1 191.6 L634.8 195.1 Z" fill="rgb(0,192,0)"/>
<linearGradient id="ph3" gradientUnits="userSpaceOnUse" x1="554.4" y1="0" x2="605.2" y2="0"><stop offset="0" stop-color="rgb(0,100,0)"/><stop offset="1" stop-color="rgb(0,170,0)"/></linearGradient>
<path d="M605.1 217.4 L604.8 218.9 L604.2 220.4 L603.4 221.8 L602.3 223.1 L601.0 224.4 L599.5 225.5 L597.7 226.6 L595.7 227.5 L593.6 228.2 L591.3 228.9 L588.8 229.3 L586.3 229.6 L583.7 229.8 L581.1 229.8 L578.4 229.6 L575.8 229.3 L573.2 228.8 L570.7 228.2 L568.3 227.4 L566.0 226.5 L563.8 225.5 L561.9 224.3 L560.1 223.1 L558.5 221.7 L557.2 220.3 L556.1 218.9 L555.3 217.4 L554.8 215.8 L554.5 214.3 L554.5 212.7 L554.8 211.2 L555.3 209.8 L556.2 208.4 L557.2 207.0 L558.6 205.8 L560.1 204.6 L561.9 203.6 L563.9 202.7 L566.0 201.9 L568.3 201.3 L570.7 200.8 L573.3 200.5 L575.8 200.4 L578.5 200.4 L581.1 200.5 L583.8 200.9 L586.4 201.4 L588.9 202.0 L591.3 202.8 L593.6 203.7 L595.7 204.7 L597.7 205.9 L599.5 207.1 L601.0 208.4 L602.4 209.8 L603.4 211.3 L604.3 212.8 L604.8 214.4 L605.1 215.9 Z" fill="url(#ph3)" stroke="#033a03" stroke-width="1.1"/>
</g>
<path d="M642.4 198.7 L640.0 200.0 L637.5 201.3 L635.1 202.6 L632.7 203.9 L630.3 205.2 L627.9 206.5 L625.5 207.8 L623.0 209.1 L620.6 210.4 L618.2 211.7 L615.8 213.0 L613.4 214.3 L611.7 215.1 L609.8 215.8 L607.7 216.3 L605.4 216.7 L602.9 217.0 L600.3 217.2 L597.5 217.2 L594.5 217.2 L591.5 217.0 L588.4 216.7 L585.2 216.8 L581.9 216.7 L578.7 216.4 L575.5 216.0 L572.3 215.4 L569.2 214.7 L566.2 213.8 L563.3 212.7 L560.5 211.6 L558.0 210.3 L555.5 208.9 L553.3 207.4 L551.3 205.8 L549.6 204.1 L548.1 202.3 L546.8 200.5 L545.7 199.1 L545.0 197.8 L544.5 196.6 L544.2 195.4 L544.3 194.2 L544.6 193.0 L545.2 191.9 L546.1 190.9 L547.3 190.0 L548.7 189.1 L551.1 187.8 L553.5 186.5 L555.9 185.2 L558.3 183.9 L560.8 182.6 L563.2 181.3 L565.6 180.0 L568.0 178.7 L570.4 177.4 L572.8 176.1 L575.2 174.8 L577.7 173.5" fill="none" stroke="#033a03" stroke-width="1.2" stroke-linejoin="round"/>
<clipPath id="cp4"><path d="M739.9 389.9 L735.0 387.9 L730.1 385.9 L725.2 383.9 L720.3 381.9 L715.4 379.8 L710.5 377.8 L705.6 375.8 L700.7 373.8 L695.8 371.8 L690.9 369.8 L686.0 367.7 L681.1 365.7 L678.0 364.4 L675.0 362.9 L672.1 361.2 L669.3 359.4 L666.7 357.5 L664.3 355.5 L662.0 353.4 L659.9 351.2 L658.1 349.0 L656.4 346.8 L655.0 345.0 L653.9 343.2 L653.0 341.3 L652.3 339.5 L652.0 337.6 L652.0 335.7 L652.2 333.8 L652.7 332.0 L653.5 330.2 L654.5 328.5 L655.9 326.9 L657.4 325.4 L659.3 323.9 L661.3 322.6 L663.6 321.4 L666.0 320.3 L668.6 319.8 L671.3 319.6 L674.2 319.6 L677.2 319.8 L680.2 320.1 L683.3 320.7 L686.5 321.4 L689.7 322.3 L692.8 323.3 L696.0 324.5 L700.9 326.5 L705.8 328.5 L710.7 330.6 L715.6 332.6 L720.5 334.6 L725.4 336.6 L730.3 338.6 L735.2 340.6 L740.1 342.6 L745.0 344.7 L749.9 346.7 L754.8 348.7 L754.0 354.0 L752.8 359.3 L751.4 364.5 L749.7 369.7 L747.7 374.9 L745.4 380.0 L742.8 385.0 Z"/></clipPath>
<linearGradient id="pw4" gradientUnits="userSpaceOnUse" x1="652.0" y1="0" x2="754.8" y2="0"><stop offset="0" stop-color="rgb(0,100,0)"/><stop offset="1" stop-color="rgb(0,160,0)"/></linearGradient>
<path d="M739.9 389.9 L735.0 387.9 L730.1 385.9 L725.2 383.9 L720.3 381.9 L715.4 379.8 L710.5 377.8 L705.6 375.8 L700.7 373.8 L695.8 371.8 L690.9 369.8 L686.0 367.7 L681.1 365.7 L678.0 364.4 L675.0 362.9 L672.1 361.2 L669.3 359.4 L666.7 357.5 L664.3 355.5 L662.0 353.4 L659.9 351.2 L658.1 349.0 L656.4 346.8 L655.0 345.0 L653.9 343.2 L653.0 341.3 L652.3 339.5 L652.0 337.6 L652.0 335.7 L652.2 333.8 L652.7 332.0 L653.5 330.2 L654.5 328.5 L655.9 326.9 L657.4 325.4 L659.3 323.9 L661.3 322.6 L663.6 321.4 L666.0 320.3 L668.6 319.8 L671.3 319.6 L674.2 319.6 L677.2 319.8 L680.2 320.1 L683.3 320.7 L686.5 321.4 L689.7 322.3 L692.8 323.3 L696.0 324.5 L700.9 326.5 L705.8 328.5 L710.7 330.6 L715.6 332.6 L720.5 334.6 L725.4 336.6 L730.3 338.6 L735.2 340.6 L740.1 342.6 L745.0 344.7 L749.9 346.7 L754.8 348.7 L754.0 354.0 L752.8 359.3 L751.4 364.5 L749.7 369.7 L747.7 374.9 L745.4 380.0 L742.8 385.0 Z" fill="url(#pw4)"/>
<g clip-path="url(#cp4)">
<path d="M739.9 389.9 L734.9 389.0 L729.9 388.1 L724.9 387.2 L719.9 386.3 L714.9 385.4 L709.9 384.5 L704.9 383.6 L699.9 382.7 L694.8 381.8 L689.8 380.9 L684.8 380.0 L679.8 379.1 L676.7 378.5 L673.6 377.7 L670.7 376.7 L667.8 375.6 L665.1 374.4 L662.6 373.1 L660.3 371.6 L658.2 370.1 L656.3 368.4 L654.6 366.7 L653.2 364.9 L652.0 363.1 L651.1 361.3 L650.5 359.4 L650.2 357.5 L650.1 355.6 L650.3 353.8 L650.8 351.9 L651.6 350.2 L652.7 348.5 L654.0 346.8 L655.6 345.3 L657.4 343.8 L659.5 342.5 L661.7 341.3 L664.2 340.2 L666.8 339.3 L669.6 338.5 L672.5 337.8 L675.5 337.4 L678.6 337.0 L681.8 336.9 L685.1 336.9 L688.3 337.1 L691.5 337.4 L694.7 337.9 L699.7 338.8 L704.7 339.7 L709.7 340.6 L714.8 341.5 L719.8 342.4 L724.8 343.3 L729.8 344.2 L734.8 345.1 L739.8 346.0 L744.8 346.9 L749.8 347.8 L754.8 348.7 L754.0 354.0 L752.8 359.3 L751.4 364.5 L749.7 369.7 L747.7 374.9 L745.4 380.0 L742.8 385.0 Z" fill="rgb(0,188,0)"/>
<linearGradient id="ph4" gradientUnits="userSpaceOnUse" x1="661.9" y1="0" x2="712.7" y2="0"><stop offset="0" stop-color="rgb(0,112,0)"/><stop offset="1" stop-color="rgb(0,168,0)"/></linearGradient>
<path d="M712.6 360.8 L712.3 362.4 L711.7 363.8 L710.9 365.2 L709.8 366.6 L708.5 367.8 L707.0 368.9 L705.2 370.0 L703.2 370.9 L701.1 371.6 L698.8 372.3 L696.3 372.7 L693.8 373.1 L691.2 373.2 L688.6 373.2 L685.9 373.0 L683.3 372.7 L680.7 372.2 L678.2 371.6 L675.8 370.8 L673.5 369.9 L671.3 368.9 L669.4 367.7 L667.6 366.5 L666.0 365.1 L664.7 363.7 L663.6 362.3 L662.8 360.8 L662.3 359.2 L662.0 357.7 L662.0 356.2 L662.3 354.6 L662.8 353.2 L663.7 351.8 L664.7 350.4 L666.1 349.2 L667.6 348.1 L669.4 347.0 L671.4 346.1 L673.5 345.4 L675.8 344.7 L678.2 344.3 L680.8 343.9 L683.4 343.8 L686.0 343.8 L688.6 344.0 L691.3 344.3 L693.9 344.8 L696.4 345.4 L698.8 346.2 L701.1 347.1 L703.2 348.1 L705.2 349.3 L707.0 350.5 L708.5 351.8 L709.9 353.3 L710.9 354.7 L711.8 356.2 L712.3 357.8 L712.6 359.3 Z" fill="url(#ph4)" stroke="#033a03" stroke-width="1.1"/>
</g>
<path d="M739.9 389.9 L735.0 387.9 L730.1 385.9 L725.2 383.9 L720.3 381.9 L715.4 379.8 L710.5 377.8 L705.6 375.8 L700.7 373.8 L695.8 371.8 L690.9 369.8 L686.0 367.7 L681.1 365.7 L678.0 364.4 L675.0 362.9 L672.1 361.2 L669.3 359.4 L666.7 357.5 L664.3 355.5 L662.0 353.4 L659.9 351.2 L658.1 349.0 L656.4 346.8 L655.0 345.0 L653.9 343.2 L653.0 341.3 L652.3 339.5 L652.0 337.6 L652.0 335.7 L652.2 333.8 L652.7 332.0 L653.5 330.2 L654.5 328.5 L655.9 326.9 L657.4 325.4 L659.3 323.9 L661.3 322.6 L663.6 321.4 L666.0 320.3 L668.6 319.8 L671.3 319.6 L674.2 319.6 L677.2 319.8 L680.2 320.1 L683.3 320.7 L686.5 321.4 L689.7 322.3 L692.8 323.3 L696.0 324.5 L700.9 326.5 L705.8 328.5 L710.7 330.6 L715.6 332.6 L720.5 334.6 L725.4 336.6 L730.3 338.6 L735.2 340.6 L740.1 342.6 L745.0 344.7 L749.9 346.7 L754.8 348.7" fill="none" stroke="#033a03" stroke-width="1.2" stroke-linejoin="round"/>
<path d="M755.1 345.9 L754.4 351.6 L753.3 357.2 L751.9 362.8 L750.2 368.4 L748.1 373.9 L745.7 379.3 L743.0 384.6 L739.9 389.9 L736.5 395.1 L732.7 400.2 L728.7 405.2 L724.3 410.1 L719.7 414.9 L714.7 419.5 L709.4 424.1 L703.8 428.5 L698.0 432.8 L691.9 436.9 L685.5 440.9 L678.8 444.8 L671.9 448.5 L664.8 452.0 L657.4 455.4 L649.8 458.6 L641.9 461.7 L633.9 464.5 L625.6 467.2 L617.2 469.8 L608.6 472.1 L599.8 474.2 L590.9 476.2 L581.8 478.0 L572.6 479.6 L563.2 480.9 L553.8 482.1 L544.2 483.1 L534.6 483.9 L524.9 484.5 L515.1 484.9 L505.2 485.1 L495.3 485.0 L485.4 484.8 L475.5 484.4 L465.6 483.8 L455.6 483.0 L445.7 481.9 L435.8 480.7 L426.0 479.3 L416.2 477.7 L406.5 475.9 L396.9 473.9 L387.3 471.7 L377.9 469.4 L368.5 466.8 L359.3 464.1 L350.2 461.2 L341.3 458.1 L332.6 454.9 L324.0 451.4 L315.5 447.9 L307.3 444.1 L299.3 440.3 L291.4 436.2 L283.8 432.1 L276.5 427.8 L269.3 423.3 L262.4 418.8 L255.8 414.1 L249.4 409.3 L243.3 404.4 L237.4 399.4 L231.9 394.2 L226.6 389.0 L221.7 383.8 L217.0 378.4 L212.7 373.0 L208.6 367.5 L204.9 361.9 L201.5 356.3 L198.5 350.6 L195.7 344.9 L193.4 339.2 L191.3 333.5 L189.6 327.7 L188.2 321.9 L187.2 316.1 L186.5 310.4 L186.2 304.6 L186.2 298.8 L186.5 293.1 L187.2 287.4 L188.3 281.8 L189.7 276.2 L191.4 270.6 L193.5 265.1 L195.9 259.7 L198.6 254.4 L201.7 249.1 L205.1 243.9 L208.9 238.8 L212.9 233.8 L217.3 228.9 L221.9 224.1 L226.9 219.5 L232.2 214.9 L237.8 210.5 L243.6 206.2 L249.7 202.1 L256.1 198.1 L262.8 194.2 L269.7 190.5 L276.8 187.0 L284.2 183.6 L291.8 180.4 L299.7 177.3 L307.7 174.5 L316.0 171.8 L324.4 169.2 L333.0 166.9 L341.8 164.8 L350.7 162.8 L359.8 161.0 L369.0 159.4 L378.4 158.1 L387.8 156.9 L397.4 155.9 L407.0 155.1 L416.7 154.5 L426.5 154.1 L436.4 153.9 L446.3 154.0 L456.2 154.2 L466.1 154.6 L476.0 155.2 L486.0 156.0 L495.9 157.1 L505.8 158.3 L515.6 159.7 L525.4 161.3 L535.1 163.1 L544.7 165.1 L554.3 167.3 L563.7 169.6 L573.1 172.2 L582.3 174.9 L591.4 177.8 L600.3 180.9 L609.0 184.1 L617.6 187.6 L626.1 191.1 L634.3 194.9 L642.3 198.7 L650.2 202.8 L657.8 206.9 L665.1 211.2 L672.3 215.7 L679.2 220.2 L685.8 224.9 L692.2 229.7 L698.3 234.6 L704.2 239.6 L709.7 244.8 L715.0 250.0 L719.9 255.2 L724.6 260.6 L728.9 266.0 L733.0 271.5 L736.7 277.1 L740.1 282.7 L743.1 288.4 L745.9 294.1 L748.2 299.8 L750.3 305.5 L752.0 311.3 L753.4 317.1 L754.4 322.9 L755.1 328.6 L755.4 334.4 L755.4 340.2 Z" fill="none" stroke="#033a03" stroke-width="1.2"/>
<path d="M630.2 314.2 L629.5 318.9 L628.4 323.6 L626.9 328.2 L625.0 332.7 L622.6 337.1 L619.9 341.5 L616.7 345.7 L613.1 349.8 L609.2 353.7 L604.9 357.5 L600.2 361.2 L595.1 364.6 L589.8 367.9 L584.1 371.1 L578.1 374.0 L571.8 376.7 L565.3 379.2 L558.4 381.5 L551.4 383.5 L544.1 385.3 L536.7 386.9 L529.0 388.3 L521.3 389.4 L513.3 390.2 L505.3 390.9 L497.2 391.2 L489.0 391.3 L480.8 391.2 L472.5 390.8 L464.2 390.2 L456.0 389.3 L447.8 388.1 L439.7 386.8 L431.7 385.1 L423.8 383.3 L416.0 381.2 L408.4 378.9 L400.9 376.4 L393.6 373.7 L386.6 370.7 L379.8 367.6 L373.3 364.3 L367.0 360.8 L361.0 357.1 L355.3 353.3 L350.0 349.3 L344.9 345.2 L340.3 341.0 L336.0 336.7 L332.0 332.2 L328.5 327.7 L325.3 323.1 L322.6 318.4 L320.2 313.7 L318.3 308.9 L316.8 304.1 L315.7 299.3 L315.1 294.5 L314.9 289.7 L315.1 285.0 L315.8 280.3 L316.9 275.6 L318.4 271.0 L320.3 266.5 L322.7 262.0 L325.4 257.7 L328.6 253.5 L332.2 249.4 L336.1 245.4 L340.4 241.6 L345.1 238.0 L350.1 234.5 L355.5 231.2 L361.2 228.1 L367.2 225.2 L373.5 222.5 L380.0 220.0 L386.9 217.7 L393.9 215.7 L401.2 213.8 L408.6 212.2 L416.3 210.9 L424.0 209.8 L432.0 208.9 L440.0 208.3 L448.1 208.0 L456.3 207.8 L464.5 208.0 L472.8 208.4 L481.0 209.0 L489.3 209.9 L497.5 211.0 L505.6 212.4 L513.6 214.0 L521.5 215.9 L529.3 218.0 L536.9 220.3 L544.4 222.8 L551.6 225.5 L558.7 228.5 L565.5 231.6 L572.0 234.9 L578.3 238.4 L584.3 242.1 L590.0 245.9 L595.3 249.8 L600.4 253.9 L605.0 258.2 L609.3 262.5 L613.3 267.0 L616.8 271.5 L620.0 276.1 L622.7 280.8 L625.1 285.5 L627.0 290.3 L628.5 295.0 L629.5 299.8 L630.2 304.7 L630.4 309.4 Z" fill="none" stroke="#033a03" stroke-width="1.2"/>
<path d="M755.1 345.9 L752.2 376.5 L751.5 382.2 L750.5 387.9 L749.1 393.5 L747.4 399.0 L745.3 404.5 L742.9 409.9 L740.1 415.3 L737.0 420.6 L733.6 425.8 L729.9 430.9 L725.9 435.9 L721.5 440.7 L716.8 445.5 L711.8 450.2 L706.6 454.7 L701.0 459.2 L695.2 463.4 L689.0 467.6 L682.6 471.6 L676.0 475.4 L669.1 479.1 L661.9 482.7 L654.5 486.1 L646.9 489.3 L639.1 492.3 L631.0 495.2 L622.8 497.9 L614.4 500.4 L605.7 502.8 L597.0 504.9 L588.0 506.9 L578.9 508.6 L569.7 510.2 L560.4 511.6 L550.9 512.8 L541.4 513.8 L531.7 514.6 L522.0 515.2 L512.2 515.5 L502.4 515.7 L492.5 515.7 L482.6 515.5 L472.7 515.1 L462.7 514.4 L452.8 513.6 L442.9 512.6 L433.0 511.4 L423.2 510.0 L413.4 508.4 L403.7 506.6 L394.0 504.6 L384.5 502.4 L375.0 500.0 L365.7 497.5 L356.5 494.8 L347.4 491.8 L338.5 488.8 L329.7 485.5 L321.1 482.1 L312.7 478.5 L304.5 474.8 L296.4 470.9 L288.6 466.9 L281.0 462.7 L273.6 458.4 L266.5 454.0 L259.6 449.4 L252.9 444.7 L246.5 439.9 L240.4 435.0 L234.6 430.0 L229.1 424.9 L223.8 419.7 L218.8 414.4 L214.2 409.1 L209.8 403.6 L205.8 398.1 L202.1 392.6 L198.7 387.0 L195.6 381.3 L192.9 375.6 L190.5 369.9 L188.5 364.1 L186.7 358.4 L185.4 352.6 L184.3 346.8 L183.6 341.0 L183.3 335.3 L183.3 329.5 L183.7 323.8 L186.5 293.1" fill="none" stroke="#033a03" stroke-width="1.2"/>
</g>
<g fill="none" stroke="#30ea3c" stroke-width="2" stroke-linecap="butt"><path d="M388.7 476.2 L469.0 522.3 L550.2 476.5" /><path d="M469.0 522.3 L469.0 539.0" /><path d="M387.7 552.2 L469.0 599.8 L550.8 552.7" /><path d="M469.0 599.8 L469.0 584.0" /></g>
<rect x="466.500" y="325" width="6" height="6" fill="#22e822" stroke="#0a5a0a" stroke-width="0.900"/>
<path d="M42.0 574.1 L53.7 569.6 L65.5 568.2 L77.2 569.6 L88.9 574.1 L85.2 578.3 L65.5 592.0 L44.7 578.9 Z" fill="#5a5af0"/><path d="M49.5 577.8 L56.9 572.5 L65.5 571.1 L63.9 589.0 L60.1 587.4 Z" fill="#ff5a5a"/><path d="M65.5 571.1 L74.0 571.9 L81.3 578.3 L69.7 588.1 L65.5 586.3 Z" fill="#0ce00c"/><path d="M61.0 587.4 L65.5 584.7 L69.9 587.9 L65.5 592.0 Z" fill="#4e6a4e"/><path d="M65.500 546.0 V571.0" stroke="#1a1ad0" stroke-width="1.200"/><path d="M88.5 572.5 L101.0 565.3" stroke="#e86a5a" stroke-width="1.200"/><path d="M42.5 574.5 L30.0 566.3" stroke="#6a8a6a" stroke-width="1.200"/><text x="62" y="541.5" font-size="8.600" fill="#333">z</text><text x="18.500" y="566.0" font-size="8.600" fill="#333">y</text><text x="104" y="565.5" font-size="8.600" fill="#333">x</text>
<path d="M458.0 420.0 C470.0 406.0 500.0 403.0 520.0 412.0 C540.0 422.0 547.0 435.0 543.0 450.0 C538.0 464.0 515.0 468.0 495.0 465.0 C478.0 463.0 462.0 455.0 456.0 443.0 C451.0 433.0 452.0 426.0 460.0 417.0" fill="none" stroke="#bd3014" stroke-opacity="0.850" stroke-width="1.050" stroke-linecap="round" stroke-linejoin="round"/><path d="M571.0 424.0 L543.5 436.5 M550.5 428.5 L543.5 436.5 L554.5 442.0" fill="none" stroke="#bd3014" stroke-opacity="0.850" stroke-width="1.050" stroke-linecap="round" stroke-linejoin="round"/><path d="M804.7 414.1 L815.4 413.7 L815.9 425.8 L816.8 435.1 L815.4 442.6 L808.9 450.0 L800.1 443.5 L799.1 427.6 Z M808.5 409.9 L808.5 415.0 M809.9 415.1 L813.6 425.8 L814.5 439.8 L809.9 448.6 M809.9 429.5 L812.2 431.4 L812.2 437.0 L810.3 438.8 Z M802.4 424.9 L804.3 423.0 M804.7 437.4 L807.1 437.9" fill="none" stroke="#e23636" stroke-opacity="0.900" stroke-width="0.900" stroke-linecap="round" stroke-linejoin="round"/>
<text font-family="DejaVu Sans Light, DejaVu Sans, Liberation Sans, sans-serif" font-weight="200" fill="#bd3014" fill-opacity="0.850" stroke="#bd3014" stroke-opacity="0.800" stroke-width="0.850"><tspan x="573.5" y="425.5" font-size="25.4" textLength="6.5" lengthAdjust="spacingAndGlyphs">Н</tspan><tspan x="581.0" y="427.3" font-size="24.0" textLength="13.5" lengthAdjust="spacingAndGlyphs">Е</tspan><tspan x="597.0" y="428.3" font-size="21.0" textLength="12.2" lengthAdjust="spacingAndGlyphs">С</tspan><tspan x="610.5" y="429.0" font-size="24.0" textLength="15.5" lengthAdjust="spacingAndGlyphs">К</tspan><tspan x="627.8" y="433.0" font-size="24.7" textLength="26.2" lengthAdjust="spacingAndGlyphs">О</tspan><tspan x="655.0" y="431.8" font-size="23.0" textLength="27.5" lengthAdjust="spacingAndGlyphs">Ш</tspan><tspan x="683.0" y="431.8" font-size="30.2" textLength="25.0" lengthAdjust="spacingAndGlyphs">А</tspan><tspan x="710.0" y="430.8" font-size="24.4" textLength="17.5" lengthAdjust="spacingAndGlyphs">Н</tspan><tspan x="729.5" y="437.8" font-size="29.9" textLength="22.5" lengthAdjust="spacingAndGlyphs">Ы</tspan><tspan x="755.5" y="436.0" font-size="36.4" textLength="21.5" lengthAdjust="spacingAndGlyphs">Й</tspan></text>
</svg>
</div>
<div id="splitter" class="abs"></div>
<div id="ctxlabel" class="abs">Context area</div>
<div class="abs" style="left:948px;top:378px;width:2px;height:16px;background:repeating-linear-gradient(#b4b1a2 0 1px,transparent 1px 3px)"></div>
<div id="rpanel" class="abs"></div>
<div id="tree" class="abs"></div>
<div class="abs" style="left:968px;top:76px;width:229px;height:13px;background:#ece9d8"></div>
<svg class="abs" style="left:967px;top:61px" width="231" height="45" viewBox="967 61 231 45">
 <defs>
  <radialGradient id="tsph" cx="0.38" cy="0.32" r="0.7"><stop offset="0" stop-color="#fff"/><stop offset="0.5" stop-color="#c4c4c4"/><stop offset="1" stop-color="#6a6a6a"/></radialGradient>
  <radialGradient id="tdk" cx="0.38" cy="0.32" r="0.7"><stop offset="0" stop-color="#9a9a9a"/><stop offset="1" stop-color="#3a3a3a"/></radialGradient>
 </defs>
 <path d="M976.5 75 V96.5 H984" fill="none" stroke="#b8b8b0" stroke-width="1" stroke-dasharray="1 1"/>
 <path d="M981 70.5 H985" fill="none" stroke="#b8b8b0" stroke-width="1" stroke-dasharray="1 1"/>
 <rect x="972.5" y="66.500" width="8" height="8" fill="#fff" stroke="#9aa4b4" stroke-width="1"/><path d="M974.500 70.500 h4" stroke="#333" stroke-width="1"/>
 <circle cx="990.5" cy="67.500" r="3.300" fill="#5a6068"/><circle cx="988.5" cy="72" r="3.400" fill="url(#tsph)"/><circle cx="993.500" cy="71" r="3.600" fill="url(#tsph)"/>
 <circle cx="1003" cy="82.500" r="3.500" fill="url(#tdk)"/>
 <ellipse cx="1014.500" cy="82.500" rx="4" ry="3.400" fill="#f08a20"/><path d="M1012.500 83 l1.500 -1.500 l1.500 1.200 l1.200 -1.200" stroke="#fff0d8" stroke-width="0.800" fill="none"/>
 <path d="M984.500 91.500 h11 M984.500 93.500 h11 M984.500 95.500 h11 M984.500 97.500 h11 M984.500 99.500 h11" stroke="#333" stroke-width="1.200"/>
 <g id="foldico"><path d="M1183.500 67.500 l3 -2.500 l3 1 l2 -1.500 l2.500 2 l-1 6.500 h-9 Z" fill="#e89028" stroke="#a85a10" stroke-width="0.600"/><path d="M1184 73 l2 -4.500 h8.500 l-1.500 4.500 Z" fill="#f8b860"/><circle cx="1191.500" cy="66" r="1.500" fill="#5a6068"/></g>
 <use href="#foldico" y="25"/>
 <circle cx="1189" cy="82.500" r="4" fill="#fff4f0" stroke="#8a4a40" stroke-width="0.900"/><path d="M1187.500 81 l3 3 M1190.500 81 l-3 3" stroke="#e02020" stroke-width="1.100"/>
</svg>
<div class="abs" style="left:999px;top:64px;font-weight:bold;font-size:9.6px;line-height:13px">Parts</div>
<div class="abs" style="left:1025px;top:76px;font-size:9.6px;line-height:13px;white-space:nowrap;letter-spacing:-0.130px">Шайба на колесо (100%)</div>
<div class="abs" style="left:999px;top:89px;font-weight:bold;font-size:9.6px;line-height:13px">Slices</div>
<div class="abs gb" style="left:970px;top:448px;width:224px;height:106px"></div>
<div class="abs gbl" style="left:974px;top:443px">Cuts</div>
<div class="abs lb" style="left:977px;top:459px"><b>X:</b></div>
<div class="abs lb" style="left:977px;top:478px"><b>Y:</b></div>
<div class="abs lb" style="left:977px;top:496px"><b>Z:</b></div>
<div class="abs ob" style="left:988px;top:460px"></div>
<div class="abs ob" style="left:988px;top:478px"></div>
<div class="abs ob" style="left:988px;top:497px"></div>
<div class="abs trk" style="left:1012px;top:460px;width:121px"></div>
<div class="abs trk" style="left:1012px;top:478px;width:121px"></div>
<div class="abs trk" style="left:1012px;top:497px;width:121px"></div>
<div class="abs sb" style="left:1012px;top:460px;width:12px"></div><div class="abs sb" style="left:1121px;top:460px;width:12px"></div><div class="abs sb" style="left:1027px;top:460px;width:13px"></div>
<div class="abs sb" style="left:1012px;top:478px;width:12px"></div><div class="abs sb" style="left:1121px;top:478px;width:12px"></div><div class="abs sb" style="left:1027px;top:478px;width:13px"></div>
<div class="abs sb" style="left:1012px;top:497px;width:12px"></div><div class="abs sb" style="left:1121px;top:497px;width:12px"></div><div class="abs sb" style="left:1042px;top:497px;width:13px"></div>
<svg class="abs" style="left:1012px;top:458px" width="122" height="52" viewBox="1012 458 122 52">
 <g fill="none" stroke="#3d5fc4" stroke-width="1.600">
  <path d="M1019.500 463 l-2.600 2.600 l2.600 2.600"/><path d="M1125.500 463 l2.600 2.600 l-2.600 2.600"/>
  <path d="M1019.500 481 l-2.600 2.600 l2.600 2.600"/><path d="M1125.500 481 l2.600 2.600 l-2.600 2.600"/>
  <path d="M1019.500 500 l-2.600 2.600 l2.600 2.600"/><path d="M1125.500 500 l2.600 2.600 l-2.600 2.600"/>
 </g>
 <g stroke="#8ea8e8" stroke-width="1"><path d="M1031.500 463.500 v4 M1033.500 463.500 v4 M1035.500 463.500 v4 M1031.500 481.500 v4 M1033.500 481.500 v4 M1035.500 481.500 v4 M1046.500 500.500 v4 M1048.500 500.500 v4 M1050.500 500.500 v4"/></g>
</svg>
<div class="abs inp" style="left:1138px;top:458px;width:33px;height:15px"><b>0.00</b></div><div class="abs lb" style="left:1174px;top:460px"><b>mm</b></div>
<div class="abs inp" style="left:1138px;top:476px;width:33px;height:15px"><b>0.00</b></div><div class="abs lb" style="left:1174px;top:478px"><b>mm</b></div>
<div class="abs inp" style="left:1138px;top:495px;width:33px;height:15px"><b>0.00</b></div><div class="abs lb" style="left:1174px;top:497px"><b>mm</b></div>
<div class="abs inp" style="left:977px;top:516px;width:211px;height:15px;padding-left:3px"><b>&lt;cutting disabled&gt;</b></div>
<div class="abs" style="left:1175px;top:518px;width:11px;height:11px;border-radius:2px;background:linear-gradient(#d0dcfb,#b4c8f5)"></div>
<svg class="abs" style="left:1175px;top:518px" width="11" height="11"><path d="M2.800 3.800 l2.700 2.900 l2.700 -2.900" fill="none" stroke="#3d5fc4" stroke-width="1.700"/></svg>
<div class="abs lb ctr" style="left:1021px;top:534px;width:80px;height:15px;border:1px solid #cfcbb8;border-radius:3px;text-align:center;line-height:13px;color:#aca899;background:#f1efe4"><b>Execute cut</b></div>
<div class="abs lb ctr" style="left:1107px;top:534px;width:81px;height:15px;border:1px solid #203a70;border-radius:3px;text-align:center;line-height:13px;background:linear-gradient(#fff,#f3f2ea 70%,#dcd8c8)"><b>Reset</b></div>

<div class="abs gb" style="left:970px;top:561px;width:224px;height:62px"></div>
<div class="abs gbl" style="left:974px;top:555px">Information</div>
<div class="abs lb" style="left:977px;top:572px"><b>Length:</b></div><div class="abs inp" style="left:1008px;top:569px;width:39px;height:15px"><b>90.18</b></div><div class="abs lb" style="left:1051px;top:572px"><b>mm</b></div>
<div class="abs lb" style="left:977px;top:589px"><b>Width:</b></div><div class="abs inp" style="left:1008px;top:586px;width:39px;height:15px"><b>90.15</b></div><div class="abs lb" style="left:1051px;top:589px"><b>mm</b></div>
<div class="abs lb" style="left:977px;top:606px"><b>Height:</b></div><div class="abs inp" style="left:1008px;top:603px;width:39px;height:15px"><b>14.85</b></div><div class="abs lb" style="left:1051px;top:606px"><b>mm</b></div>
<div class="abs lb" style="left:1076px;top:572px"><b>Volume:</b></div><div class="abs inp" style="left:1126px;top:569px;width:45px;height:15px"><b>33.82</b></div><div class="abs lb" style="left:1173px;top:572px"><b>cm³</b></div>
<div class="abs lb" style="left:1076px;top:589px"><b>Area:</b></div><div class="abs inp" style="left:1126px;top:586px;width:45px;height:15px"><b>128.95</b></div><div class="abs lb" style="left:1173px;top:589px"><b>cm²</b></div>
<div class="abs lb" style="left:1076px;top:606px"><b>Triangles:</b></div><div class="abs inp" style="left:1126px;top:603px;width:45px;height:15px"><b>3344</b></div>
<div class="abs lb ctr" style="left:970px;top:628px;width:224px;height:17px;border:1px solid #d6d2c0;border-radius:2px;text-align:center;line-height:15px;background:#f1efe6"><b>1 of 1 part is selected.</b></div>
<div class="abs" style="left:1020px;top:663px;width:123px;height:29px;border-radius:9px;background:linear-gradient(#0f5597 0%,#0a4a88 45%,#063c74 100%);box-shadow:0 0 1px #5a88b8;color:#fff;font-style:italic;font-size:15px;line-height:28px;text-align:center;white-space:nowrap">Upgrade now!</div>
<div class="abs" style="left:966px;top:711px;width:234px;height:1px;background:#b9b6a4"></div>
<div id="statusbar" class="abs"></div>
<div class="abs" style="left:1.500px;top:716px;width:9px;height:9px;border-radius:50%;background:#e60a0a"></div>
<div class="abs lb" style="left:15px;top:716px"><b>rotate/move</b></div>
<div class="abs" style="left:153px;top:714px;width:1px;height:14px;background:#c9c5b2"></div>
<div class="abs lb" style="left:158px;top:716px"><b>move and rotate the selected parts by the mouse and the cursor keys</b></div>
<div class="abs" style="left:531px;top:718px;width:650px;height:9px;background:#fff;border:1px solid #9a9686;border-radius:3px"></div>
<div id="taskbar" class="abs"></div>
<div class="abs" style="left:0;top:729px;width:74px;height:24px;border-radius:0 9px 9px 0;background:linear-gradient(#3c9a3c 0%,#63bd63 10%,#3f9c3f 26%,#348f34 60%,#2f872f 100%);box-shadow:1px 0 2px #1a3a8a"></div>
<svg class="abs" style="left:8px;top:734px" width="14" height="13" viewBox="0 0 15 14"><path d="M1 2.500 Q4 1 6.500 2.500 L5.500 6.500 Q3 5.200 0.200 6.500 Z" fill="#e8502a"/><path d="M7.500 2.800 Q10.500 4 13.500 2.500 L12.500 6.500 Q9.500 8 6.500 6.800 Z" fill="#7ac043"/><path d="M0 7.500 Q2.800 6.200 5.300 7.500 L4.300 11.500 Q1.800 10.300 -1 11.500 Z" fill="#3a8ee8"/><path d="M6.300 7.800 Q9.300 9 12.300 7.500 L11.300 11.500 Q8.300 13 5.300 11.800 Z" fill="#f8c020"/></svg>
<div class="abs" style="left:25px;top:732.500px;color:#fff;font-weight:bold;font-style:italic;font-size:14.500px;line-height:18px;text-shadow:1px 1px 1px #1a4a1a;letter-spacing:0">пуск</div>
<div class="abs" style="left:82px;top:731px;width:112px;height:22px;border-radius:2px;background:linear-gradient(#5a9af8,#3c81f3 30%,#3878ea);box-shadow:inset 0 0 1px #9ac0ff"></div>
<svg class="abs" style="left:88px;top:734px" width="12" height="12" viewBox="0 0 12 12"><circle cx="6" cy="6" r="5.500" fill="#e8c020"/><path d="M6 6 L0.800 4 A5.500 5.500 0 0 1 10.800 3.300 Z" fill="#e04a30"/><path d="M6 6 L10.800 3.300 A5.500 5.500 0 0 1 6.500 11.500 Z" fill="#5aaa40"/><circle cx="6" cy="6" r="2.300" fill="#4a8ae8" stroke="#fff" stroke-width="0.800"/></svg>
<div class="abs" style="left:102px;top:734px;color:#fff;font-size:9.600px;line-height:13px;white-space:nowrap">3d принтер в таш...</div>
<div class="abs" style="left:197px;top:731px;width:112px;height:22px;border-radius:2px;background:#1e52b7;box-shadow:inset 1px 1px 2px #123a8a"></div>
<svg class="abs" style="left:203px;top:735px" width="13" height="11" viewBox="0 0 13 12"><g fill="none" stroke="#dfe6ff" stroke-width="1"><rect x="0.500" y="1.500" width="4" height="3.500"/><rect x="0.500" y="6.500" width="4" height="3.500"/><rect x="8.500" y="1.500" width="4" height="3.500"/><rect x="8.500" y="6.500" width="4" height="3.500"/></g><rect x="4" y="3" width="5" height="5.500" fill="#e8305a"/></svg>
<div class="abs" style="left:218px;top:734px;color:#fff;font-size:9.600px;line-height:13px">netfabb</div>
<div class="abs" style="left:1116px;top:734px;color:#fff;font-size:9px;line-height:13px">EN</div>
<div class="abs" style="left:1141px;top:728px;width:59px;height:22px;background:linear-gradient(#1aa0ee 0%,#3ab8f8 8%,#129aea 20%,#0f8ee0 60%,#0e7ad0 100%);border-left:1px solid #0a5cc0;box-shadow:inset 1px 0 1px #5ac8ff"></div>
<div class="abs" style="left:1136px;top:734px;width:12px;height:12px;border-radius:50%;background:radial-gradient(circle at 40% 35%,#8ac8ff,#2a7ae8);border:1px solid #d8ecff"></div>
<svg class="abs" style="left:1136px;top:734px" width="12" height="12"><path d="M7 3.500 L4.500 6 L7 8.500" fill="none" stroke="#fff" stroke-width="1.500"/></svg>
<div class="abs" style="left:1150px;top:735px;width:9px;height:9px;border-radius:50%;background:radial-gradient(circle at 45% 40%,#f0c8a0 0,#c87830 25%,#4a3a3a 60%,#2a2a3a 100%)"></div>
<div class="abs" style="left:1166px;top:734px;color:#fff;font-size:9.600px;line-height:13px">17:23</div>
</body>
</html>
